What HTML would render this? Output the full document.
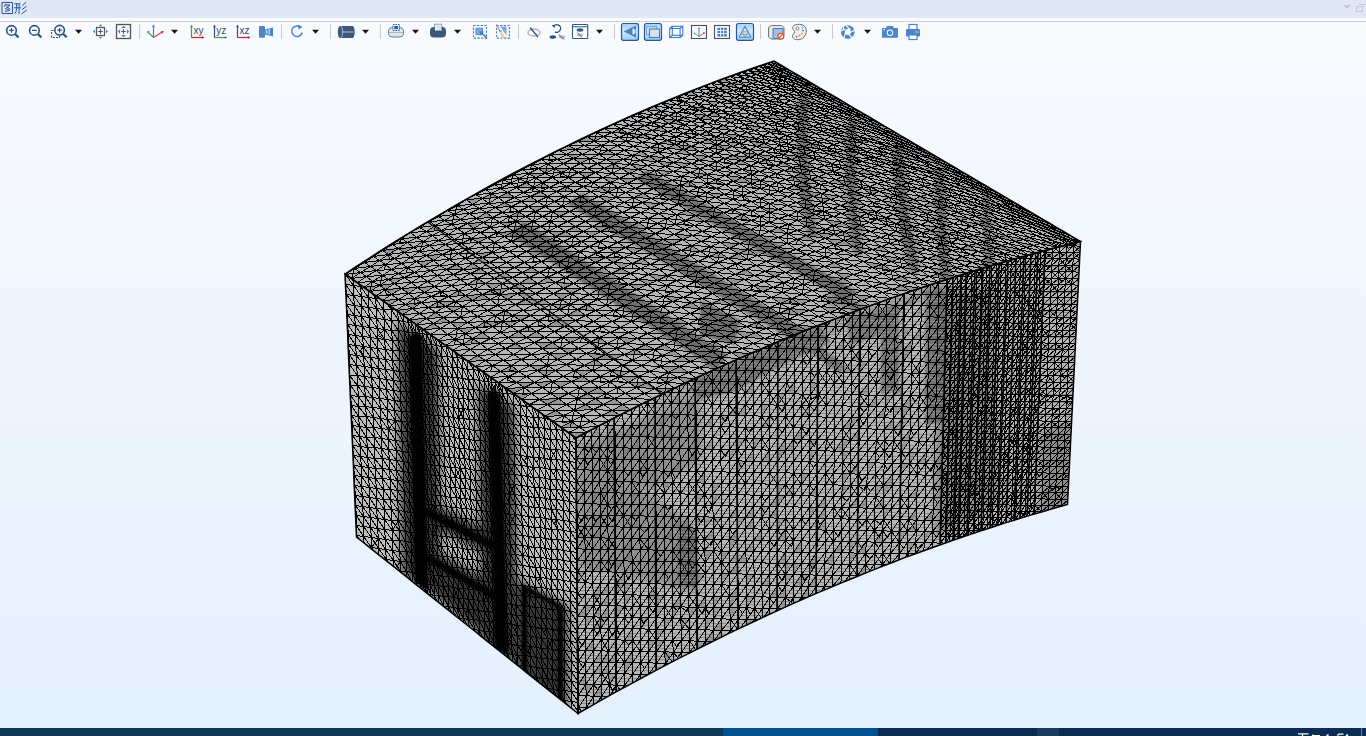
<!DOCTYPE html>
<html><head><meta charset="utf-8">
<style>
html,body{margin:0;padding:0;width:1366px;height:736px;overflow:hidden;font-family:"Liberation Sans",sans-serif;}
#title{position:absolute;left:0;top:0;width:1366px;height:18px;background:#dfe8f4;}
#gap{position:absolute;left:0;top:18px;width:1366px;height:3px;background:#f9fbfe;}
#hr{position:absolute;left:0;top:21px;width:1366px;height:1px;background:#cdd1d6;}
#view{position:absolute;left:0;top:22px;width:1366px;height:706px;background:linear-gradient(#f8fafe,#e4f0fd);}
#task{position:absolute;left:0;top:728px;width:1366px;height:8px;background:#0f3a57;overflow:hidden;border-top:0;}
</style></head><body>
<div id="title"></div><div id="gap"></div><div id="hr"></div>
<div id="view"></div>
<svg width="1366" height="44" viewBox="0 0 1366 44" style="position:absolute;left:0;top:0">
<defs>
<linearGradient id="selg" x1="0" y1="0" x2="0" y2="1"><stop offset="0" stop-color="#a9cdf0"/><stop offset="0.5" stop-color="#d6e9fb"/><stop offset="1" stop-color="#9ccaf3"/></linearGradient>
</defs>
<!-- title -->
<g fill="none" stroke="#1d4f9c" stroke-width="0.95">
 <path d="M2 2.5h10.5v11H2z"/>
 <path d="M6 3.8L4 6.8M5.2 5h4.8L5 9.3M6.5 6.8l4 2.6M6.3 8.8l2.3 0.8M5 11.3l4.8-0.9"/>
 <path d="M14.3 3.8h6.2M14 7.8h6.8M16.6 3.8v4.5q0 3.5-2 5.4M19.1 3.8v9.9"/>
 <path d="M26.2 2.3L22.3 5.6M26.6 6.2L22 9.6M26.8 10.2L21.5 13.8"/>
</g>
<path d="M1343 5 h8 l-4 4z" fill="#c4cad3"/>
<rect x="1356.5" y="6.5" width="6" height="5" fill="none" stroke="#c4cad3"/>
<path d="M1359 4.5 h7" stroke="#c4cad3"/>
<!-- separators -->
<g stroke="#c9ccd0" stroke-width="1">
 <path d="M139.5 24v15M281.5 24v15M330.5 24v15M380.5 24v15M518.5 24v15M614.5 24v15M760.5 24v15M832.5 24v15"/>
</g>
<!-- dropdowns -->
<g fill="#151515">
 <path d="M75 29.8h7l-3.5 4z"/><path d="M171 29.8h7l-3.5 4z"/><path d="M312 29.8h7l-3.5 4z"/><path d="M362 29.8h7l-3.5 4z"/>
 <path d="M412 29.8h7l-3.5 4z"/><path d="M454 29.8h7l-3.5 4z"/><path d="M596 29.8h7l-3.5 4z"/><path d="M814 29.8h7l-3.5 4z"/><path d="M864 29.8h7l-3.5 4z"/>
</g>
<!-- zoom in / out -->
<g stroke="#2b5383" fill="none">
 <circle cx="11.5" cy="30.4" r="4.8" stroke-width="1.6"/>
 <path d="M15 34 L18.5 37.5" stroke-width="2.3"/>
 <path d="M9.2 30.4h4.6M11.5 28.1v4.6" stroke-width="1.2"/>
 <circle cx="34.4" cy="30.4" r="4.8" stroke-width="1.6"/>
 <path d="M37.9 34 L41.4 37.5" stroke-width="2.3"/>
 <path d="M32 30.4h4.8" stroke-width="1.2"/>
 <rect x="51.5" y="30.5" width="8" height="7" stroke-width="1.1" stroke-dasharray="2 1.3"/>
 <circle cx="59.6" cy="30.2" r="4.8" stroke-width="1.6" fill="#f8fafe"/>
 <path d="M63.1 33.8 L66.6 37.3" stroke-width="2.3"/>
 <path d="M57.3 30.2h4.6M59.6 27.9v4.6" stroke-width="1.2"/>
</g>
<!-- zoom extents -->
<g>
 <rect x="96.5" y="27.5" width="8" height="8" fill="none" stroke="#555" stroke-width="1.2"/>
 <path d="M98.3 31.5h4.4M100.5 29.3v4.4" stroke="#555" stroke-width="1.1"/>
 <g fill="#4a86c8"><path d="M100.5 24.3l2 2h-4z"/><path d="M100.5 38.7l2-2h-4z"/><path d="M93 31.5l2-2v4z"/><path d="M108 31.5l-2-2v4z"/></g>
 <rect x="116.5" y="24.5" width="14" height="14" fill="none" stroke="#555" stroke-width="1.3"/>
 <path d="M121.3 31.5h4.4M123.5 29.3v4.4" stroke="#555" stroke-width="1.1"/>
 <g fill="#4a86c8"><path d="M123.5 25.8l2.5 2.3h-5z"/><path d="M123.5 37.2l2.5-2.3h-5z"/><path d="M117.8 31.5l2.3-2.5v5z"/><path d="M129.2 31.5l-2.3-2.5v5z"/></g>
</g>
<!-- axis -->
<g stroke-width="1.2" fill="none">
 <path d="M153.5 37.5V26" stroke="#3f7fc4"/><path d="M153.5 37.5L148 32" stroke="#4aab3c"/><path d="M153.5 37.5L163 31.5" stroke="#e0306a"/>
</g>
<path d="M153.5 24.5l1.6 2.6h-3.2z" fill="#3f7fc4"/><path d="M147 31l3 .4-2.3 2.3z" fill="#4aab3c"/><path d="M164 31l-3.2.2 1.5 2.6z" fill="#e0306a"/>
<!-- xy yz xz -->
<g stroke-width="1.2" fill="none">
 <path d="M191.5 37.5V26" stroke="#3aa23a"/><path d="M191.5 37.5H203" stroke="#c8262f"/>
 <path d="M214.5 37.5V26" stroke="#2b5383"/><path d="M214.5 37.5H226" stroke="#3aa23a"/>
 <path d="M237.5 37.5V26" stroke="#2b5383"/><path d="M237.5 37.5H249" stroke="#c8262f"/>
</g>
<g><path d="M191.5 24.8l1.5 2.4h-3z" fill="#3aa23a"/><path d="M204.3 37.5l-2.4 1.5v-3z" fill="#c8262f"/>
<path d="M214.5 24.8l1.5 2.4h-3z" fill="#2b5383"/><path d="M227.3 37.5l-2.4 1.5v-3z" fill="#3aa23a"/>
<path d="M237.5 24.8l1.5 2.4h-3z" fill="#2b5383"/><path d="M250.3 37.5l-2.4 1.5v-3z" fill="#c8262f"/></g>
<g font-family="Liberation Sans, sans-serif" font-size="10" fill="#3b4a5a">
 <text x="193.6" y="34.2">xy</text><text x="216.2" y="34.2">yz</text><text x="239.6" y="34.2">xz</text>
</g>
<!-- camera projection -->
<g fill="#4a86c8"><rect x="259" y="26" width="6" height="11.8" rx="1"/><path d="M265 29.5l8-2v9l-8-2z"/></g>
<g fill="#bcd4ee"><rect x="265.8" y="30" width="1.5" height="3.5"/><rect x="268.5" y="29" width="1.5" height="5.5"/></g>
<!-- rotate -->
<path d="M300.5 27.2 A5.3 5.3 0 1 0 302.2 32.5" fill="none" stroke="#4a86c8" stroke-width="1.5"/>
<path d="M298 24.5l4.5 2.6-4 2.5z" fill="#4a86c8"/>
<!-- cylinder -->
<path d="M340 26h12.5a2.2 6 0 0 1 0 12H340a2.2 6 0 0 1 0-12z" fill="#3b5878"/>
<path d="M340.5 26.2 a2.2 5.8 0 0 1 0 11.6" fill="none" stroke="#c7d6e6" stroke-width="0.7"/>
<path d="M341.5 32h12" stroke="#c7d6e6" stroke-width="0.8"/>
<!-- light rounded rect -->
<rect x="388.5" y="27.5" width="15" height="9.5" rx="3.5" fill="#e4e6e8" stroke="#5b7fa8" stroke-width="1"/>
<path d="M389 32.5h14" stroke="#9ab0c8" stroke-width="0.8"/>
<rect x="393" y="24.5" width="6.5" height="6" fill="#fff" stroke="#1f5fae" stroke-width="1" stroke-dasharray="1.6 0.9"/>
<rect x="394.2" y="26" width="4" height="3.2" fill="#1f5fae"/>
<!-- dark rounded rect -->
<rect x="430" y="27" width="16" height="10.5" rx="4" fill="#3b5878"/>
<rect x="435" y="24.5" width="6.5" height="6" fill="#e0e4e8" stroke="#fff" stroke-width="1" stroke-dasharray="1.6 0.9"/>
<rect x="434.6" y="24.1" width="7.3" height="6.8" fill="none" stroke="#3b5878" stroke-width="0.5"/>
<!-- select -->
<rect x="473.5" y="25.5" width="13" height="12.6" fill="none" stroke="#3f7fc4" stroke-width="1.1" stroke-dasharray="2.2 1.4"/>
<rect x="476" y="28.2" width="6.5" height="6.5" fill="#7aaee0" stroke="#3f7fc4" stroke-width="0.8"/>
<path d="M480.5 32.2l6.5 6" stroke="#3f7fc4" stroke-width="1.6"/>
<path d="M479.3 31l4.8 0.8-3.8 3.6z" fill="#3f7fc4"/>
<!-- broom -->
<rect x="496.5" y="25.5" width="13" height="12.6" fill="none" stroke="#3f7fc4" stroke-width="1.1" stroke-dasharray="2.2 1.4"/>
<path d="M500 26.5h6.5v9" fill="#7aaee0"/>
<path d="M496.5 24.5l3.6 7" stroke="#a88455" stroke-width="1.1"/>
<path d="M499.5 31.5l1.8-0.6 4 6.5-3.5 1.3z" fill="#e8d2a8"/>
<path d="M499.3 31.6l2.2-0.9" stroke="#d8553a" stroke-width="1"/>
<!-- eye slash -->
<ellipse cx="534" cy="32.5" rx="6" ry="3.4" fill="none" stroke="#b8b8b8" stroke-width="1.6"/>
<path d="M530 27.5l8 9.5" stroke="#2b5383" stroke-width="1.2"/>
<!-- reset hide -->
<path d="M553.5 26.5 A3.8 3.8 0 1 1 555 31.8" fill="none" stroke="#2b5383" stroke-width="1.3"/>
<path d="M551.5 25.5l3.3-1v3.6z" fill="#2b5383"/>
<ellipse cx="552.8" cy="37" rx="3.2" ry="1.8" fill="#2b5383"/>
<ellipse cx="562" cy="37" rx="3.2" ry="1.8" fill="#c0c0c0"/>
<path d="M558.7 34.5l5.5 5" stroke="#2b5383" stroke-width="0.9"/>
<!-- window eye -->
<rect x="572.5" y="24.5" width="15.2" height="14" rx="0.8" fill="#fff" stroke="#2b5b8f" stroke-width="1.1"/>
<path d="M573 26.8h14.5" stroke="#2b5b8f" stroke-width="1"/>
<ellipse cx="580" cy="30" rx="3.4" ry="1.7" fill="#2b5b8f"/>
<ellipse cx="580" cy="35" rx="3.4" ry="1.7" fill="#c4c4c4"/>
<path d="M577.5 32.5l4.5 5" stroke="#2b5b8f" stroke-width="0.9"/>
<!-- selected buttons -->
<rect x="621.5" y="23.5" width="17" height="16.8" rx="2" fill="url(#selg)" stroke="#2457a5" stroke-width="1.2"/>
<path d="M623.5 31.5l12.5-6v12z" fill="#3f7fc4" opacity="0.95"/>
<path d="M636 25.5 A5 6 0 0 1 636 37.5" fill="none" stroke="#3f7fc4" stroke-width="0"/>
<path d="M632.5 28.5a3 3 0 0 1 0 6" fill="#d7e8f8"/>
<path d="M636 25l2.5-1.5M636 38l2.5 1.5" stroke="#777" stroke-width="0.6"/>
<rect x="644.5" y="23.5" width="17" height="16.8" rx="2" fill="url(#selg)" stroke="#2457a5" stroke-width="1.2"/>
<rect x="646.5" y="26.5" width="10" height="8" fill="none" stroke="#7ba7d6" stroke-width="1"/>
<rect x="649.5" y="29" width="10" height="8.5" fill="#d9e3ee" stroke="#3f7fc4" stroke-width="1.1"/>
<!-- wireframe box -->
<g fill="none" stroke="#3f7fc4" stroke-width="1.1">
 <rect x="669.6" y="28.5" width="10.5" height="9"/><rect x="672.3" y="26.3" width="10.5" height="9"/>
 <path d="M669.6 28.5l2.7-2.2M680.1 28.5l2.7-2.2M680.1 37.5l2.7-2.2M669.6 37.5l2.7-2.2"/>
</g>
<!-- axis box -->
<rect x="691.5" y="25.5" width="15" height="13" fill="none" stroke="#505050" stroke-width="1.1"/>
<path d="M699 36.5V28.5" stroke="#3f7fc4" stroke-width="0.9"/><path d="M699 36.5l-4.5-3" stroke="#4aab3c" stroke-width="0.9"/><path d="M699 36.5l5-3.5" stroke="#e0306a" stroke-width="0.9"/>
<path d="M699 27.3l1.3 1.8h-2.6z" fill="#3f7fc4"/><circle cx="694.3" cy="33.3" r="0.9" fill="#4aab3c"/><circle cx="704" cy="32.9" r="0.9" fill="#e0306a"/>
<!-- grid -->
<rect x="714.5" y="25.5" width="15" height="13" fill="none" stroke="#505050" stroke-width="1.1"/>
<g fill="#3f7fc4"><rect x="717.5" y="27.8" width="9.3" height="8.8"/></g>
<g stroke="#fff" stroke-width="0.9"><path d="M717.5 30.5h9.3M717.5 33.5h9.3M720.6 27.8v8.8M723.6 27.8v8.8"/></g>
<g fill="#3f7fc4" opacity="0"><rect x="0" y="0" width="1" height="1"/></g>
<!-- mesh selected -->
<rect x="736.5" y="23.5" width="17" height="16.8" rx="2" fill="url(#selg)" stroke="#2457a5" stroke-width="1.2"/>
<path d="M745 26.3l6 10.8h-12z" fill="#e0e0e0" stroke="#3f7fc4" stroke-width="1"/>
<path d="M742 31.8h6M741 34.5h8M745 26.3l-3 5.5 3 5.3 3-5.3z" fill="none" stroke="#3f7fc4" stroke-width="0.5"/>
<!-- box no entry -->
<path d="M768.5 27.5l3-2h10l2.5 2v9l-3 2.5h-10l-2.5-2z" fill="#e8e8e8" stroke="#666" stroke-width="0.9"/>
<path d="M773 28.5h10v10h-10z" fill="#a8bde0" stroke="#3f7fc4" stroke-width="1"/>
<circle cx="780.8" cy="36.2" r="2.9" fill="#fff" stroke="#e0502a" stroke-width="1.2"/>
<path d="M779 38l3.6-3.6" stroke="#e0502a" stroke-width="1.1"/>
<!-- palette -->
<path d="M797.5 24.5c5 -1 9 2 8.8 6.5c-0.2 4.5 -3 8.5 -8.5 8.7c-3.5 0.1 -5.6 -1.5 -5.3 -3.6c0.3 -2.2 2.3 -2.3 2 -4.5c-0.3 -2.2 -2.3 -2 -2 -4c0.3 -1.8 2.5 -2.8 5 -3.1z" fill="#f2f2f2" stroke="#6a6a6a" stroke-width="1"/>
<circle cx="797.5" cy="28.5" r="1.5" fill="#fff" stroke="#777" stroke-width="0.9"/>
<circle cx="802.5" cy="27.5" r="1" fill="#56c3ef"/><circle cx="803" cy="30.5" r="1" fill="#3a8fd8"/><circle cx="802" cy="33.5" r="1" fill="#f3a11d"/><circle cx="799.5" cy="35.5" r="1" fill="#f0772a"/><circle cx="796.5" cy="36.7" r="1" fill="#e53a9a"/>
<!-- aperture -->
<circle cx="847.8" cy="32" r="6.8" fill="#4a86c8"/>
<circle cx="847.8" cy="32" r="3" fill="#fff"/>
<g stroke="#fff" stroke-width="1.1"><path d="M846 25.5l4.5 4.5M854.2 30.5l-5 2.5M852 37.5l-3.5-3.5M844 37.5l1.5-4.5M841.3 31l4-2M843 26l1 4.5"/></g>
<!-- camera -->
<rect x="882" y="28" width="16" height="9.8" rx="0.8" fill="#4a86c8"/>
<rect x="886.5" y="26" width="7" height="3" rx="0.5" fill="#4a86c8"/>
<circle cx="890" cy="32.8" r="3.2" fill="#fff"/><circle cx="890" cy="32.8" r="2.2" fill="#4a86c8"/>
<rect x="883.5" y="29.2" width="1.5" height="1.2" fill="#fff"/>
<!-- printer -->
<rect x="909" y="24.5" width="8" height="5" fill="#fff" stroke="#4a86c8" stroke-width="1.2"/>
<rect x="906" y="29" width="14" height="7.5" rx="1.2" fill="#4a86c8"/>
<rect x="909" y="35" width="8" height="4.5" fill="#fff" stroke="#4a86c8" stroke-width="1.2"/>
<rect x="915.5" y="31.5" width="1" height="1" fill="#fff"/><rect x="917.5" y="31.5" width="1" height="1" fill="#fff"/>
</svg>

<svg width="1366" height="736" viewBox="0 0 1366 736" style="position:absolute;left:0;top:0">
<defs>
<clipPath id="ct"><path d="M345 274 L356 266.7 L367 259.6 L378 252.5 L389 245.5 L400 238.6 L411 231.9 L422 225.2 L433 218.6 L444 212.1 L455 205.7 L466 199.3 L477 193.1 L488 187 L499 181 L510 175 L521 169.2 L532 163.4 L543 157.8 L554 152.2 L565 146.8 L576 141.4 L587 136.1 L598 131 L609 125.9 L620 120.9 L631 116 L642 111.2 L653 106.5 L664 101.9 L675 97.4 L686 93 L697 88.6 L708 84.4 L719 80.3 L730 76.2 L741 72.3 L752 68.4 L763 64.7 L774 61 L774 61 L781.9 65.6 L789.7 70.3 L797.6 74.9 L805.4 79.5 L813.3 84.1 L821.2 88.8 L829 93.4 L836.9 98 L844.7 102.7 L852.6 107.3 L860.4 111.9 L868.3 116.5 L876.2 121.2 L884 125.8 L891.9 130.4 L899.7 135.1 L907.6 139.7 L915.5 144.3 L923.3 148.9 L931.2 153.6 L939 158.2 L946.9 162.8 L954.8 167.4 L962.6 172.1 L970.5 176.7 L978.3 181.3 L986.2 186 L994.1 190.6 L1001.9 195.2 L1009.8 199.8 L1017.6 204.5 L1025.5 209.1 L1033.3 213.7 L1041.2 218.4 L1049.1 223 L1056.9 227.6 L1064.8 232.2 L1072.6 236.9 L1080.5 241.5 L1080.5 241.5 L1067.6 244.7 L1054.6 248 L1041.7 251.5 L1028.7 255 L1015.8 258.6 L1002.8 262.3 L989.9 266.1 L976.9 270 L964 274 L951 278.1 L938.1 282.2 L925.2 286.5 L912.2 290.9 L899.3 295.4 L886.3 299.9 L873.4 304.6 L860.5 309.3 L847.5 314.2 L834.6 319.1 L821.7 324.2 L808.7 329.3 L795.8 334.5 L782.9 339.8 L769.9 345.3 L757 350.8 L744.1 356.4 L731.1 362.1 L718.2 367.9 L705.3 373.8 L692.3 379.8 L679.4 385.9 L666.5 392.1 L653.6 398.3 L640.6 404.7 L627.7 411.2 L614.8 417.7 L601.8 424.4 L588.9 431.2 L576 438 L576 438 L570.1 433.8 L564.2 429.6 L558.2 425.4 L552.3 421.2 L546.4 417 L540.5 412.8 L534.5 408.6 L528.6 404.4 L522.7 400.2 L516.8 395.9 L510.8 391.7 L504.9 387.5 L499 383.3 L493.1 379.1 L487.2 374.9 L481.2 370.7 L475.3 366.5 L469.4 362.3 L463.5 358.1 L457.5 353.9 L451.6 349.7 L445.7 345.5 L439.8 341.3 L433.8 337.1 L427.9 332.9 L422 328.7 L416.1 324.5 L410.2 320.3 L404.2 316.1 L398.3 311.8 L392.4 307.6 L386.5 303.4 L380.5 299.2 L374.6 295 L368.7 290.8 L362.8 286.6 L356.8 282.4 L350.9 278.2 L345 274Z"/></clipPath>
<clipPath id="cl"><path d="M345 274 L350.9 278.2 L356.8 282.4 L362.8 286.6 L368.7 290.8 L374.6 295 L380.5 299.2 L386.5 303.4 L392.4 307.6 L398.3 311.8 L404.2 316.1 L410.2 320.3 L416.1 324.5 L422 328.7 L427.9 332.9 L433.8 337.1 L439.8 341.3 L445.7 345.5 L451.6 349.7 L457.5 353.9 L463.5 358.1 L469.4 362.3 L475.3 366.5 L481.2 370.7 L487.2 374.9 L493.1 379.1 L499 383.3 L504.9 387.5 L510.8 391.7 L516.8 395.9 L522.7 400.2 L528.6 404.4 L534.5 408.6 L540.5 412.8 L546.4 417 L552.3 421.2 L558.2 425.4 L564.2 429.6 L570.1 433.8 L576 438 L576 438 L576.1 445.1 L576.1 452.1 L576.2 459.2 L576.2 466.3 L576.3 473.3 L576.3 480.4 L576.4 487.4 L576.4 494.5 L576.5 501.6 L576.5 508.6 L576.6 515.7 L576.6 522.8 L576.7 529.8 L576.7 536.9 L576.8 544 L576.8 551 L576.9 558.1 L576.9 565.2 L577 572.2 L577 579.3 L577.1 586.3 L577.1 593.4 L577.2 600.5 L577.2 607.5 L577.3 614.6 L577.3 621.7 L577.4 628.7 L577.4 635.8 L577.5 642.9 L577.5 649.9 L577.6 657 L577.6 664.1 L577.7 671.1 L577.7 678.2 L577.8 685.2 L577.8 692.3 L577.9 699.4 L577.9 706.4 L578 713.5 L578 713.5 L572.3 709 L566.6 704.4 L561 699.9 L555.3 695.4 L549.6 690.9 L543.9 686.3 L538.2 681.8 L532.6 677.3 L526.9 672.8 L521.2 668.2 L515.5 663.7 L509.8 659.2 L504.2 654.7 L498.5 650.1 L492.8 645.6 L487.1 641.1 L481.4 636.6 L475.8 632 L470.1 627.5 L464.4 623 L458.7 618.5 L453.1 613.9 L447.4 609.4 L441.7 604.9 L436 600.4 L430.3 595.8 L424.7 591.3 L419 586.8 L413.3 582.3 L407.6 577.7 L401.9 573.2 L396.3 568.7 L390.6 564.2 L384.9 559.6 L379.2 555.1 L373.5 550.6 L367.9 546.1 L362.2 541.5 L356.5 537 L356.5 537 L356.2 530.3 L355.9 523.5 L355.6 516.8 L355.3 510 L355 503.3 L354.7 496.5 L354.4 489.8 L354.1 483.1 L353.8 476.3 L353.6 469.6 L353.3 462.8 L353 456.1 L352.7 449.3 L352.4 442.6 L352.1 435.8 L351.8 429.1 L351.5 422.4 L351.2 415.6 L350.9 408.9 L350.6 402.1 L350.3 395.4 L350 388.6 L349.7 381.9 L349.4 375.2 L349.1 368.4 L348.8 361.7 L348.5 354.9 L348.2 348.2 L347.9 341.4 L347.7 334.7 L347.4 327.9 L347.1 321.2 L346.8 314.5 L346.5 307.7 L346.2 301 L345.9 294.2 L345.6 287.5 L345.3 280.7 L345 274Z"/></clipPath>
<clipPath id="cf"><path d="M576 438 L588.9 431.2 L601.8 424.4 L614.8 417.7 L627.7 411.2 L640.6 404.7 L653.6 398.3 L666.5 392.1 L679.4 385.9 L692.3 379.8 L705.3 373.8 L718.2 367.9 L731.1 362.1 L744.1 356.4 L757 350.8 L769.9 345.3 L782.9 339.8 L795.8 334.5 L808.7 329.3 L821.7 324.2 L834.6 319.1 L847.5 314.2 L860.5 309.3 L873.4 304.6 L886.3 299.9 L899.3 295.4 L912.2 290.9 L925.2 286.5 L938.1 282.2 L951 278.1 L964 274 L976.9 270 L989.9 266.1 L1002.8 262.3 L1015.8 258.6 L1028.7 255 L1041.7 251.5 L1054.6 248 L1067.6 244.7 L1080.5 241.5 L1080.5 241.5 L1080.2 248.2 L1079.8 255 L1079.5 261.7 L1079.2 268.5 L1078.8 275.2 L1078.5 282 L1078.2 288.7 L1077.8 295.4 L1077.5 302.2 L1077.2 308.9 L1076.8 315.7 L1076.5 322.4 L1076.2 329.2 L1075.8 335.9 L1075.5 342.7 L1075.2 349.4 L1074.8 356.1 L1074.5 362.9 L1074.2 369.6 L1073.8 376.4 L1073.5 383.1 L1073.2 389.9 L1072.8 396.6 L1072.5 403.3 L1072.2 410.1 L1071.8 416.8 L1071.5 423.6 L1071.2 430.3 L1070.8 437.1 L1070.5 443.8 L1070.2 450.6 L1069.8 457.3 L1069.5 464 L1069.2 470.8 L1068.8 477.5 L1068.5 484.3 L1068.2 491 L1067.8 497.8 L1067.5 504.5 L1067.5 504.5 L1054.9 508 L1042.4 511.7 L1029.8 515.4 L1017.2 519.2 L1004.7 523.1 L992.1 527.2 L979.6 531.3 L967 535.5 L954.4 539.8 L941.9 544.2 L929.3 548.7 L916.8 553.3 L904.2 557.9 L891.7 562.7 L879.1 567.6 L866.6 572.6 L854 577.7 L841.5 582.8 L828.9 588.1 L816.3 593.4 L803.8 598.9 L791.2 604.4 L778.7 610.1 L766.2 615.8 L753.6 621.7 L741.1 627.6 L728.5 633.6 L716 639.8 L703.4 646 L690.9 652.3 L678.3 658.7 L665.8 665.2 L653.2 671.8 L640.7 678.5 L628.2 685.3 L615.6 692.2 L603.1 699.2 L590.5 706.3 L578 713.5 L578 713.5 L577.9 706.4 L577.9 699.4 L577.8 692.3 L577.8 685.2 L577.7 678.2 L577.7 671.1 L577.6 664.1 L577.6 657 L577.5 649.9 L577.5 642.9 L577.4 635.8 L577.4 628.7 L577.3 621.7 L577.3 614.6 L577.2 607.5 L577.2 600.5 L577.1 593.4 L577.1 586.3 L577 579.3 L577 572.2 L576.9 565.2 L576.9 558.1 L576.8 551 L576.8 544 L576.7 536.9 L576.7 529.8 L576.6 522.8 L576.6 515.7 L576.5 508.6 L576.5 501.6 L576.4 494.5 L576.4 487.4 L576.3 480.4 L576.3 473.3 L576.2 466.3 L576.2 459.2 L576.1 452.1 L576.1 445.1 L576 438Z"/></clipPath>
<filter id="b1" x="-50%" y="-50%" width="200%" height="200%"><feGaussianBlur stdDeviation="1"/></filter>
<filter id="b2" x="-50%" y="-50%" width="200%" height="200%"><feGaussianBlur stdDeviation="2"/></filter>
<filter id="b3" x="-50%" y="-50%" width="200%" height="200%"><feGaussianBlur stdDeviation="3"/></filter>
<filter id="b5" x="-50%" y="-50%" width="200%" height="200%"><feGaussianBlur stdDeviation="5"/></filter>
<filter id="b8" x="-50%" y="-50%" width="200%" height="200%"><feGaussianBlur stdDeviation="8"/></filter>
</defs>
<g clip-path="url(#ct)">
<path d="M345 274 L356 266.7 L367 259.6 L378 252.5 L389 245.5 L400 238.6 L411 231.9 L422 225.2 L433 218.6 L444 212.1 L455 205.7 L466 199.3 L477 193.1 L488 187 L499 181 L510 175 L521 169.2 L532 163.4 L543 157.8 L554 152.2 L565 146.8 L576 141.4 L587 136.1 L598 131 L609 125.9 L620 120.9 L631 116 L642 111.2 L653 106.5 L664 101.9 L675 97.4 L686 93 L697 88.6 L708 84.4 L719 80.3 L730 76.2 L741 72.3 L752 68.4 L763 64.7 L774 61 L774 61 L781.9 65.6 L789.7 70.3 L797.6 74.9 L805.4 79.5 L813.3 84.1 L821.2 88.8 L829 93.4 L836.9 98 L844.7 102.7 L852.6 107.3 L860.4 111.9 L868.3 116.5 L876.2 121.2 L884 125.8 L891.9 130.4 L899.7 135.1 L907.6 139.7 L915.5 144.3 L923.3 148.9 L931.2 153.6 L939 158.2 L946.9 162.8 L954.8 167.4 L962.6 172.1 L970.5 176.7 L978.3 181.3 L986.2 186 L994.1 190.6 L1001.9 195.2 L1009.8 199.8 L1017.6 204.5 L1025.5 209.1 L1033.3 213.7 L1041.2 218.4 L1049.1 223 L1056.9 227.6 L1064.8 232.2 L1072.6 236.9 L1080.5 241.5 L1080.5 241.5 L1067.6 244.7 L1054.6 248 L1041.7 251.5 L1028.7 255 L1015.8 258.6 L1002.8 262.3 L989.9 266.1 L976.9 270 L964 274 L951 278.1 L938.1 282.2 L925.2 286.5 L912.2 290.9 L899.3 295.4 L886.3 299.9 L873.4 304.6 L860.5 309.3 L847.5 314.2 L834.6 319.1 L821.7 324.2 L808.7 329.3 L795.8 334.5 L782.9 339.8 L769.9 345.3 L757 350.8 L744.1 356.4 L731.1 362.1 L718.2 367.9 L705.3 373.8 L692.3 379.8 L679.4 385.9 L666.5 392.1 L653.6 398.3 L640.6 404.7 L627.7 411.2 L614.8 417.7 L601.8 424.4 L588.9 431.2 L576 438 L576 438 L570.1 433.8 L564.2 429.6 L558.2 425.4 L552.3 421.2 L546.4 417 L540.5 412.8 L534.5 408.6 L528.6 404.4 L522.7 400.2 L516.8 395.9 L510.8 391.7 L504.9 387.5 L499 383.3 L493.1 379.1 L487.2 374.9 L481.2 370.7 L475.3 366.5 L469.4 362.3 L463.5 358.1 L457.5 353.9 L451.6 349.7 L445.7 345.5 L439.8 341.3 L433.8 337.1 L427.9 332.9 L422 328.7 L416.1 324.5 L410.2 320.3 L404.2 316.1 L398.3 311.8 L392.4 307.6 L386.5 303.4 L380.5 299.2 L374.6 295 L368.7 290.8 L362.8 286.6 L356.8 282.4 L350.9 278.2 L345 274Z" fill="#b6b6b6"/>
<g fill="#585858" opacity="0.75" filter="url(#b1)">
<path d="M508 234 L524 221 L728 355 L716 370Z"/>
<path d="M567 204 L582 193 L812 335 L800 345Z"/>
<path d="M636 179 L647 170 L858 292 L846 302Z"/>
<path d="M700 300 L740 320 L735 345 L700 335Z"/>
</g>
<g fill="none" stroke="#4a4a4a" opacity="0.6" filter="url(#b2)" stroke-linecap="round">
<path d="M804 98Q798 165 812 232" stroke-width="11"/>
<path d="M852 124Q848 190 858 250" stroke-width="11"/>
<path d="M898 150Q900 210 914 268" stroke-width="11"/>
<path d="M940 174Q940 222 946 278" stroke-width="10"/>
<path d="M986 200Q986 240 992 282" stroke-width="8"/>
<path d="M880 330Q860 300 830 300" stroke-width="9"/>
</g>
<path d="M774 61 L790.1 70.5 L806.3 80 L822.4 89.5 L838.5 99 L854.7 108.5 L870.8 118 L886.9 127.5 L903.1 137 L919.2 146.5 L935.3 156 L951.4 165.5 L967.6 175 L983.7 184.5 L999.8 194 L1016 203.5 L1032.1 213 L1048.2 222.5 L1064.4 232 L1080.5 241.5 L1066.5 239.5 L1050.4 230 L1034.2 220.5 L1018.1 211 L1002 201.5 L985.8 192 L969.7 182.5 L953.6 173 L937.4 163.5 L921.3 154 L905.2 144.5 L889.1 135 L872.9 125.5 L856.8 116 L840.7 106.5 L824.5 97 L808.4 87.5 L792.3 78 L776.1 68.5 L760 59Z" fill="#333" opacity="0.5" filter="url(#b3)"/>
<path d="M427.8 222L662 394" stroke="#000" stroke-width="1.3" fill="none"/>
<path d="M363 287l6 4 10-6zM382 300l6 5 10-6zM395 310l7 4 10-6zM409 319l7 5 10-6zM423 329l10-6 7 5zM467 361l10-6 8 5zM505 388l8 5 11-6zM513 393l8 6 10-6zM544 416l11-6 8 5zM560 427l11-6 8 6zM568 432l8 6 11-6zM379 285l6 4 9-6zM385 289l6 5 10-6zM405 304l7 4 9-6zM426 318l9-6 8 5zM433 323l10-6 7 5zM462 344l10-6 8 5zM500 371l11-6 7 6zM516 382l8 5 10-5zM539 399l8 5 11-6zM547 404l11-6 8 6zM388 279l6 4 10-6zM401 288l7 5 9-6zM428 307l10-6 7 5zM450 322l7 6 10-6zM457 328l8 5 10-6zM472 338l10-6 8 6zM534 382l8 5 10-6zM550 393l8 5 10-5zM574 410l11-6 8 5zM417 287l7 5 10-6zM438 301l7 5 10-5zM445 306l8 5 9-5zM475 327l10-6 7 5zM505 348l10-5 8 5zM529 365l8 5 10-5zM537 370l8 6 10-6zM552 381l8 6 11-6zM577 398l10-5 8 5zM585 404l10-6 8 6zM601 415l11-5 8 5zM382 250l6 4 10-6zM448 296l10-6 7 5zM455 301l10-6 7 5zM485 321l7 5 10-5zM508 337l10-6 8 6zM571 381l11-5 8 5zM579 387l8 6 11-6zM587 393l11-6 8 6zM603 404l11-6 8 6zM612 410l10-6 9 6zM398 248l6 4 9-5zM416 261l7 5 10-6zM465 295l7 5 10-6zM472 300l10-6 8 5zM495 315l10-5 7 5zM502 321l8 5 10-6zM518 331l10-5 8 5zM526 337l10-6 8 6zM534 342l8 6 10-6zM542 348l10-6 8 6zM549 353l8 6 11-6zM574 370l8 6 10-6zM426 255l7 5 9-6zM446 269l10-5 7 5zM467 284l10-6 8 5zM482 294l10-5 7 5zM512 315l8 5 10-5zM560 348l8 5 10-5zM584 365l11-6 8 6zM463 269l9-6 8 5zM470 273l10-5 7 5zM485 283l7 6 10-6zM492 289l7 5 10-6zM499 294l8 5 10-6zM515 304l10-5 8 5zM546 326l10-6 8 6zM562 337l8 5 11-5zM586 353l9 6 10-5zM595 359l10-5 8 5zM611 370l8 6 11-5zM619 376l9 6 10-6zM628 382l8 5 11-5zM636 387l11-5 8 6zM426 231l9-6 6 5zM472 263l10-6 7 5zM494 278l10-6 8 5zM509 288l10-5 8 5zM517 293l8 6 10-6zM525 299l8 5 10-5zM533 304l10-5 8 5zM548 315l8 5 11-5zM556 320l8 6 11-6zM589 342l10-5 8 6zM605 354l8 5 11-5zM655 388l9 5 10-5zM475 253l7 4 10-5zM519 283l10-6 8 6zM551 304l8 5 10-5zM567 315l10-6 8 6zM624 354l11-5 8 5zM658 377l8 5 11-5zM471 238l7 4 9-5zM522 272l9-5 8 5zM537 283l10-6 8 5zM553 293l8 6 10-6zM577 309l10-5 8 6zM618 337l8 6 11-5zM635 349l10-5 9 5zM660 366l8 6 11-6zM668 372l11-6 9 6zM677 377l8 6 11-5zM467 223l6 5 10-6zM555 282l8 6 10-5zM563 288l8 5 10-5zM654 349l10-5 9 6zM662 355l11-5 9 6zM671 361l11-5 8 5zM476 218l10-6 6 5zM497 232l7 4 9-5zM504 236l9-5 8 5zM511 241l10-5 7 5zM526 251l8 5 9-5zM565 277l10-5 8 5zM656 338l11-5 8 6zM682 356l8 5 11-5zM699 367l11-5 8 6zM466 199l6 5 10-6zM499 222l7 4 10-5zM513 231l10-5 7 5zM543 251l10-5 8 5zM567 267l8 5 10-5zM599 288l10-5 9 6zM641 316l10-5 9 6zM649 322l11-5 9 6zM667 333l8 6 11-5zM684 345l10-5 9 6zM482 198l9-5 7 4zM495 207l9-5 7 4zM509 216l9-5 7 5zM530 231l8 5 10-5zM593 272l10-5 8 6zM601 278l10-5 9 5zM609 283l9 6 10-5zM626 294l9 6 10-5zM651 311l9 6 10-5zM669 323l10-5 9 5zM703 346l11-5 9 5zM498 197l9-5 7 5zM548 231l7 5 10-5zM555 236l10-5 8 5zM587 257l8 5 10-5zM611 273l10-5 9 5zM628 284l8 5 11-5zM731 352l9 6 11-5zM521 201l9-5 7 5zM528 206l7 5 10-5zM565 231l10-5 8 5zM605 257l8 5 10-5zM613 262l8 6 11-5zM638 279l9 5 10-4zM664 296l8 5 11-4zM681 307l10-5 9 6zM516 187l10-5 7 5zM530 196l10-5 7 5zM552 211l7 5 10-5zM583 231l8 5 9-5zM607 247l8 5 10-5zM632 263l10-5 8 6zM648 274l9 6 10-5zM709 314l9 6 10-5zM735 331l9 6 11-5zM744 337l11-5 9 6zM533 187l9-5 7 5zM585 221l9-5 8 5zM592 226l8 5 10-5zM600 231l10-5 8 6zM609 236l9-4 9 5zM625 247l8 6 10-5zM711 303l10-4 9 5zM746 326l11-4 9 6zM528 173l7 4 10-4zM556 191l10-5 7 5zM579 206l9-5 8 5zM618 232l10-5 9 5zM643 248l10-5 9 6zM652 253l10-4 8 5zM739 310l11-4 9 5zM538 168l7 5 9-5zM588 201l8 5 10-5zM604 211l8 5 10-4zM628 227l10-5 9 6zM645 238l8 5 10-4zM653 243l10-4 9 5zM688 265l9 6 10-4zM723 288l9 6 10-4zM732 294l9 6 10-5zM759 311l10-4 10 6zM554 168l7 4 9-4zM590 191l10-4 8 5zM598 196l8 5 10-4zM663 239l9 5 10-5zM681 250l10-5 9 6zM725 278l8 6 11-5zM779 313l10-5 9 6zM797 325l9 5 11-4zM578 172l7 5 10-5zM600 187l8 5 9-5zM674 234l8 5 10-4zM708 256l11-4 9 6zM735 274l10-5 9 6zM753 285l9 6 11-4zM771 297l9 6 11-5zM780 303l11-5 9 6zM789 308l9 6 11-4zM559 150l9-5 7 4zM566 154l7 4 9-4zM573 158l7 5 9-5zM602 177l8 5 9-4zM633 197l10-4 8 5zM642 202l8 6 10-5zM728 258l10-5 9 6zM791 298l9 6 11-4zM604 168l9-5 8 5zM619 178l8 5 10-5zM676 214l10-4 9 5zM685 220l10-5 9 6zM720 242l9 6 10-5zM729 248l9 5 10-4zM738 253l10-4 9 6zM765 271l9 5 11-4zM820 306l9 6 11-4zM578 141l9-5 7 5zM599 154l9-4 7 4zM606 159l7 4 10-4zM621 168l8 5 9-4zM637 178l8 5 9-4zM661 194l10-5 8 6zM669 199l10-4 8 5zM730 238l10-5 9 6zM748 249l9 6 10-4zM587 136l7 5 9-5zM630 164l8 5 9-4zM654 179l8 5 10-4zM671 189l9-4 8 6zM722 222l10-4 9 6zM776 256l10-4 10 6zM813 280l11-4 9 6zM832 292l10-4 10 6zM632 155l9-4 8 5zM640 160l9-4 8 5zM655 170l8 5 10-4zM680 185l9-4 9 6zM732 218l10-4 9 6zM759 235l9 6 10-4zM768 241l9 6 10-4zM824 276l9 6 10-4zM833 282l10-4 10 6zM852 294l9 6 11-4zM611 132l9-4 7 5zM649 156l8 5 8-4zM657 161l8 5 8-4zM706 192l9 5 9-3zM769 231l9-4 9 6zM824 266l10-4 10 6zM834 272l9 6 10-4zM627 133l8 4 8-3zM635 137l8-3 8 4zM650 147l8 5 8-4zM673 162l9 5 9-4zM690 172l8 5 9-3zM707 183l9-4 9 5zM797 239l9-4 10 6zM658 143l9-3 8 4zM666 148l9-4 8 5zM674 153l9-4 8 5zM760 207l9 5 9-3zM806 235l9-3 10 6zM892 289l9-4 10 6zM652 130l8-4 7 5zM675 144l8 5 8-3zM683 149l8-3 8 5zM691 154l8 6 9-4zM725 175l8 6 9-4zM733 181l9-4 9 6zM815 232l10 6 9-4zM825 238l9 6 10-4zM834 244l10-4 9 6zM863 261l9 6 10-3zM872 267l10-3 9 6zM892 279l9-3 10 6zM901 285l10 6 10-3zM742 177l9 6 9-3zM834 234l9-3 10 6zM844 240l9-3 9 6zM646 109l8-3 7 5zM660 118l8 5 8-3zM668 123l8-3 8 4zM699 142l9-3 8 5zM708 148l8-4 8 5zM724 158l9-3 8 5zM733 163l8-3 9 5zM742 169l9 5 8-3zM796 202l9 6 9-3zM824 219l9 6 9-3zM833 225l9-3 10 6zM872 249l9-3 9 6zM881 255l10 6 9-3zM676 120l8-3 7 4zM699 134l8-3 8 5zM708 139l7-3 9 5zM716 144l8 5 8-3zM733 155l8 5 8-3zM786 188l8-3 10 5zM795 193l10 6 8-3zM852 228l8-3 10 6zM929 276l9-3 10 6zM661 103l8 4 7-3zM724 141l8 5 8-3zM741 152l8 5 8-3zM758 162l8-3 9 6zM785 179l8-3 9 6zM804 190l9 6 8-3zM813 196l9 6 8-3zM928 267l10 6 9-3zM938 273l10 6 9-3zM691 113l8 5 7-3zM699 118l7-3 8 5zM715 128l8-3 8 5zM723 133l9 5 7-3zM757 154l9 5 8-3zM775 165l8-3 9 5zM784 170l8-3 9 6zM793 176l8-3 9 6zM821 193l9 6 9-3zM898 240l8-3 10 6zM908 246l9 6 9-3zM927 258l9-3 10 6zM937 264l9-3 10 6zM691 106l8 4 7-2zM706 115l8-3 8 5zM739 135l9 5 7-2zM748 140l8 6 8-3zM756 146l8-3 9 5zM810 179l8-3 10 6zM848 202l8-3 10 6zM858 208l9 5 8-2zM877 219l8-2 10 6zM906 237l10 6 8-2zM684 94l7-3 7 5zM722 117l8 5 7-3zM773 148l9 6 7-3zM782 154l9 5 7-3zM791 159l7-3 9 6zM800 165l7-3 9 6zM828 182l7-3 10 6zM846 193l8-2 10 5zM895 223l10 6 8-3zM954 259l8-3 10 6zM705 100l8 5 7-3zM729 114l7-2 8 5zM745 124l9 6 7-3zM789 151l9 5 7-2zM798 156l7-2 10 5zM835 179l10 6 7-3zM893 214l10 6 8-2zM922 232l8-2 10 6zM972 262l10 6 8-2zM705 93l7-3 7 5zM712 97l7-2 8 5zM720 102l7-2 8 4zM728 107l7-3 8 5zM744 117l9 5 7-3zM761 127l9 5 7-2zM770 132l7-2 9 5zM787 143l9 5 7-2zM815 159l7-2 9 6zM862 188l9 6 8-3zM881 200l10 6 7-3zM891 206l10 6 7-3zM920 224l10 6 8-3zM930 230l10 6 8-3zM960 248l8-3 10 6zM980 260l8-3 10 7zM712 90l6-2 8 4zM727 100l7-3 8 5zM735 104l8 5 7-2zM794 140l7-2 10 5zM803 146l8-3 9 6zM879 191l10 6 7-2zM898 203l10 6 8-2zM908 209l8-2 10 6zM948 233l8-2 10 6zM968 245l8-2 10 6zM718 88l7-3 8 5zM758 112l8 5 7-3zM766 117l7-3 9 6zM811 143l6-2 10 6zM820 149l9 5 7-2zM829 154l7-2 9 6zM857 172l7-3 10 6zM906 201l7-2 10 6zM916 207l10 6 7-2zM966 237l7-2 10 6zM717 81l7-3 7 5zM725 85l6-2 8 5zM740 95l7-3 8 5zM773 114l9 6 6-3zM864 169l10 6 7-2zM913 199l7-3 10 6zM923 205l7-3 10 6zM994 247l7-2 10 6zM731 83l7-2 7 4zM763 102l6-2 9 5zM780 112l6-2 9 5zM891 179l7-3 9 6zM930 202l7-2 10 6zM940 208l7-2 10 6zM950 214l10 6 8-2zM960 220l11 6 7-2zM981 233l10 6 7-2zM1001 245l10 6 8-2zM769 100l9 5 6-2zM786 110l9 5 6-2zM822 131l9 5 6-2zM831 136l9 6 7-2zM888 171l7-2 9 5zM937 200l7-2 10 6zM968 218l10 6 7-2zM978 224l7-2 10 6zM988 230l10 7 7-2zM998 237l7-2 10 6zM744 78l8 5 6-2zM784 103l9 5 6-2zM793 108l6-2 9 5zM828 129l9 5 7-2zM875 157l10 6 6-2zM885 163l6-2 10 5zM924 186l10 6 7-2zM975 216l10 6 7-2zM985 222l7-2 10 7zM1005 235l10 6 8-2zM1015 241l11 6 7-2zM782 95l6-2 8 5zM790 100l9 6 6-2zM808 111l6-2 9 5zM853 138l10 5 6-2zM872 149l10 6 6-2zM891 161l10 5 7-1zM931 184l7-2 10 6zM941 190l7-2 10 6zM961 202l7-2 10 6zM1023 239l6-2 11 6zM748 70l8 4 6-2zM796 98l9 6 6-2zM823 114l6-2 9 5zM841 125l9 5 6-2zM878 147l7-2 9 6zM999 219l10 6 6-2zM1040 243l6-2 11 6zM769 77l6-2 8 5zM777 82l8 5 6-2zM802 96l6-1 8 5zM811 102l5-2 9 5zM865 134l10 6 5-2zM894 151l6-2 10 6zM904 157l6-2 10 6zM924 169l5-2 10 6zM954 186l6-1 10 6zM799 90l9 5 4-2zM890 144l5-2 10 6zM900 149l5-1 9 6zM910 155l10 6 4-1zM920 161l4-1 10 6zM929 167l10 6 5-2zM960 185l10 6 5-2zM1001 209l10 6 5-1zM1021 221l5-1 11 6zM1042 234l10 6 6-2zM795 83l9 5 4-1zM812 93l9 5 4-1zM830 104l9 5 4-1zM839 109l9 5 4-1zM905 148l9 6 5-1zM924 160l5-2 10 6zM934 166l10 5 5-1zM975 189l4-1 10 6zM1006 208l4-1 10 6zM1016 214l4-1 11 6zM1037 226l10 6 5-1zM1058 238l10 7 5-2zM799 82l9 5 3-1zM816 92l4-1 8 5zM843 108l3-1 9 5zM870 124l10 6 3-1zM880 130l3-1 10 5zM979 188l10 6 4-1zM1000 200l4-1 10 6zM1052 231l10 6 4-1zM794 76l4-1 8 5zM803 81l8 5 3-1zM828 96l4-1 9 5zM865 117l3-1 9 6zM883 129l10 5 4-1zM913 146l3-1 10 5zM922 151l10 6 4-1zM932 157l4-1 10 6zM963 175l3-1 10 6zM1014 205l4-1 10 7zM1024 212l4-1 11 6z" fill="#6a6a6a" opacity="0.45"/>
<path d="M345 274l9-6 10-6 9-6 9-6 10-6 9-6 9-6 9-5 10-6 9-5 9-6 10-5 9-6 9-5 10-5 9-5 9-5 10-5 9-5 9-5 10-5 9-5 9-4 9-5 10-4 9-5 9-4 8-4 9-4 9-4 8-4 8-3 8-4 8-3 7-3 8-3 7-3 8-3 7-3 6-3 7-2 7-3 6-2 7-3 6-2 6-2 6-2 6-2 6-2 5-2 4-1 4-2 4-1 3-1M351 278l9-6 10-6 9-6 9-6 10-6 9-6 9-5 10-6 9-6 9-5 10-6 9-5 9-5 10-6 9-5 9-5 10-5 9-5 9-5 10-5 9-5 10-4 9-5 9-5 9-4 10-4 9-5 8-4 9-4 9-3 8-4 8-4 8-3 8-3 8-4 7-3 8-3 7-3 7-2 7-3 7-3 6-2 7-3 6-2 7-2 6-3 6-2 6-2 6-2 5-1 4-2 4-1 3-1 4-1M357 282l9-6 10-6 9-6 9-6 10-6 9-5 10-6 9-6 9-5 10-6 9-5 9-6 10-5 9-5 10-6 9-5 9-5 10-5 9-5 10-4 9-5 9-5 10-5 9-4 9-5 10-4 9-4 9-4 8-4 9-4 8-4 8-3 8-4 8-3 8-3 8-3 7-3 7-3 7-3 7-3 7-2 7-3 7-2 6-2 6-3 7-2 6-2 6-2 5-2 6-2 4-1 4-2 3-1 4-1M363 287l9-6 10-6 9-6 10-6 9-6 9-6 10-6 9-5 10-6 9-6 10-5 9-5 10-6 9-5 9-5 10-5 9-5 10-5 9-5 10-5 9-5 9-4 10-5 9-5 10-4 9-4 9-5 9-4 9-4 8-3 9-4 8-4 8-3 8-3 8-3 7-4 8-3 7-2 7-3 7-3 7-2 7-3 6-2 7-3 6-2 6-2 7-2 6-2 5-2 6-2 4-2 4-1 3-1 4-1M369 291l10-6 9-6 10-6 9-6 9-6 10-6 9-5 10-6 9-5 10-6 9-5 10-6 9-5 10-5 9-6 10-5 9-5 10-5 9-4 10-5 9-5 10-5 9-4 10-5 9-4 9-5 9-4 9-4 9-4 9-4 8-3 8-4 9-3 8-4 7-3 8-3 7-3 8-3 7-2 7-3 7-3 7-2 6-3 7-2 6-2 7-2 6-3 6-2 5-1 6-2 4-2 4-1 4-1 3-1M375 296l10-7 9-6 10-6 10-5 9-6 10-6 9-6 10-5 9-6 10-5 9-6 10-5 9-5 10-6 9-5 10-5 9-5 10-5 9-5 10-5 9-4 10-5 10-5 9-4 9-5 10-4 9-4 9-4 9-4 8-4 9-3 8-4 8-3 8-4 8-3 8-3 7-3 8-3 7-3 7-2 7-3 7-2 6-3 7-2 6-2 7-2 6-3 6-2 6-2 5-1 5-2 4-1 3-1 3-1M382 300l9-6 10-6 10-6 9-6 10-6 9-5 10-6 9-6 10-5 10-6 9-5 10-5 9-6 10-5 9-5 10-5 10-5 9-5 10-5 9-5 10-5 9-4 10-5 10-4 9-5 9-4 10-4 9-4 9-4 8-4 9-4 8-3 8-4 8-3 8-3 8-3 8-3 7-3 7-3 7-2 7-3 7-2 7-3 6-2 7-2 6-2 6-3 6-2 6-2 6-1 4-2 4-1 4-1 3-1M388 305l10-6 10-6 9-6 10-6 10-6 9-6 10-5 9-6 10-5 10-6 9-5 10-6 9-5 10-5 10-5 9-5 10-5 10-5 9-5 10-5 9-5 10-4 10-5 9-4 10-5 9-4 9-4 10-4 8-4 9-4 9-4 8-3 8-4 9-3 7-3 8-3 8-3 7-3 7-3 8-2 7-3 6-2 7-3 7-2 6-2 7-2 6-2 6-2 6-2 5-2 5-2 4-1 3-1 4-1M395 310l10-6 9-6 10-6 10-6 9-6 10-6 10-5 9-6 10-6 10-5 9-5 10-6 10-5 9-5 10-5 10-5 9-5 10-5 10-5 9-5 10-5 10-4 9-5 10-4 10-5 9-4 9-4 10-4 8-4 9-4 9-4 8-3 9-3 8-4 8-3 8-3 7-3 8-3 7-2 7-3 7-3 7-2 7-2 6-3 7-2 6-2 7-2 6-2 6-2 5-2 5-1 4-2 3-1 4-1M402 314l10-6 9-6 10-6 10-5 10-6 9-6 10-6 10-5 9-6 10-5 10-6 9-5 10-5 10-5 10-5 9-5 10-5 10-5 9-5 10-5 10-5 10-4 9-5 10-4 10-5 9-4 9-4 10-4 9-4 9-4 8-3 9-4 8-3 8-4 8-3 8-3 8-3 7-2 7-3 8-3 7-2 7-3 7-2 6-3 7-2 6-2 6-2 7-2 6-2 5-2 5-1 4-1 3-1 4-1M409 319l10-6 9-6 10-6 10-5 10-6 9-6 10-6 10-5 10-6 9-5 10-6 10-5 10-5 10-5 9-5 10-5 10-5 10-5 9-5 10-5 10-5 10-4 9-5 10-4 10-5 9-4 10-4 9-4 9-4 9-4 9-3 8-4 8-3 9-3 8-3 8-3 7-3 8-3 7-3 7-2 8-3 7-2 6-3 7-2 7-2 6-3 6-2 7-2 6-2 5-1 5-2 4-1 3-1 4-1M416 324l10-6 9-6 10-6 10-5 10-6 10-6 10-6 9-5 10-6 10-5 10-5 10-6 9-5 10-5 10-5 10-5 10-5 9-5 10-5 10-5 10-4 10-5 10-5 9-4 10-4 10-5 9-4 9-4 9-4 9-3 9-4 9-3 8-4 8-3 8-3 8-3 8-3 8-3 7-3 7-2 7-3 7-2 7-2 7-3 7-2 6-2 7-2 6-2 6-2 5-2 5-1 4-2 4-1 3-1M423 329l10-6 10-6 10-6 9-5 10-6 10-6 10-5 10-6 10-6 10-5 9-5 10-6 10-5 10-5 10-5 10-5 10-5 9-5 10-5 10-4 10-5 10-5 10-4 10-5 9-4 10-4 9-4 10-4 9-4 9-4 9-4 8-3 9-3 8-4 8-3 8-3 8-3 8-2 7-3 7-3 7-2 8-3 6-2 7-2 7-3 6-2 7-2 6-2 6-2 6-1 4-2 4-1 4-1 3-1M430 334l10-6 10-6 10-5 10-6 10-6 10-6 9-5 10-6 10-5 10-6 10-5 10-5 10-6 10-5 10-5 10-5 10-5 10-5 9-4 10-5 10-5 10-4 10-5 10-4 10-5 9-4 10-4 9-4 10-4 9-4 8-3 9-4 9-3 8-3 8-3 8-3 8-3 8-3 7-3 7-2 8-3 7-2 7-2 6-3 7-2 7-2 6-2 6-2 6-2 6-2 5-1 4-1 3-1 4-2M437 340l10-6 10-6 10-6 10-6 10-6 10-5 10-6 10-6 10-5 10-5 10-6 10-5 10-5 10-5 10-5 10-5 10-5 10-5 10-5 10-5 10-4 10-5 9-5 10-4 10-4 10-4 10-5 9-4 9-3 9-4 9-4 9-3 9-3 8-4 8-3 8-3 8-3 8-2 7-3 8-3 7-2 7-3 7-2 7-2 7-2 6-2 7-3 6-2 6-1 5-2 5-2 4-1 4-1 4-1M445 345l10-6 10-6 10-6 10-6 10-6 10-5 10-6 10-5 10-6 10-5 10-6 10-5 10-5 10-5 10-5 10-5 10-5 10-5 10-5 10-4 10-5 10-5 10-4 10-4 10-5 10-4 9-4 10-4 9-4 9-4 9-3 9-4 9-3 8-3 8-3 8-3 8-3 8-3 7-2 8-3 7-2 7-3 7-2 7-2 7-3 7-2 6-2 6-2 7-2 5-1 5-2 4-1 4-1 3-1M452 350l10-6 10-6 10-6 10-6 10-5 10-6 11-5 10-6 10-5 10-6 10-5 10-5 10-6 10-5 10-5 10-5 10-5 10-4 10-5 10-5 10-4 11-5 10-5 10-4 10-4 9-4 10-5 10-3 9-4 9-4 9-3 9-4 9-3 8-3 8-3 8-3 8-3 8-3 8-3 7-2 8-3 7-2 7-3 7-2 7-2 6-2 7-2 6-2 6-2 6-2 5-1 4-1 4-1 3-1M460 355l10-6 10-6 10-5 10-6 10-6 10-6 10-5 10-6 11-5 10-5 10-6 10-5 10-5 10-5 10-5 10-5 11-5 10-5 10-5 10-4 10-5 10-5 10-4 10-4 10-5 10-4 10-4 10-4 9-4 9-3 9-4 9-3 9-4 8-3 9-3 8-3 8-3 8-2 7-3 8-3 7-2 7-2 7-3 7-2 7-2 7-2 6-2 7-2 6-2 6-2 4-1 5-1 3-2 4-1M467 361l10-6 10-6 11-6 10-6 10-6 10-5 10-6 10-5 11-6 10-5 10-5 10-5 10-6 10-5 11-5 10-5 10-5 10-4 10-5 10-5 11-4 10-5 10-4 10-5 10-4 10-4 10-4 10-4 9-4 9-4 9-3 9-4 9-3 9-3 8-3 8-3 8-3 8-3 8-2 7-3 8-2 7-3 7-2 7-2 7-2 7-2 6-3 7-1 6-2 6-2 4-1 5-2 3-1 4-1M475 366l10-6 10-6 10-6 10-5 11-6 10-6 10-5 10-6 11-5 10-6 10-5 10-5 11-5 10-5 10-5 10-5 10-5 11-5 10-5 10-4 10-5 11-4 10-5 10-4 10-4 10-5 10-4 10-4 9-3 9-4 10-3 9-4 8-3 9-3 8-3 8-3 9-3 7-3 8-2 8-3 7-2 8-3 7-2 7-2 7-3 6-2 7-2 7-2 6-1 5-2 5-1 5-2 3-1 4-1M482 371l10-6 11-5 10-6 10-6 11-6 10-5 10-6 10-5 11-6 10-5 10-5 11-5 10-6 10-5 10-5 11-5 10-4 10-5 10-5 11-5 10-4 10-5 11-4 10-4 10-5 10-4 10-4 10-4 9-4 10-3 9-4 9-3 9-3 8-3 9-3 8-3 8-3 8-3 8-3 7-2 8-3 7-2 7-2 8-2 6-3 7-2 7-2 7-2 6-2 5-1 5-2 5-1 3-1 4-1M490 377l10-6 11-6 10-6 10-5 11-6 10-6 10-5 10-6 11-5 10-5 10-6 11-5 10-5 11-5 10-5 10-5 11-5 10-5 10-4 11-5 10-4 10-5 11-4 10-5 10-4 10-4 10-4 10-4 9-4 10-3 9-4 9-3 9-4 9-3 8-3 9-3 8-2 8-3 7-3 8-2 8-3 7-2 7-2 7-3 7-2 7-2 7-2 7-2 6-2 6-1 4-2 5-1 4-1 3-1M498 382l10-6 10-5 11-6 10-6 10-6 11-5 10-6 11-5 10-6 10-5 11-5 10-5 11-5 10-5 10-5 11-5 10-5 11-5 10-5 10-4 11-5 10-4 10-5 11-4 10-4 10-4 10-4 10-4 10-4 9-4 9-3 10-3 8-4 9-3 9-3 8-3 8-3 8-2 8-3 8-2 7-3 8-2 7-2 7-3 7-2 7-2 7-2 7-2 6-2 6-1 5-2 4-1 4-1 3-1M505 388l11-6 10-6 11-6 10-5 10-6 11-6 10-5 11-6 10-5 11-5 10-5 11-6 10-5 10-5 11-5 10-5 11-4 10-5 11-5 10-4 11-5 10-4 10-5 11-4 10-4 10-5 10-4 10-3 10-4 10-4 9-3 9-4 9-3 9-3 8-3 9-3 8-3 8-2 8-3 8-2 7-3 8-2 7-2 7-3 7-2 7-2 7-2 7-2 6-2 6-1 5-2 4-1 4-1 4-1M513 393l11-6 10-5 11-6 10-6 11-6 10-5 10-6 11-5 10-5 11-6 10-5 11-5 10-5 11-5 10-5 11-5 10-5 11-4 10-5 11-5 10-4 11-5 10-4 11-4 10-5 11-4 10-4 10-4 9-3 10-4 9-3 10-4 9-3 8-3 9-3 8-3 9-3 8-2 8-3 8-2 7-3 8-2 7-2 7-3 7-2 7-2 7-2 7-2 6-2 6-1 5-2 4-1 4-1 4-1M521 399l10-6 11-6 10-6 11-5 11-6 10-5 11-6 10-5 11-6 10-5 11-5 10-5 11-5 11-5 10-5 11-5 10-5 11-5 10-4 11-5 10-4 11-5 11-4 10-5 11-4 10-4 10-4 10-4 10-3 9-4 10-3 9-4 9-3 9-3 9-3 8-3 8-3 9-2 8-3 7-2 8-3 8-2 7-2 7-3 7-2 7-2 7-2 7-2 6-1 6-2 5-1 5-2 4-1 3-1M529 404l10-5 11-6 10-6 11-6 11-5 10-6 11-5 10-6 11-5 11-5 10-5 11-6 11-5 10-5 11-5 10-4 11-5 11-5 10-5 11-4 10-5 11-4 11-4 10-5 11-4 10-4 10-4 10-4 10-4 10-3 9-4 10-3 9-3 9-3 8-3 9-3 8-3 8-2 8-3 8-2 8-3 8-2 7-2 7-3 8-2 7-2 7-2 6-2 7-1 6-2 5-1 4-1 4-2 4-1M536 410l11-6 11-6 10-5 11-6 11-6 10-5 11-6 11-5 10-5 11-6 11-5 10-5 11-5 11-5 10-5 11-5 11-4 10-5 11-5 11-4 10-5 11-4 11-5 10-4 11-4 10-4 11-4 10-4 10-4 9-3 10-4 9-3 9-3 9-3 9-3 9-3 8-3 8-2 8-3 8-2 8-3 8-2 7-2 8-3 7-2 7-2 7-2 7-1 6-2 6-2 5-1 4-1 4-1 4-1M544 416l11-6 11-6 11-6 10-5 11-6 11-6 10-5 11-5 11-6 11-5 10-5 11-5 11-5 10-5 11-5 11-5 11-5 10-4 11-5 11-5 10-4 11-4 11-5 11-4 10-4 11-4 10-4 10-4 10-4 10-3 9-4 10-3 9-3 9-3 9-3 8-3 9-3 8-2 8-3 8-2 8-3 8-2 7-2 8-2 7-3 7-2 7-1 7-2 6-2 6-2 5-1 5-1 4-1 4-1M552 421l11-6 11-5 11-6 10-6 11-5 11-6 11-5 10-6 11-5 11-5 11-5 11-5 10-5 11-5 11-5 11-5 10-5 11-5 11-4 11-5 11-4 10-5 11-4 11-4 10-4 11-4 10-4 11-4 10-4 9-3 10-4 9-3 10-3 9-3 9-3 8-3 9-3 8-2 8-3 8-2 8-3 8-2 7-2 8-2 7-2 7-2 7-2 7-2 7-2 6-2 5-1 4-1 4-1 4-1M560 427l11-6 11-6 11-6 10-5 11-6 11-5 11-6 11-5 11-5 10-5 11-6 11-5 11-5 11-5 11-5 10-4 11-5 11-5 11-4 11-5 11-4 10-5 11-4 11-4 11-4 10-4 11-4 10-4 10-4 10-3 10-4 9-3 9-3 10-3 8-3 9-3 9-3 8-2 8-3 8-2 8-3 8-2 8-2 7-2 7-2 7-2 8-2 6-2 7-2 6-1 5-2 5-1 4-1 3-1M568 432l11-5 11-6 11-6 11-5 10-6 11-6 11-5 11-5 11-6 11-5 11-5 11-5 11-5 10-5 11-5 11-4 11-5 11-5 11-4 11-5 11-4 11-5 10-4 11-4 11-4 11-4 10-4 11-4 10-4 10-3 9-4 10-3 9-3 9-3 9-3 9-3 9-3 8-2 8-3 8-2 8-3 8-2 8-2 7-2 8-2 7-2 7-2 7-2 6-2 6-1 6-2 4-1 4-1 4-1M576 438l11-6 11-6 11-5 11-6 11-5 11-6 11-5 11-6 10-5 11-5 11-5 11-5 11-5 11-5 11-5 11-5 11-4 11-5 11-5 11-4 11-5 11-4 11-4 11-4 10-5 11-4 11-3 10-4 10-4 10-3 10-4 10-3 9-3 9-3 9-3 9-3 9-3 8-2 8-3 8-2 8-2 8-3 8-2 7-2 8-2 7-2 7-2 7-2 7-2 6-1 5-1 5-2 4-1 3 0M345 274l6 4 6 4 6 5 6 4 6 5 7 4 6 5 7 5 7 4 7 5 7 5 7 5 7 5 7 6 8 5 7 5 8 5 7 6 8 5 7 5 8 6 8 5 7 6 8 5 8 6 8 5 7 6 8 6 8 5 8 6 8 5 8 6M354 268l6 4 6 4 6 5 7 4 6 4 6 5 7 5 7 5 7 4 7 5 7 5 7 5 7 5 7 6 8 5 7 5 8 5 7 6 8 5 7 5 8 6 8 5 8 6 8 5 7 6 8 6 8 5 8 6 8 5 8 6 8 6 8 5M364 262l6 4 6 4 6 5 6 4 6 4 7 5 7 5 6 5 7 4 7 5 7 5 8 5 7 5 7 6 8 5 7 5 8 5 7 6 8 5 8 6 8 5 7 6 8 5 8 6 8 5 8 6 8 5 8 6 8 6 8 5 8 6 8 5M373 256l6 4 6 4 6 5 7 4 6 4 7 5 6 5 7 5 7 4 7 5 7 5 8 5 7 6 7 5 8 5 7 5 8 6 8 5 7 5 8 6 8 5 8 6 8 5 8 6 7 5 8 6 8 6 9 5 8 6 8 5 8 6 8 6M382 250l6 4 6 4 7 5 6 4 7 5 6 4 7 5 7 5 7 5 7 5 7 5 7 5 8 5 7 5 8 5 7 5 8 6 8 5 7 6 8 5 8 6 8 5 8 6 8 5 8 6 8 5 8 6 8 6 8 5 8 6 9 6 8 5M392 244l6 4 6 4 6 5 6 4 7 5 7 4 7 5 6 5 8 5 7 5 7 5 7 5 8 5 7 5 8 5 7 6 8 5 8 5 8 6 8 5 8 6 7 5 8 6 9 5 8 6 8 6 8 5 8 6 8 6 8 5 8 6 9 6M401 238l6 4 6 5 6 4 7 4 7 5 6 5 7 4 7 5 7 5 7 5 8 5 7 5 8 5 7 6 8 5 7 5 8 5 8 6 8 5 8 6 8 5 8 6 8 5 8 6 8 6 8 5 8 6 9 5 8 6 8 6 8 5 9 6M410 232l6 5 7 4 6 4 6 5 7 4 7 5 7 5 7 5 7 4 7 5 8 5 7 6 7 5 8 5 8 5 8 6 7 5 8 5 8 6 8 5 8 6 8 5 8 6 8 5 9 6 8 6 8 5 8 6 9 6 8 5 8 6 9 6M419 227l7 4 6 4 6 5 7 4 7 5 6 4 7 5 7 5 8 5 7 5 7 5 8 5 7 5 8 5 8 6 8 5 7 5 8 6 8 5 8 6 8 5 9 6 8 5 8 6 8 6 8 5 9 6 8 6 8 5 9 6 8 6 9 5M429 221l6 4 6 5 7 4 6 5 7 4 7 5 7 5 7 4 7 5 8 5 7 5 8 5 7 6 8 5 8 5 8 6 8 5 8 5 8 6 8 5 8 6 8 5 8 6 8 6 9 5 8 6 8 6 9 5 8 6 9 6 8 5 8 6M438 216l6 4 7 4 6 4 7 5 7 5 7 4 7 5 7 5 7 5 7 5 8 5 8 5 7 5 8 6 8 5 8 5 8 6 8 5 8 5 8 6 8 6 8 5 9 6 8 5 8 6 9 6 8 5 9 6 8 6 8 6 9 5 8 6M447 210l7 4 6 5 7 4 6 5 7 4 7 5 7 5 7 5 8 4 7 5 8 6 7 5 8 5 8 5 8 5 8 6 8 5 8 6 8 5 8 6 8 5 9 6 8 6 8 5 9 6 8 6 9 5 8 6 9 6 8 5 9 6 8 6M457 205l6 4 6 4 7 5 7 4 7 5 7 5 7 4 7 5 7 5 8 5 8 5 7 5 8 6 8 5 8 5 8 6 8 5 8 6 8 5 9 6 8 5 8 6 9 5 8 6 8 6 9 5 8 6 9 6 9 6 8 5 9 6 8 6M466 199l6 5 7 4 7 4 6 5 7 5 7 4 7 5 8 5 7 5 8 5 7 5 8 5 8 5 8 6 8 5 8 5 8 6 8 5 9 6 8 5 8 6 9 6 8 5 8 6 9 6 9 5 8 6 9 6 8 6 9 5 9 6 8 6M475 194l7 4 6 5 7 4 7 5 7 4 7 5 7 5 7 5 8 5 8 5 7 5 8 5 8 5 8 6 8 5 8 5 8 6 8 5 9 6 8 5 9 6 8 6 8 5 9 6 9 6 8 5 9 6 8 6 9 6 9 5 8 6 9 6M485 189l6 4 7 4 6 5 7 4 7 5 7 5 8 5 7 5 8 5 7 5 8 5 8 5 8 5 8 6 8 5 8 5 8 6 9 5 8 6 8 5 9 6 8 6 9 5 8 6 9 6 9 5 8 6 9 6 9 6 9 5 8 6 9 6M494 184l6 4 7 4 7 5 7 4 7 5 7 5 7 5 8 5 7 5 8 5 8 5 8 5 8 5 8 6 8 5 8 5 8 6 9 5 8 6 9 5 8 6 9 6 8 5 9 6 9 6 8 6 9 5 9 6 9 6 8 6 9 6 9 5M503 179l7 4 6 4 7 5 7 4 7 5 8 5 7 5 7 5 8 5 8 5 8 5 8 5 8 5 8 6 8 5 8 5 9 6 8 5 8 6 9 6 9 5 8 6 9 6 8 5 9 6 9 6 9 6 9 5 8 6 9 6 9 6 9 6M513 174l6 4 7 4 7 5 7 4 7 5 7 5 8 5 7 5 8 5 8 5 7 5 8 5 9 5 8 6 8 5 8 6 9 5 8 6 9 5 8 6 9 5 9 6 8 6 9 6 9 5 9 6 8 6 9 6 9 5 9 6 9 6 9 6M522 169l6 4 7 4 7 5 7 5 7 4 8 5 7 5 8 5 7 5 8 5 8 5 8 5 8 6 9 5 8 5 8 6 9 5 8 6 9 5 8 6 9 6 9 5 9 6 8 6 9 6 9 5 9 6 9 6 9 6 9 6 9 6 9 5M531 164l7 4 7 5 7 4 7 5 7 4 7 5 8 5 7 5 8 5 8 5 8 5 8 6 8 5 9 5 8 6 8 5 9 6 8 5 9 6 9 5 9 6 8 6 9 6 9 5 9 6 9 6 9 6 9 5 9 6 9 6 9 6 9 6M541 159l6 4 7 5 7 4 7 5 7 5 8 4 7 5 8 5 8 5 8 5 8 6 8 5 8 5 9 6 8 5 8 6 9 5 9 6 8 5 9 6 9 6 9 5 9 6 8 6 9 6 9 5 9 6 9 6 10 6 9 6 9 6 9 5M550 154l7 5 6 4 7 5 8 4 7 5 7 5 8 5 8 5 8 5 8 5 8 5 8 5 8 6 9 5 8 5 9 6 8 5 9 6 9 6 8 5 9 6 9 6 9 6 9 5 9 6 9 6 9 6 9 6 9 5 9 6 10 6 9 6M559 150l7 4 7 4 7 5 7 5 8 4 7 5 8 5 7 5 8 5 8 5 9 5 8 6 8 5 8 5 9 6 9 5 8 6 9 6 9 5 9 6 9 6 8 5 9 6 9 6 10 6 9 6 9 5 9 6 9 6 9 6 9 6 10 6M568 145l7 4 7 5 7 4 8 5 7 5 8 5 7 5 8 5 8 5 8 5 8 5 9 5 8 6 8 5 9 6 9 5 8 6 9 5 9 6 9 6 9 5 9 6 9 6 9 6 9 5 9 6 9 6 10 6 9 6 9 6 9 6 10 6M578 141l6 4 7 4 8 5 7 5 7 4 8 5 8 5 8 5 8 5 8 5 8 6 8 5 9 5 8 6 9 5 9 6 8 5 9 6 9 6 9 5 9 6 9 6 9 6 9 5 10 6 9 6 9 6 9 6 9 6 10 6 9 6 9 5M587 136l7 5 7 4 7 5 7 4 8 5 7 5 8 5 8 5 8 5 8 5 9 5 8 6 8 5 9 6 9 5 8 6 9 5 9 6 9 5 9 6 9 6 9 6 9 5 10 6 9 6 9 6 9 6 10 6 9 6 9 6 10 6 9 5M596 132l7 4 7 5 7 4 7 5 8 5 8 5 7 5 8 5 8 5 9 5 8 5 8 6 9 5 9 5 8 6 9 5 9 6 9 6 9 5 9 6 9 6 9 6 9 5 10 6 9 6 9 6 10 6 9 6 9 6 10 6 9 6 10 6M604 128l7 4 8 5 7 4 7 5 8 5 8 5 8 5 8 5 8 5 8 5 8 5 9 6 8 5 9 5 9 6 9 6 9 5 9 6 9 5 9 6 9 6 9 6 9 6 10 5 9 6 9 6 10 6 9 6 10 6 9 6 10 6 9 6M613 124l7 4 7 5 8 4 7 5 8 5 8 5 7 5 8 5 9 5 8 5 8 5 9 6 9 5 8 6 9 5 9 6 9 5 9 6 9 6 9 5 9 6 10 6 9 6 9 6 10 6 9 5 10 6 9 6 10 6 9 6 10 6 9 6M622 120l7 5 7 4 7 5 8 4 7 5 8 5 8 5 8 5 9 5 8 5 8 6 9 5 9 5 8 6 9 5 9 6 9 6 9 5 9 6 10 6 9 6 9 5 10 6 9 6 9 6 10 6 9 6 10 6 9 6 10 6 10 6 9 6M630 116l7 5 7 4 8 5 7 5 8 5 8 4 8 5 8 5 8 6 9 5 8 5 9 5 8 6 9 5 9 6 9 6 9 5 9 6 10 6 9 5 9 6 9 6 10 6 9 6 10 6 9 5 10 6 9 6 10 6 10 6 9 6 10 6M638 113l7 4 7 5 8 4 7 5 8 5 8 5 8 5 8 5 9 5 8 5 9 6 8 5 9 5 9 6 9 5 9 6 9 6 9 5 10 6 9 6 9 6 10 6 9 5 10 6 9 6 10 6 9 6 10 6 9 6 10 6 10 6 10 6M646 109l7 5 7 4 8 5 8 5 7 5 8 4 8 5 9 6 8 5 8 5 9 5 9 6 9 5 9 6 9 5 9 6 9 5 9 6 9 6 10 6 9 5 9 6 10 6 10 6 9 6 10 6 9 6 10 6 10 6 9 6 10 6 10 6M654 106l7 5 7 4 8 5 8 4 7 5 8 5 9 5 8 5 8 5 9 6 8 5 9 5 9 6 9 5 9 6 9 6 9 5 10 6 9 6 9 6 10 5 9 6 10 6 9 6 10 6 10 6 9 6 10 6 10 6 10 6 9 6 10 6M661 103l8 4 7 5 8 5 7 4 8 5 8 5 8 5 9 5 8 5 9 6 8 5 9 5 9 6 9 5 9 6 9 6 10 5 9 6 9 6 10 6 9 5 10 6 9 6 10 6 10 6 9 6 10 6 10 6 10 6 9 6 10 6 10 6M669 100l7 4 8 5 7 4 8 5 8 5 8 5 8 5 9 5 8 5 9 6 8 5 9 5 9 6 9 5 9 6 9 6 10 5 9 6 9 6 10 6 10 5 9 6 10 6 9 6 10 6 10 6 10 6 9 6 10 6 10 6 10 6 10 6M676 97l8 4 7 5 8 4 7 5 8 5 9 5 8 5 8 5 9 5 8 6 9 5 9 5 9 6 9 5 9 6 9 6 10 5 9 6 10 6 9 6 10 6 9 5 10 6 10 6 9 6 10 6 10 6 10 6 10 6 10 6 10 6 10 6M684 94l7 4 7 5 8 5 8 4 8 5 8 5 8 5 9 5 8 6 9 5 9 5 9 6 9 5 9 6 9 5 9 6 10 6 9 5 9 6 10 6 10 6 9 6 10 6 10 6 10 6 9 6 10 6 10 6 10 6 10 6 10 6 10 6M691 91l7 5 7 4 8 5 8 5 8 4 8 5 8 5 9 6 8 5 9 5 9 5 9 6 9 5 9 6 9 6 10 5 9 6 10 6 9 6 10 5 9 6 10 6 10 6 10 6 10 6 9 6 10 6 10 6 10 6 10 6 10 6 10 6M697 88l8 5 7 4 8 5 8 5 8 5 8 5 9 5 8 5 9 5 8 6 9 5 9 5 9 6 10 5 9 6 9 6 10 5 9 6 10 6 9 6 10 6 10 6 10 6 10 6 9 6 10 6 10 6 10 6 10 6 10 6 10 6 10 6M704 86l8 4 7 5 8 5 8 4 8 5 8 5 9 5 8 5 9 6 9 5 8 5 9 6 10 5 9 6 9 6 10 5 9 6 10 6 9 6 10 5 10 6 9 6 10 6 10 6 10 6 10 6 10 6 10 6 10 6 10 6 10 6 10 7M711 83l7 5 8 4 8 5 8 5 8 5 8 5 8 5 9 5 9 5 9 6 8 5 10 5 9 6 9 5 9 6 10 6 9 6 10 5 10 6 9 6 10 6 10 6 10 6 10 6 10 6 10 6 10 6 10 6 10 6 10 6 10 6 10 6M717 81l8 4 8 5 7 5 8 4 8 5 9 5 8 5 9 6 9 5 8 5 9 6 9 5 10 6 9 5 9 6 10 5 9 6 10 6 10 6 9 6 10 6 10 6 10 6 10 6 10 6 10 6 10 6 10 6 10 6 11 6 10 6 10 6M724 78l7 5 8 5 8 4 8 5 8 5 8 5 9 5 8 5 9 5 9 6 9 5 9 6 9 5 10 6 9 6 10 5 9 6 10 6 10 6 10 6 9 5 10 6 10 6 10 6 10 6 10 6 11 6 10 7 10 6 10 6 10 6 10 6M730 76l8 5 7 4 8 5 8 5 8 5 9 5 8 5 9 5 9 5 9 6 9 5 9 5 9 6 10 6 9 5 10 6 9 6 10 6 10 5 9 6 10 6 10 6 10 6 10 6 10 6 11 6 10 6 10 6 10 7 10 6 11 6 10 6M736 74l8 4 8 5 7 5 9 5 8 5 8 5 9 5 8 5 9 5 9 5 9 6 9 5 10 6 9 6 10 5 9 6 10 6 10 6 9 5 10 6 10 6 10 6 10 6 10 6 10 6 11 6 10 6 10 6 10 7 10 6 11 6 10 6M742 72l8 4 8 5 8 5 8 4 8 5 8 5 9 6 9 5 8 5 9 5 10 6 9 5 9 6 10 5 9 6 10 6 9 6 10 5 10 6 10 6 10 6 10 6 10 6 10 6 10 6 11 6 10 6 10 7 10 6 11 6 10 6 10 6M748 70l8 4 8 5 8 5 8 4 8 5 8 5 9 6 9 5 9 5 9 5 9 6 9 5 9 6 10 5 9 6 10 6 10 6 10 6 10 5 10 6 10 6 10 6 10 6 10 6 10 6 10 6 11 7 10 6 10 6 10 6 11 6 10 6M754 68l8 4 7 5 8 5 8 5 9 4 8 5 9 6 9 5 9 5 9 5 9 6 9 5 9 6 10 6 10 5 9 6 10 6 10 6 10 6 10 5 10 6 10 6 10 6 10 6 10 7 11 6 10 6 10 6 11 6 10 6 10 6 11 6M759 66l8 5 8 4 8 5 8 5 8 5 9 5 8 5 9 5 9 5 9 6 9 5 10 6 9 5 9 6 10 6 10 5 10 6 10 6 9 6 10 6 11 6 10 6 10 6 10 6 10 6 11 6 10 6 10 6 11 6 10 7 10 6 11 6M763 65l8 4 8 5 8 4 8 5 9 5 8 5 9 5 9 6 9 5 9 5 9 6 9 5 10 6 9 5 10 6 10 6 9 6 10 6 10 6 10 5 10 6 11 6 10 6 10 6 10 7 11 6 10 6 10 6 11 6 10 6 11 6 10 7M767 63l8 5 8 4 8 5 8 5 9 5 8 5 9 5 9 5 9 6 9 5 9 5 9 6 10 6 9 5 10 6 10 6 10 6 10 5 10 6 10 6 10 6 10 6 10 6 10 6 11 6 10 7 10 6 11 6 10 6 11 6 10 6 11 6M771 62l7 5 8 4 8 5 9 5 8 5 9 5 8 5 9 5 9 6 9 5 10 5 9 6 9 6 10 5 10 6 10 6 9 5 10 6 10 6 10 6 11 6 10 6 10 6 10 6 11 6 10 6 10 7 11 6 10 6 11 6 10 6 11 6M774 61l8 5 8 4 8 5 8 5 8 5 9 5 9 5 9 5 9 6 9 5 9 5 9 6 10 5 10 6 9 6 10 6 10 5 10 6 10 6 10 6 10 6 10 6 11 6 10 6 10 6 11 6 10 7 11 6 10 6 10 6 11 6 10 7M568 432l19 0M560 427l19 0 19-1M552 421l19 0 19 0 19 0M544 416l19-1 19 0 19 0 19 0M536 410l19 0 19 0 19-1 19 1 19 0M529 404l18 0 19 0 19 0 18 0 19 0 20 0M521 399l18 0 19-1 19 0 18 0 19 0 19 0 20 1M513 393l18 0 19 0 18 0 19 0 19 0 19 0 19 0 20 0M505 388l19-1 18 0 18 0 19 0 19 0 19 0 19 0 19 1 19 0M498 382l18 0 18 0 18-1 19 0 19 0 19 0 19 1 19 0 19 0 19 1M490 377l18-1 18 0 19 0 18 0 19 0 18 0 19 0 19 0 20 1 19 0 19 1M482 371l18 0 18 0 19-1 18 0 19 0 18 0 19 0 19 1 19 0 19 1 20 0 19 1M475 366l17-1 19 0 18 0 18 0 19-1 18 1 19 0 19 0 19 0 19 1 19 0 20 1 19 1M467 361l18-1 18 0 18-1 18 0 18 0 19 0 19 0 18 0 19 1 20 0 19 1 19 0 20 1 19 1M460 355l17 0 18-1 18 0 18 0 18-1 19 0 18 0 19 1 19 0 19 0 19 1 20 1 19 0 19 1 20 1M452 350l18-1 17 0 18-1 18 0 19 0 18 0 18 0 19 0 19 0 19 1 19 0 19 1 19 1 20 0 19 1 20 1M445 345l17-1 18-1 18 0 17 0 19-1 18 0 18 0 19 0 18 1 19 0 19 1 19 0 20 1 19 1 20 0 19 2 20 1M437 340l18-1 17-1 18 0 18-1 18 0 18 0 18 0 19 0 18 0 19 0 19 1 19 0 19 1 19 1 20 1 19 1 20 1 20 1M430 334l17 0 18-1 17-1 18 0 18-1 18 0 18 0 18 0 19 0 19 1 18 0 19 1 20 0 19 1 19 1 20 1 19 1 20 1 20 1M423 329l17-1 17 0 18-1 17-1 18 0 18 0 18 0 18 0 19 0 18 0 19 1 19 0 19 1 19 0 19 1 20 1 19 1 20 1 20 2 20 1M416 324l17-1 17-1 17 0 18-1 17 0 18-1 18 0 18 0 19 0 18 1 19 0 19 0 18 1 20 1 19 0 19 1 20 1 19 1 20 2 20 1 20 1M409 319l17-1 17-1 17 0 17-1 18-1 17 0 18 0 18 0 19 0 18 0 18 0 19 1 19 0 19 1 19 1 19 1 20 1 19 1 20 1 20 1 20 2 20 1M402 314l17-1 16-1 18-1 17 0 17-1 18 0 18 0 17-1 19 0 18 0 18 1 19 0 19 1 18 0 19 1 20 1 19 1 19 1 20 1 20 1 20 2 20 1 20 2M395 310l17-2 16-1 17-1 17 0 18-1 17 0 18-1 18 0 18 0 18 0 18 0 19 1 18 0 19 1 19 0 19 1 19 1 20 1 19 1 20 1 20 2 19 1 20 2 21 2M388 305l17-1 16-2 17-1 17 0 17-1 18-1 17 0 18 0 18 0 18 0 18 0 18 0 19 0 19 1 18 1 19 0 19 1 20 1 19 1 20 2 19 1 20 1 20 2 20 2 20 1M382 300l16-1 16-1 17-2 17 0 17-1 17-1 17 0 18-1 18 0 18 0 18 0 18 1 19 0 18 0 19 1 19 1 19 1 19 1 19 1 20 1 19 1 20 2 20 1 20 2 20 2 20 1M375 296l16-2 17-1 16-1 17-1 17-1 17-1 17 0 17-1 18 0 18 0 18 0 18 0 18 0 19 1 18 0 19 1 19 1 19 1 19 1 20 1 19 1 20 2 20 1 20 2 20 2 20 2 20 2M369 291l16-2 16-1 16-1 17-1 17-1 16-1 18-1 17 0 17 0 18 0 18-1 18 1 18 0 18 0 19 1 19 0 19 1 19 1 19 1 19 1 19 2 20 1 20 1 20 2 19 2 20 2 20 2 20 2M363 287l16-2 15-2 17-1 16-1 16-1 17-1 17-1 17 0 18-1 17 0 18 0 18 0 18 0 18 1 19 0 18 1 19 1 19 0 19 1 19 2 19 1 20 1 20 2 19 1 20 2 20 2 20 2 20 2 19 2M357 282l15-1 16-2 16-2 16-1 17-1 16-1 17-1 17 0 17-1 18 0 17 0 18 0 18 0 18 0 18 1 19 0 18 1 19 1 19 1 19 1 20 1 19 1 20 2 19 1 20 2 20 2 19 2 20 2 20 2 19 3M351 278l15-2 16-1 16-2 16-1 16-2 16-1 17 0 17-1 17-1 17 0 17 0 18 0 18 0 18 0 18 0 18 1 19 0 19 1 18 1 20 1 19 1 19 2 19 1 20 1 20 2 19 2 20 2 20 2 19 2 20 3 19 2M345 274l15-2 16-2 15-1 16-2 16-1 16-1 17-1 16-1 17-1 17 0 18 0 17-1 18 0 18 1 18 0 18 0 19 1 18 1 19 0 19 1 19 2 19 1 19 1 20 2 20 1 19 2 20 2 19 2 20 2 19 3 19 2 20 3M354 268l16-2 15-2 16-1 15-2 17-1 16-1 16-1 17-1 17 0 17-1 18 0 17 0 18 0 18 1 18 0 18 0 19 1 18 1 19 1 19 1 19 1 19 1 20 2 19 1 20 2 19 2 20 2 19 2 19 3 20 2 19 3 19 3M364 262l15-2 15-2 16-1 16-2 16-1 16-1 17 0 17-1 17-1 17 0 17 0 18 0 18 0 18 1 18 0 18 1 19 0 18 1 19 1 19 1 20 2 19 1 19 2 20 1 19 2 19 2 20 2 19 3 19 2 19 3 19 3 19 3M373 256l15-2 16-2 15-1 16-1 17-1 16-1 17-1 16 0 17-1 18 0 17 0 18 0 18 0 18 1 18 0 18 1 19 1 19 1 19 1 19 1 19 1 19 2 19 1 20 2 19 2 19 2 19 3 19 2 19 3 19 3 19 3 19 3M382 250l16-2 15-1 16-2 16-1 16-1 17-1 16 0 17-1 17 0 18 0 17 0 18 0 18 0 18 1 18 0 18 1 19 1 19 1 19 1 19 2 19 1 19 2 19 1 20 2 19 3 19 2 19 2 19 3 19 3 19 3 18 3 19 3M392 244l15-2 16-1 15-1 16-1 17-1 16-1 17-1 17 0 17 0 17 0 18 0 18 0 18 0 18 1 18 1 18 1 19 0 19 2 19 1 19 1 19 2 19 2 19 2 19 2 19 2 19 2 19 3 19 3 19 3 18 3 19 3 19 3M401 238l15-1 16-2 16-1 16-1 16-1 17 0 16-1 17 0 18 0 17 0 18 0 17 0 18 1 19 0 18 1 19 1 18 1 19 1 19 2 19 1 19 2 19 2 19 2 19 2 19 3 19 2 18 3 19 3 19 3 18 3 19 3 18 4M410 232l16-1 15-1 16-2 16 0 17-1 16-1 17 0 17 0 17 0 18 0 17 0 18 0 18 1 19 1 18 0 19 1 18 2 19 1 19 1 19 2 19 2 19 2 19 2 18 3 19 2 19 3 18 3 19 3 18 3 19 3 18 4 18 3M419 227l16-2 16-1 16-1 16-1 16 0 17-1 17 0 17 0 17 0 18 0 17 0 18 1 18 0 19 1 18 1 19 1 18 1 19 2 19 1 19 2 18 2 19 2 19 3 19 2 18 3 19 3 18 3 18 3 19 3 18 4 18 3 18 4M429 221l15-1 16-1 16-1 16-1 17-1 16 0 17 0 17 0 18 0 17 0 18 0 18 1 18 1 18 0 19 2 19 1 18 1 19 2 19 1 18 2 19 3 18 2 19 2 19 3 18 3 18 3 19 3 18 3 18 4 18 3 18 4 18 4M438 216l16-2 15-1 17-1 16 0 16-1 17 0 17 0 17 0 17 0 18 0 18 1 18 0 18 1 18 1 19 1 18 2 19 1 19 2 18 2 19 2 18 2 19 3 18 2 18 3 19 3 18 3 18 3 18 4 18 3 18 4 18 3 18 4M447 210l16-1 16-1 16-1 16-1 17 0 17 0 17 0 17 0 17 0 18 0 18 1 18 1 18 1 18 1 19 1 18 1 19 2 18 2 18 2 19 2 18 3 18 2 19 3 18 3 18 3 18 3 18 4 18 3 18 4 18 3 18 4 18 4M457 205l15-1 16-1 16-1 17-1 16 0 17 0 17 0 17 0 18 0 18 1 18 0 18 1 18 1 18 2 18 1 19 2 18 1 18 2 19 3 18 2 18 2 18 3 18 3 18 3 18 3 18 4 18 3 18 4 18 3 18 4 18 4 17 4M466 199l16-1 16-1 16 0 16-1 17 0 17 0 17 0 17 0 18 1 17 0 18 1 18 1 18 1 19 1 18 2 18 2 18 2 18 2 19 2 18 3 18 2 18 3 18 3 18 3 18 4 17 3 18 4 18 3 18 4 18 4 17 4 18 4M475 194l16-1 16-1 16 0 17-1 16 0 17 0 17 0 18 1 17 0 18 1 18 1 18 1 18 1 18 1 18 2 18 2 18 2 18 2 18 3 18 3 18 2 18 3 18 3 18 4 18 3 17 4 18 3 18 4 17 4 18 4 18 4 17 4M485 189l15-1 16-1 17 0 16 0 17-1 17 0 17 1 17 0 18 1 18 0 18 1 17 2 18 1 18 2 18 1 18 3 18 2 18 2 18 3 18 3 18 2 17 3 18 4 18 3 17 4 18 3 18 4 17 4 18 4 17 4 18 4 17 4M494 184l16-1 16-1 16 0 17 0 16 0 17 0 18 0 17 1 18 0 17 1 18 1 18 2 18 1 17 2 18 2 18 2 18 2 18 3 17 3 18 3 18 3 17 3 18 3 18 4 17 3 18 4 17 4 18 4 17 4 17 4 18 4 17 4M503 179l16-1 16-1 17 0 16 0 17 0 17 0 17 1 18 0 17 1 18 1 17 1 18 2 18 1 17 2 18 2 18 3 17 2 18 3 17 3 18 3 18 3 17 3 18 4 17 3 18 4 17 4 18 3 17 4 17 5 18 4 17 4 17 4M513 174l15-1 17 0 16-1 17 0 17 0 17 1 17 0 17 1 17 1 18 1 17 1 18 2 17 2 18 2 18 2 17 3 18 2 17 3 18 3 17 3 17 3 18 4 17 3 18 4 17 4 17 3 18 4 17 4 17 5 17 4 17 4 17 5M522 169l16-1 16 0 16 0 17 0 17 0 17 0 17 1 17 1 18 1 17 1 17 2 18 1 17 2 18 3 17 2 17 3 18 2 17 3 17 3 18 3 17 4 17 3 18 4 17 4 17 3 18 4 17 4 17 5 17 4 17 4 16 5 16 5M531 164l16-1 16 0 17 0 17 0 16 0 17 1 17 1 18 1 17 1 17 1 17 2 17 2 18 2 17 2 17 3 17 3 18 2 17 3 17 4 17 3 18 3 17 4 17 4 17 3 17 4 18 4 17 4 17 5 17 4 16 5 16 4 15 5M541 159l16 0 16-1 16 0 17 1 17 0 17 1 17 1 16 1 18 1 17 2 17 2 17 2 17 2 17 2 17 3 17 3 18 3 17 3 17 3 17 3 17 4 17 4 17 3 17 4 17 4 18 4 17 5 16 4 17 4 15 5 15 5 15 5M550 154l16 0 16 0 17 0 16 0 17 1 17 1 16 1 17 1 17 2 17 1 17 2 17 2 17 3 17 2 17 3 17 3 17 3 17 3 17 4 17 3 17 4 17 3 17 4 17 4 17 4 17 4 17 5 16 4 16 5 15 5 14 5 14 6M559 150l16-1 16 0 17 1 16 0 17 1 17 1 16 1 17 1 17 2 16 2 17 2 17 2 17 3 17 2 17 3 17 3 17 3 17 4 17 3 16 4 17 3 17 4 17 4 17 4 17 4 17 5 16 4 15 5 15 5 15 5 14 5M568 145l16 0 17 0 16 0 16 1 17 1 16 1 17 1 16 2 17 2 17 2 16 2 17 2 17 3 17 3 16 3 17 3 17 3 17 3 17 4 17 4 16 3 17 4 17 4 17 4 16 5 17 4 15 5 15 5 14 5 14 5M578 141l16 0 16 0 16 0 16 1 16 1 17 1 16 2 17 2 16 1 17 3 16 2 17 2 17 3 16 3 17 3 17 3 16 4 17 3 17 4 16 3 17 4 17 4 17 4 16 4 16 5 16 5 14 5 15 5 14 5M587 136l16 0 16 1 16 0 16 1 16 2 16 1 16 1 17 2 16 2 17 3 16 2 17 3 16 2 17 3 16 4 17 3 16 3 17 4 17 3 16 4 17 4 17 4 16 4 16 5 15 5 15 5 14 5 15 5M596 132l15 0 16 1 16 1 16 1 16 1 16 1 17 2 16 2 16 2 16 3 17 2 16 3 16 3 17 3 16 3 17 3 16 4 17 4 16 3 17 4 17 4 16 4 16 5 15 4 15 5 14 5 14 6M604 128l16 0 16 1 16 1 15 1 16 2 16 1 16 2 17 2 16 2 16 3 16 2 16 3 17 3 16 3 16 4 17 3 16 4 17 4 16 3 17 4 16 4 16 5 15 4 14 5 15 5 14 5M613 124l16 1 15 0 16 1 16 2 15 1 16 2 16 2 16 2 16 3 16 2 16 3 16 3 17 3 16 3 16 4 17 3 16 4 16 3 17 4 16 4 16 5 15 4 14 5 14 5 14 5M622 120l15 1 15 1 16 1 16 1 15 2 16 2 16 2 16 2 15 3 16 3 16 2 17 3 16 4 16 3 16 3 16 4 16 4 17 4 16 4 15 4 15 4 15 5 14 5 14 5M630 116l15 1 15 1 16 2 15 1 16 2 16 2 15 2 16 3 16 2 16 3 15 3 16 3 16 3 17 4 16 3 16 4 16 4 16 4 15 4 15 4 15 5 14 5 14 5M638 113l15 1 15 1 16 2 15 1 15 2 16 2 15 2 16 3 16 3 16 3 15 3 16 3 16 3 16 4 16 3 16 4 16 4 16 4 14 5 15 4 14 5 13 5M646 109l15 2 15 1 15 1 15 2 16 2 15 2 16 3 15 2 16 3 15 3 16 3 16 3 16 4 16 3 15 4 16 4 16 4 14 5 15 4 13 5 14 5M654 106l15 1 15 2 15 1 15 2 15 2 15 3 16 2 15 3 16 3 15 3 16 3 15 3 16 4 16 3 16 4 15 4 14 5 15 4 13 5 14 5M661 103l15 1 15 2 15 2 15 2 15 2 15 2 15 3 16 3 15 2 16 4 15 3 16 3 15 4 16 4 15 4 15 4 14 5 13 4 14 5M669 100l15 1 14 2 15 2 15 2 15 2 15 3 15 2 15 3 16 3 15 3 16 4 15 3 15 4 15 4 15 4 14 5 13 4 14 5M676 97l15 1 14 2 15 2 15 2 15 3 15 2 15 3 15 3 15 3 15 3 16 4 15 3 15 4 14 4 14 5 14 5 13 4M684 94l14 2 14 1 15 3 15 2 14 2 15 3 15 3 15 3 15 3 16 3 15 4 15 4 14 4 13 4 14 5 13 5M691 91l14 2 14 2 15 2 14 2 15 3 15 3 15 3 15 3 15 3 15 3 14 4 14 4 14 5 13 4 13 5M697 88l15 2 14 2 14 3 15 2 14 3 15 3 15 3 15 3 15 3 14 4 14 4 13 4 13 5 14 4M704 86l14 2 15 2 14 2 14 3 15 3 14 2 15 4 15 3 14 3 14 4 13 4 13 5 13 4M711 83l14 2 14 3 14 2 15 3 14 2 14 3 15 4 14 3 14 4 13 4 13 4 12 5M717 81l14 2 14 2 14 3 15 2 14 3 14 3 14 4 14 4 13 4 12 4 13 4M724 78l14 3 14 2 14 3 14 2 14 3 14 4 13 3 13 4 12 5 13 4M730 76l14 2 14 3 14 3 13 3 14 3 13 3 13 4 12 4 13 5M736 74l14 2 14 3 13 3 14 3 13 3 12 4 12 4 13 4M742 72l14 2 13 3 14 3 12 3 13 4 12 4 12 4M748 70l14 2 13 3 12 3 12 4 12 4 12 4M754 68l13 3 12 3 12 3 12 4 11 4M759 66l12 3 12 3 11 4 12 4M763 65l12 3 11 3 12 4M767 63l11 4 12 3M771 62l11 4M354 268l-3 10M372 281l-3 10M385 289l1 6 5-1M455 339l-1 5 8 0M492 365l-2 6 10 0M508 376l-1 4 9 2M524 387l-2 7 9-1M563 415l-1 7 9-1M571 421l-1 6 9 0M382 275l-3 10M414 298l0 6 7-2M457 328l-2 11M465 333l-3 11M472 338l-1 5 9 0M511 365l-2 5 9 1M574 410l-3 11M582 415l-3 12M385 264l-1 5 7 0M438 301l-2 6 9-1M552 381l-2 12M577 398l-3 12M388 254l1 5 5-1M407 267l-1 5 8 0M441 291l-1 4 8 1M455 301l-1 5 8 0M462 306l-2 11M485 321l-2 6 9-1M547 365l-2 11M579 387l-2 11M458 290l0 5 7 0M495 315l-1 7 8-1M502 321l-2 11M549 353l-2 12M574 370l-1 7 9-1M606 393l-2 4 10 1M401 238l-2 4 8 0M505 310l-3 11M512 315l-1 6 9-1M528 326l0 5 8 0M600 376l0 6 9-1M609 381l-1 6 9 0M617 387l0 6 8 0M423 241l-4 10M477 278l-2 11M492 289l-1 3 8 2M499 294l-2 11M538 320l0 5 8 1M562 337l-2 11M595 359l-3 11M611 370l-1 5 9 1M619 376l-2 5 11 1M452 249l-3 10M502 283l-3 11M548 315l0 6 8-1M581 337l-1 5 9 0M597 348l-3 5 11 1M622 365l-3 11M638 376l-2 11M435 225l-1 5 7 0M468 248l-3 10M551 304l-3 11M599 337l-2 11M658 377l-1 6 9-1M666 382l-2 11M464 233l-3 10M471 238l-1 4 8 0M561 299l-2 10M569 304l-2 11M601 326l-2 5 11 1M618 337l-2 11M635 349l-3 11M668 372l-2 10M454 214l-3 10M473 228l0 4 7 0M494 242l-2 10M571 293l-2 11M587 304l-2 6 10 0M654 349l-2 11M662 355l-2 11M457 205l-3 9M497 232l-1 4 8 0M534 256l-2 6 9-1M549 267l-2 10M565 277l-2 6 10 0M614 310l-1 5 9 1M492 217l-2 10M513 231l-2 10M559 261l0 6 8 0M567 267l-1 4 9 1M599 288l-2 11M608 294l-2 11M624 305l-2 11M633 311l-2 10M675 339l-2 11M509 216l-1 6 8-1M516 221l-3 10M523 226l-2 10M553 246l-2 10M569 256l-2 11M609 283l-1 11M651 311l-2 11M660 317l0 5 9 1M677 328l-2 11M720 357l-1 5 10 1M491 193l-3 10M511 206l-2 6 9-1M518 211l-2 10M533 221l-3 10M555 236l-2 4 10 1M579 251l-2 11M620 278l-2 4 10 2M662 306l-2 6 10 0M696 329l-2 11M714 341l-2 10M723 346l-3 11M535 211l-2 10M550 221l-2 10M573 236l-2 10M581 241l-3 5 11 0M597 252l-1 3 9 2M664 296l-2 10M698 319l0 4 9 1M707 324l-2 11M503 179l-3 9M552 211l-2 10M599 241l-1 7 9-1M615 252l-1 4 9 1M632 263l0 5 8 0M666 285l-1 7 9-1M513 174l-3 9M519 178l-3 9M533 187l-1 4 8 0M547 196l-2 10M667 275l-1 5 10 0M711 303l-2 11M528 173l-2 9M535 177l-2 10M542 182l-1 6 8-1M564 196l-2 10M602 221l0 4 8 1M610 226l-2 5 10 1M695 281l0 5 9 1M730 304l-2 11M757 322l-1 6 10 0M775 334l-2 10M531 164l-1 5 8-1M566 186l-1 5 8 0M581 196l-2 6 9-1M596 206l-2 10M653 243l0 6 9 0M688 265l-2 11M697 271l-2 10M759 311l-1 6 10 0M777 323l0 5 9 1M786 329l-2 3 11 3M547 163l-2 10M554 168l-2 9M561 172l-1 4 8 1M769 307l-1 10M788 319l-2 5 11 1M550 154l-2 6 9-1M570 168l-2 9M585 177l-1 5 8 0M592 182l-1 5 9 0M648 218l-1 10M691 245l-2 10M753 285l-3 4 12 2M780 303l-1 10M789 308l-1 11M610 182l-2 10M617 187l-1 10M633 197l-1 10M666 218l-1 10M710 246l-2 10M719 252l-2 10M736 263l1 6 8 0M791 298l-2 4 11 2M589 158l0 5 8 0M676 214l-1 10M685 220l-2 4 11 1M783 282l-1 10M613 163l-1 10M661 194l-1 4 9 1M748 249l-1 10M794 278l-2 10M803 284l-1 10M821 296l0 4 10 2M840 308l-1 4 10 1M601 145l-2 9M662 184l0 4 9 1M679 195l-1 9M740 233l-1 6 10 0M749 239l-1 10M804 274l-1 10M813 280l0 5 10 1M841 298l0 4 10 2M596 132l-2 9M632 155l-2 9M655 170l1 5 7 0M680 185l-1 10M714 207l-1 10M814 270l-1 10M852 294l-1 10M681 176l-1 9M689 181l0 4 9 2M698 187l-1 9M706 192l0 9M733 209l-1 4 10 1M742 214l-1 6 10 0M760 225l-1 10M620 128l-1 4 8 1M627 133l-1 8M707 183l-1 3 10 2M751 210l0 6 9 0M760 216l0 9M787 233l0 10M797 239l-1 5 10 1M636 129l-1 5 8 0M658 143l0 9M699 168l-1 9M707 174l0 9M716 179l0 4 9 1M733 190l0 9M742 195l1 4 8 2M769 212l0 10M788 224l-1 9M825 247l0 10M742 186l0 9M760 198l0 9M769 203l0 9M834 244l1 4 9 2M638 113l0 3 7 1M652 122l0 4 8 0M675 136l0 8M683 141l0 8M716 161l0 9M751 183l1 5 8 0M797 211l0 9M806 217l0 9M825 229l-2 4 11 1M882 264l0 6 9 0M891 270l1 9M676 128l0 4 7 1M724 158l0 5 9 0M751 174l0 9M760 180l0 8M769 185l0 9M833 225l1 9M843 231l1 9M862 243l0 5 10 1M881 255l1 5 9 1M920 279l1 5 9 1M661 111l-1 7M684 124l-1 5 8 0M691 129l1 4 7 1M716 144l0 9M750 165l1 9M777 182l1 9M805 199l0 9M814 205l-1 6 10 0M823 211l1 8M900 258l1 9M676 112l0 8M707 131l2 4 6 1M715 136l1 8M776 173l0 4 9 2M822 202l1 9M938 273l1 9M684 109l0 3 7 1M699 118l1 2 7 3M723 133l1 8M732 138l0 3 8 2M740 143l1 3 8 3M749 149l0 8M757 154l1 8M766 159l1 6 8 0M793 176l1 9M821 193l1 9M859 216l1 9M888 234l1 9M898 240l1 5 9 1M676 97l1 3 7 1M684 101l0 4 7 1M691 106l-1 3 9 1M714 120l1 4 8 1M739 135l1 8M774 156l0 5 9 1M792 167l0 4 9 2M820 184l0 5 9 1M867 213l2 6 8 0M946 261l1 9M956 267l-1 4 11 2M698 103l0 2 8 3M755 138l1 3 8 2M773 148l1 4 8 2M782 154l0 4 9 1M800 165l1 8M809 170l1 9M875 211l2 8M885 217l2 8M895 223l1 8M905 229l1 8M713 105l1 7M729 114l0 4 8 1M737 119l0 4 8 1M745 124l2 4 7 2M762 135l2 8M780 145l0 6 9 0M798 156l2 9M873 202l0 3 10 3M903 220l2 9M913 226l0 3 9 3M922 232l1 4 9 2M932 238l1 5 9 1M942 244l2 9M778 138l2 7M787 143l1 6 8-1M833 171l1 3 9 2M843 176l2 9M891 206l2 3 8 3M940 236l2 8M950 242l2 5 8 1M960 248l1 3 9 3M980 260l2 3 8 3M712 90l-2 4 9 1M777 130l1 3 8 2M786 135l1 8M803 146l2 8M813 151l2 8M831 163l2 8M860 180l2 8M869 186l2 8M889 197l2 5 7 1M948 233l2 9M742 102l1 7M758 112l2 7M775 122l2 8M811 143l0 4 9 2M838 160l3 8M896 195l0 4 10 2M926 213l2 8M936 219l2 5 8 1M956 231l2 8M782 120l2 7M817 141l3 8M827 147l1 3 8 2M893 187l3 8M963 229l3 8M983 241l1 4 10 2M994 247l0 5 10 1M1004 253l2 8M739 88l1 7M771 107l1 5 8 0M797 122l2 8M833 144l3 8M852 156l3 5 7 0M960 220l2 5 9 1M991 239l1 3 9 3M745 85l2 7M769 100l2 7M786 110l2 7M850 148l-1 2 10 3M907 182l3 8M937 200l3 8M988 230l3 9M1019 249l0 4 10 2M776 98l1 3 7 2M819 123l3 8M856 146l3 7M866 151l1 6 8 0M875 157l3 8M895 169l3 7M944 198l3 8M954 204l3 8M995 228l3 9M835 127l2 7M853 138l3 8M891 161l2 3 8 2M921 178l3 8M971 208l4 8M823 114l1 2 8 3M850 130l3 8M859 136l4 7M878 147l4 8M898 159l2 3 8 3M908 165l0 3 10 2M948 188l3 8M958 194l3 8M968 200l2 5 8 1M762 72l2 7M777 82l2 4 6 1M811 102l1 4 8 1M820 107l1 3 8 2M875 140l2 3 8 2M885 145l1 4 8 2M974 198l2 5 8 2M775 75l-1 4 9 1M783 80l2 7M791 85l3 6M799 90l3 6M825 105l4 7M862 127l3 7M990 203l5 8M1011 215l4 8M1052 240l5 7M763 65l4 6M771 69l4 6M779 74l1 3 7 1M830 104l4 6M839 109l1 4 8 1M848 114l4 7M885 136l5 8M895 142l1 3 9 3M914 154l4 3 6 3M924 160l5 7M954 177l6 8M995 202l6 7M1016 214l4 4 6 2M775 68l4 6M899 141l6 7M959 176l3 4 7 2M969 182l6 7M1000 200l3 3 7 4M1010 207l1 3 9 3M1062 237l6 8M803 81l5 6M855 112l6 6M963 175l1 3 9 3M983 187l6 7M1004 199l2 4 8 2M806 80l5 6M850 106l5 6M916 145l2 4 8 1M966 174l7 7M976 180l7 7M1007 198l7 7M1018 204l2 4 8 3M1049 223l7 7" stroke="#000" stroke-width="1" fill="none" shape-rendering="crispEdges" transform="translate(0.5 0.5)"/>
</g>
<g clip-path="url(#cl)">
<path d="M345 274 L350.9 278.2 L356.8 282.4 L362.8 286.6 L368.7 290.8 L374.6 295 L380.5 299.2 L386.5 303.4 L392.4 307.6 L398.3 311.8 L404.2 316.1 L410.2 320.3 L416.1 324.5 L422 328.7 L427.9 332.9 L433.8 337.1 L439.8 341.3 L445.7 345.5 L451.6 349.7 L457.5 353.9 L463.5 358.1 L469.4 362.3 L475.3 366.5 L481.2 370.7 L487.2 374.9 L493.1 379.1 L499 383.3 L504.9 387.5 L510.8 391.7 L516.8 395.9 L522.7 400.2 L528.6 404.4 L534.5 408.6 L540.5 412.8 L546.4 417 L552.3 421.2 L558.2 425.4 L564.2 429.6 L570.1 433.8 L576 438 L576 438 L576.1 445.1 L576.1 452.1 L576.2 459.2 L576.2 466.3 L576.3 473.3 L576.3 480.4 L576.4 487.4 L576.4 494.5 L576.5 501.6 L576.5 508.6 L576.6 515.7 L576.6 522.8 L576.7 529.8 L576.7 536.9 L576.8 544 L576.8 551 L576.9 558.1 L576.9 565.2 L577 572.2 L577 579.3 L577.1 586.3 L577.1 593.4 L577.2 600.5 L577.2 607.5 L577.3 614.6 L577.3 621.7 L577.4 628.7 L577.4 635.8 L577.5 642.9 L577.5 649.9 L577.6 657 L577.6 664.1 L577.7 671.1 L577.7 678.2 L577.8 685.2 L577.8 692.3 L577.9 699.4 L577.9 706.4 L578 713.5 L578 713.5 L572.3 709 L566.6 704.4 L561 699.9 L555.3 695.4 L549.6 690.9 L543.9 686.3 L538.2 681.8 L532.6 677.3 L526.9 672.8 L521.2 668.2 L515.5 663.7 L509.8 659.2 L504.2 654.7 L498.5 650.1 L492.8 645.6 L487.1 641.1 L481.4 636.6 L475.8 632 L470.1 627.5 L464.4 623 L458.7 618.5 L453.1 613.9 L447.4 609.4 L441.7 604.9 L436 600.4 L430.3 595.8 L424.7 591.3 L419 586.8 L413.3 582.3 L407.6 577.7 L401.9 573.2 L396.3 568.7 L390.6 564.2 L384.9 559.6 L379.2 555.1 L373.5 550.6 L367.9 546.1 L362.2 541.5 L356.5 537 L356.5 537 L356.2 530.3 L355.9 523.5 L355.6 516.8 L355.3 510 L355 503.3 L354.7 496.5 L354.4 489.8 L354.1 483.1 L353.8 476.3 L353.6 469.6 L353.3 462.8 L353 456.1 L352.7 449.3 L352.4 442.6 L352.1 435.8 L351.8 429.1 L351.5 422.4 L351.2 415.6 L350.9 408.9 L350.6 402.1 L350.3 395.4 L350 388.6 L349.7 381.9 L349.4 375.2 L349.1 368.4 L348.8 361.7 L348.5 354.9 L348.2 348.2 L347.9 341.4 L347.7 334.7 L347.4 327.9 L347.1 321.2 L346.8 314.5 L346.5 307.7 L346.2 301 L345.9 294.2 L345.6 287.5 L345.3 280.7 L345 274Z" fill="#bdbdbd"/>
<path d="M345 264l7 1 7 1 8 1 7 1 8 0 7 1 7 1 5 1 5 0 4 1 3 0 4 1 3 0 4 1 5 0 5 1 5 0 5 1 6 1 5 0 5 1 5 0 6 1 5 1 5 0 5 1 3 0 4 1 3 0 4 1 5 0 6 1 7 1 6 1 7 0 6 1 5 1 6 0 6 1 7 1 7 1 7 1M345 274l7 1 8 1 7 1 8 1 7 0 7 1 7 1 6 1 4 0 4 1 4 0 3 1 4 0 4 1 4 0 5 1 5 0 6 1 5 1 5 0 5 1 5 0 6 1 6 1 5 0 4 1 4 0 3 1 4 0 3 1 5 0 6 1 7 1 7 1 6 0 6 1 5 1 6 0 6 1 7 1 7 1 7 1M345 284l8 1 7 1 8 1 7 1 7 0 8 1 7 1 5 1 5 0 3 1 4 0 3 1 4 0 4 1 4 0 5 1 6 0 5 1 5 1 5 0 5 1 6 0 5 1 6 1 5 0 4 1 4 0 3 1 4 0 4 1 4 0 6 1 7 1 7 1 6 0 6 1 6 1 5 0 6 1 7 1 7 1 7 1M346 294l7 1 8 1 7 1 7 1 8 1 7 0 7 1 5 1 5 0 4 1 3 0 4 1 3 0 4 1 4 0 5 1 6 0 5 1 5 1 5 0 6 1 5 1 5 0 6 1 5 0 4 1 4 0 3 1 4 0 4 1 5 0 5 1 7 1 7 1 6 0 6 1 6 1 5 0 6 1 7 1 7 1 7 1M346 304l8 1 7 1 7 1 8 1 7 1 8 0 6 1 6 1 4 0 4 1 4 0 3 1 4 0 3 1 5 0 5 1 5 0 6 1 5 1 5 0 5 1 5 1 6 0 5 1 5 0 4 1 4 0 4 1 3 0 4 1 5 0 6 1 6 1 7 1 6 0 6 1 6 1 6 0 5 1 7 1 7 1 7 1M347 314l7 1 7 1 8 1 7 1 8 1 7 1 7 0 5 1 5 1 3 0 4 0 3 1 4 0 4 1 4 0 5 1 5 0 6 1 5 1 5 0 5 1 5 1 6 0 5 1 5 0 5 1 3 0 4 1 3 0 4 1 5 0 6 1 7 1 6 1 6 0 6 1 6 1 6 0 6 1 6 1 7 1 7 1M347 324l8 1 7 1 7 1 8 1 7 1 7 1 7 0 6 1 4 1 4 0 3 0 4 1 3 0 4 1 4 0 5 1 6 0 5 1 5 1 5 0 5 1 6 1 5 0 6 1 5 1 4 0 4 0 3 1 4 0 3 1 5 0 6 1 7 1 6 1 7 0 5 1 6 1 6 0 6 1 6 1 7 1 7 1M348 334l7 1 7 1 8 1 7 1 7 1 8 1 6 0 6 1 4 1 4 0 4 0 3 1 4 0 3 1 5 0 5 1 5 1 5 0 6 1 5 0 5 1 5 1 5 0 6 1 5 1 4 0 4 0 3 1 4 0 4 1 4 0 6 1 7 1 7 1 6 0 6 1 5 1 6 0 6 1 6 1 7 1 7 1M348 344l7 1 8 1 7 1 7 1 8 1 7 1 7 0 5 1 5 1 3 0 4 1 3 0 4 0 4 1 4 0 5 1 5 1 6 0 5 1 5 0 5 1 5 1 6 0 5 1 5 1 4 0 4 1 3 0 4 0 4 1 4 0 6 1 7 1 7 1 6 0 6 1 5 1 6 0 6 1 6 1 7 1 8 1M349 354l7 1 7 1 7 1 8 1 7 1 7 1 7 0 6 1 4 1 4 0 3 1 4 0 3 0 4 1 4 0 5 1 6 1 5 0 5 1 5 0 5 1 5 1 6 0 5 1 5 1 5 0 3 1 4 0 3 0 4 1 5 0 5 1 7 1 7 1 6 0 6 1 5 1 6 0 6 1 6 1 7 1 8 1M349 364l7 1 8 1 7 1 7 1 7 1 8 1 6 1 6 0 4 1 4 0 4 1 3 0 3 0 4 1 5 0 5 1 5 1 5 0 5 1 5 0 5 1 6 1 5 0 6 1 5 1 4 0 3 1 4 0 3 0 4 1 5 0 6 1 6 1 7 1 6 0 6 1 6 1 5 1 6 0 6 1 7 1 8 1M349 375l8 0 7 1 7 1 8 1 7 1 7 1 7 1 5 0 5 1 3 0 4 1 3 0 4 0 4 1 4 0 5 1 5 1 5 0 6 1 5 1 5 0 5 1 5 0 6 1 5 1 4 0 4 1 3 0 4 0 3 1 5 0 6 1 6 1 7 1 6 0 6 1 6 1 5 1 6 0 7 1 6 1 8 1M350 385l7 0 7 1 8 1 7 1 7 1 7 1 7 1 6 0 4 1 4 0 3 1 4 0 3 0 4 1 4 0 5 1 5 1 6 0 5 1 5 1 5 0 5 1 5 0 6 1 5 1 4 0 4 1 3 0 4 0 4 1 4 0 6 1 7 1 6 1 6 0 6 1 6 1 5 1 6 0 7 1 7 1 7 1M350 395l8 1 7 0 7 1 7 1 8 1 7 1 6 1 6 0 4 1 4 0 4 1 3 0 3 1 4 0 4 0 5 1 6 1 5 0 5 1 5 1 5 0 5 1 6 0 5 1 5 1 4 0 4 1 3 0 4 0 4 1 4 0 6 1 7 1 6 1 7 1 5 0 6 1 6 1 5 0 7 1 7 1 7 1M351 405l7 1 7 0 7 1 8 1 7 1 7 1 7 1 5 0 5 1 3 0 4 1 3 0 4 1 4 0 4 1 5 0 5 1 5 0 5 1 5 1 5 0 6 1 5 0 5 1 5 1 5 0 3 1 4 0 3 0 4 1 4 0 6 1 7 1 7 1 6 1 5 0 6 1 6 1 6 0 6 1 7 1 7 1M351 415l7 1 8 0 7 1 7 1 7 1 8 1 6 1 6 0 4 1 4 0 3 1 4 0 3 1 4 0 4 1 5 0 5 1 6 0 5 1 5 1 5 0 5 1 5 1 6 0 5 1 4 0 3 1 4 0 3 1 4 0 5 1 5 0 7 1 7 1 6 1 6 0 5 1 6 1 6 0 6 1 7 1 7 1M352 425l7 1 7 1 7 0 8 1 7 1 7 1 6 1 6 0 4 1 4 0 4 1 3 0 3 1 4 0 4 1 5 0 6 1 5 0 5 1 5 1 5 0 5 1 5 1 6 0 5 1 4 0 4 1 3 0 4 1 3 0 5 1 6 0 6 1 7 1 6 1 6 0 5 1 6 1 6 0 6 1 7 1 7 1M352 435l7 1 7 1 8 0 7 1 7 1 7 1 7 1 5 0 5 1 3 0 4 1 3 0 4 1 3 0 5 1 5 0 5 1 5 0 5 1 5 1 5 0 5 1 6 1 5 0 5 1 4 0 4 1 3 0 4 1 3 0 5 1 6 0 6 1 7 1 6 1 6 0 5 1 6 1 6 0 6 1 7 1 7 1M352 445l8 1 7 1 7 0 7 1 7 1 8 1 6 1 6 1 4 0 4 0 3 1 4 0 3 1 4 0 4 1 5 0 5 1 5 1 5 0 5 1 5 0 5 1 6 1 5 0 5 1 4 0 4 1 3 0 4 1 4 0 4 1 6 0 7 1 6 1 6 1 6 0 6 1 5 1 6 0 6 1 7 1 7 1M353 455l7 1 7 1 7 1 8 0 7 1 7 1 7 1 5 1 4 0 4 1 4 0 3 0 3 1 4 0 4 1 5 0 5 1 6 1 5 0 5 1 5 0 5 1 5 1 6 0 4 1 5 0 3 1 4 0 3 1 4 0 4 1 6 0 7 1 6 1 6 1 6 0 6 1 5 1 6 0 6 1 7 1 7 1M353 465l8 1 7 1 7 1 7 0 7 1 7 1 7 1 5 1 5 0 3 1 4 0 3 0 4 1 3 0 5 1 4 0 6 1 5 1 5 0 5 1 5 0 5 1 5 1 6 0 5 1 4 0 3 1 4 0 3 1 4 0 5 1 5 0 7 1 6 1 7 1 5 0 6 1 5 1 6 0 6 1 7 1 7 1M354 475l7 1 7 1 7 1 7 0 8 1 7 1 6 1 6 1 4 0 4 1 3 0 4 0 3 1 4 0 4 1 5 0 5 1 5 1 5 0 5 1 5 0 5 1 6 1 5 0 5 1 4 0 4 1 3 0 3 1 4 0 5 1 5 0 7 1 7 1 6 1 5 0 6 1 5 1 6 0 7 1 6 1 7 1M354 485l7 1 8 1 7 1 7 1 7 0 7 1 7 1 5 1 4 0 4 1 4 0 3 0 3 1 4 0 4 1 5 0 5 1 5 1 6 0 4 1 5 0 5 1 6 1 5 0 5 1 4 0 4 1 3 0 4 1 3 0 5 1 6 0 6 1 7 1 6 1 5 0 6 1 6 1 5 0 7 1 6 1 8 1M355 495l7 1 7 1 7 1 7 1 7 0 7 1 7 1 5 1 5 0 3 1 4 0 3 0 4 1 3 0 4 1 5 0 6 1 5 1 5 0 5 1 5 0 5 1 5 1 5 0 5 1 4 0 4 1 3 0 4 1 4 0 4 1 6 0 6 1 7 1 6 1 6 0 5 1 6 1 5 0 7 1 6 1 8 1M355 505l7 1 7 1 7 1 8 1 7 0 7 1 6 1 6 1 4 0 4 1 3 0 3 1 4 0 4 0 4 1 5 0 5 1 5 1 5 0 5 1 5 0 5 1 5 1 6 0 5 1 4 0 3 1 4 0 3 1 4 0 4 1 6 0 7 1 6 1 6 1 6 0 5 1 6 1 6 0 6 1 7 1 7 1M356 515l7 1 7 1 7 1 7 1 7 1 7 0 7 1 5 1 4 0 4 1 3 0 4 1 3 0 4 0 4 1 5 1 5 0 5 1 5 0 5 1 5 1 5 0 6 1 5 0 5 1 4 1 3 0 4 0 3 1 4 0 4 1 6 0 7 1 6 1 6 1 6 0 5 1 6 1 6 0 6 1 7 1 7 1M356 525l7 1 7 1 7 1 7 1 8 1 7 0 6 1 5 1 5 0 3 1 4 0 3 1 3 0 4 0 4 1 5 1 5 0 6 1 5 0 4 1 5 1 5 0 6 1 5 0 5 1 4 1 4 0 3 0 3 1 4 0 5 1 5 0 7 1 6 1 6 1 6 0 5 1 6 1 6 0 6 1 7 1 7 1M356 535l7 1 8 1 7 1 7 1 7 1 7 0 6 1 6 1 4 0 4 1 3 0 3 1 4 0 3 0 5 1 4 1 6 0 5 1 5 0 5 1 5 1 5 0 5 1 5 0 5 1 4 1 4 0 3 0 4 1 3 0 5 1 5 0 7 1 6 1 6 1 6 0 6 1 5 1 6 0 6 1 7 1 7 1M357 545l7 1 7 1 7 1 7 1 7 1 7 1 7 0 5 1 4 0 4 1 3 0 4 1 3 0 4 1 4 0 5 1 5 0 5 1 5 0 5 1 5 1 5 0 5 1 6 1 4 0 5 1 3 0 3 0 4 1 4 0 4 1 6 0 6 1 7 1 6 1 5 0 6 1 5 1 6 0 6 1 7 1 7 1M357 555l7 1 7 1 7 1 8 1 7 1 7 1 6 0 5 1 5 0 3 1 4 0 3 1 3 0 4 1 4 0 5 1 5 0 5 1 5 0 5 1 5 1 5 0 5 1 6 1 5 0 4 1 3 0 4 0 3 1 4 0 4 1 6 0 6 1 7 1 6 1 5 0 6 1 5 1 6 0 6 1 7 1 7 1M358 566l7 0 7 1 7 1 7 1 7 1 7 1 6 0 6 1 4 1 4 0 3 0 3 1 4 0 3 1 5 0 4 1 6 0 5 1 5 1 4 0 5 1 5 0 6 1 5 1 5 0 4 1 3 0 4 0 3 1 4 0 4 1 6 1 6 0 7 1 6 1 6 0 5 1 5 1 6 0 6 1 7 1 7 1M358 576l7 0 7 1 7 1 7 1 7 1 7 1 7 0 5 1 4 1 4 0 3 0 4 1 3 0 4 1 4 0 5 1 5 0 5 1 5 1 5 0 5 1 5 0 5 1 5 1 5 0 4 1 4 0 3 0 3 1 4 0 5 1 5 1 7 0 6 1 6 1 6 0 5 1 6 1 5 0 6 1 7 1 7 1M359 586l7 0 7 1 7 1 7 1 7 1 7 1 6 0 5 1 5 1 3 0 4 0 3 1 3 0 4 1 4 0 5 1 5 0 5 1 5 1 5 0 5 1 5 0 5 1 5 1 5 0 4 1 4 0 3 1 4 0 3 0 5 1 5 1 7 0 6 1 6 1 6 0 5 1 6 1 5 0 7 1 6 1 7 1M359 596l7 1 7 0 7 1 7 1 7 1 7 1 6 0 6 1 4 1 4 0 3 0 3 1 4 0 3 1 4 0 5 1 5 0 5 1 5 1 5 0 5 1 5 0 5 1 6 1 4 0 5 1 3 0 3 1 4 0 3 0 5 1 5 1 7 0 6 1 6 1 6 1 5 0 6 1 6 1 6 0 6 1 7 1M360 606l6 1 7 0 7 1 8 1 7 1 6 1 7 1 5 0 4 1 4 0 3 1 4 0 3 0 4 1 4 0 5 1 5 0 5 1 5 1 4 0 5 1 5 0 6 1 5 1 5 0 4 1 3 0 4 1 3 0 4 0 4 1 6 1 6 0 7 1 5 1 6 1 5 0 6 1 6 1 6 0 6 1 7 1M360 616l7 1 7 0 7 1 7 1 7 1 7 1 6 1 5 0 5 1 3 0 4 1 3 0 3 0 4 1 4 0 5 1 5 0 5 1 5 1 5 0 5 1 5 0 5 1 5 1 5 0 4 1 3 0 4 1 3 0 4 0 4 1 6 1 6 0 7 1 6 1 5 1 6 0 5 1 6 1 6 0 6 1 7 1M360 626l7 1 7 1 7 0 7 1 7 1 7 1 7 1 5 0 4 1 4 0 3 1 3 0 4 0 3 1 4 0 5 1 5 1 5 0 5 1 5 0 5 1 5 0 5 1 5 1 5 0 4 1 4 0 3 1 3 0 4 0 4 1 6 1 6 0 7 1 6 1 5 1 6 0 5 1 6 1 6 0 7 1 7 1M361 636l7 1 7 1 7 0 7 1 7 1 7 1 6 1 5 0 4 1 4 0 3 1 4 0 3 0 4 1 4 0 4 1 5 1 6 0 5 1 4 0 5 1 5 0 5 1 6 1 4 0 4 1 4 0 3 1 4 0 3 0 5 1 5 1 7 0 6 1 6 1 5 1 6 0 5 1 6 1 6 0 7 1 7 1M361 646l7 1 7 1 7 0 7 1 7 1 7 1 6 1 6 0 4 1 3 0 4 1 3 0 3 0 4 1 4 0 5 1 5 1 5 0 5 1 5 0 4 1 5 1 6 0 5 1 5 0 4 1 3 0 3 1 4 0 3 0 5 1 5 1 7 0 6 1 6 1 6 1 5 0 5 1 6 1 6 0 7 1 7 1M362 656l7 1 7 1 6 0 7 1 7 1 7 1 7 1 5 0 4 1 4 0 3 1 3 0 4 1 3 0 4 0 5 1 5 1 5 0 5 1 5 0 5 1 5 1 5 0 5 1 5 0 4 1 3 0 4 1 3 0 4 1 4 0 6 1 6 0 6 1 6 1 6 1 5 0 5 1 6 1 6 0 7 1 7 1M362 666l7 1 7 1 7 1 7 0 7 1 7 1 6 1 5 0 4 1 4 0 3 1 4 0 3 1 3 0 5 0 4 1 5 1 5 0 5 1 5 0 5 1 5 1 5 0 5 1 5 0 4 1 4 0 3 1 3 0 4 1 4 0 6 1 6 0 6 1 6 1 6 1 5 0 6 1 5 1 6 0 7 1 7 1M363 676l6 1 7 1 7 1 7 0 7 1 7 1 6 1 6 0 4 1 3 0 4 1 3 0 3 1 4 0 4 1 5 0 5 1 5 0 5 1 4 0 5 1 5 1 5 0 5 1 5 0 4 1 4 0 3 1 3 0 4 1 4 0 6 1 6 1 7 0 5 1 6 1 5 0 6 1 5 1 6 0 7 1 7 1M363 686l7 1 7 1 7 1 7 0 7 1 6 1 7 1 5 1 4 0 4 0 3 1 3 0 3 1 4 0 4 1 5 0 5 1 5 0 5 1 5 0 4 1 5 1 5 0 6 1 4 0 4 1 4 0 3 1 3 0 4 1 4 0 6 1 6 1 7 0 6 1 5 1 5 0 6 1 5 1 6 0 7 1 7 1M363 696l7 1 7 1 7 1 7 1 7 0 7 1 6 1 5 1 4 0 4 0 3 1 4 0 3 1 3 0 4 1 5 0 5 1 5 0 5 1 5 0 5 1 5 1 5 0 5 1 5 0 4 1 3 0 3 1 4 0 3 1 5 0 5 1 7 1 6 0 6 1 5 1 6 0 5 1 6 1 6 0 6 1 7 1M345 264l0 10 0 10 1 10 0 10 1 10 0 10 1 10 0 10 1 10 0 10 0 11 1 10 0 10 1 10 0 10 1 10 0 10 0 10 1 10 0 10 1 10 0 10 1 10 0 10 1 10 0 10 0 10 1 10 0 10 1 11 0 10 1 10 0 10 1 10 0 10 0 10 1 10 0 10 1 10 0 10 1 10 0 10 0 10M352 265l0 10 1 10 0 10 1 10 0 10 1 10 0 10 0 10 1 10 0 10 1 10 0 10 1 11 0 10 0 10 1 10 0 10 1 10 0 10 1 10 0 10 0 10 1 10 0 10 1 10 0 10 0 10 1 10 0 10 1 10 0 10 1 10 0 11 0 10 1 10 0 10 1 10 0 10 1 10 0 10 0 10 1 10 0 10M359 266l1 10 0 10 1 10 0 10 0 10 1 10 0 10 1 10 0 10 1 10 0 10 0 10 1 10 0 10 1 10 0 11 0 10 1 10 0 10 1 10 0 10 1 10 0 10 0 10 1 10 0 10 1 10 0 10 0 10 1 10 0 10 1 10 0 10 0 10 1 10 0 11 1 10 0 10 1 10 0 10 0 10 1 10 0 10M367 267l0 10 1 10 0 10 0 10 1 10 0 10 1 10 0 10 0 10 1 10 0 10 1 10 0 10 0 10 1 10 0 10 1 10 0 10 0 11 1 10 0 10 1 10 0 10 0 10 1 10 0 10 1 10 0 10 0 10 1 10 0 10 1 10 0 10 0 10 1 10 0 10 1 10 0 10 0 10 1 11 0 10 1 10 0 10M374 268l1 10 0 10 0 10 1 10 0 10 1 10 0 10 0 10 1 10 0 10 1 10 0 10 0 10 1 10 0 10 1 10 0 10 0 10 1 10 0 10 0 10 1 11 0 10 1 10 0 10 0 10 1 10 0 10 1 10 0 10 0 10 1 10 0 10 1 10 0 10 0 10 1 10 0 10 0 10 1 10 0 10 1 10 0 11M382 268l0 10 0 10 1 11 0 10 1 10 0 10 0 10 1 10 0 10 0 10 1 10 0 10 1 10 0 10 0 10 1 10 0 10 0 10 1 10 0 10 1 10 0 10 0 10 1 10 0 11 1 10 0 10 0 10 1 10 0 10 0 10 1 10 0 10 1 10 0 10 0 10 1 10 0 10 0 10 1 10 0 10 1 10 0 10M389 269l0 10 1 10 0 10 1 10 0 11 0 10 1 10 0 10 0 10 1 10 0 10 0 10 1 10 0 10 1 10 0 10 0 10 1 10 0 10 0 10 1 10 0 10 0 10 1 10 0 10 1 10 0 10 0 11 1 10 0 10 0 10 1 10 0 10 0 10 1 10 0 10 1 10 0 10 0 10 1 10 0 10 0 10 1 10M396 270l0 10 1 10 0 10 0 10 1 10 0 10 0 10 1 10 0 10 0 11 1 10 0 10 0 10 1 10 0 10 0 10 1 10 0 10 1 10 0 10 0 10 1 10 0 10 0 10 1 10 0 10 0 10 1 10 0 10 0 10 1 10 0 10 0 10 1 11 0 10 1 10 0 10 0 10 1 10 0 10 0 10 1 10 0 10M401 271l1 10 0 10 0 10 1 10 0 10 1 10 0 10 0 10 1 10 0 10 0 10 1 10 0 10 0 10 1 10 0 10 0 10 1 11 0 10 0 10 1 10 0 10 0 10 1 10 0 10 0 10 1 10 0 10 0 10 1 10 0 10 0 10 1 10 0 10 0 10 1 10 0 10 1 10 0 10 0 10 1 10 0 11 0 10M406 271l0 10 1 10 0 10 0 10 1 11 0 10 0 10 1 10 0 10 0 10 1 10 0 10 0 10 1 10 0 10 0 10 1 10 0 10 0 10 1 10 0 10 0 10 1 10 0 10 0 10 1 10 0 10 0 10 1 10 0 11 0 10 1 10 0 10 0 10 1 10 0 10 0 10 1 10 0 10 0 10 1 10 0 10 0 10M410 272l0 10 0 10 1 10 0 10 0 10 1 10 0 10 0 10 1 10 0 10 0 10 1 10 0 10 0 10 1 10 0 10 0 10 1 10 0 11 0 10 1 10 0 10 0 10 1 10 0 10 0 10 1 10 0 10 0 10 1 10 0 10 0 10 1 10 0 10 0 10 1 10 0 10 0 10 1 10 0 10 0 10 1 10 0 10M413 272l1 10 0 10 0 10 1 10 0 10 0 10 1 10 0 11 0 10 1 10 0 10 0 10 1 10 0 10 0 10 1 10 0 10 0 10 1 10 0 10 0 10 1 10 0 10 0 10 0 10 1 10 0 10 0 10 1 10 0 10 0 10 1 10 0 10 0 11 1 10 0 10 0 10 1 10 0 10 0 10 1 10 0 10 0 10M417 273l0 10 0 10 1 10 0 10 0 10 1 10 0 10 0 10 1 10 0 10 0 10 1 10 0 10 0 10 1 10 0 10 0 10 1 10 0 10 0 10 1 10 0 10 0 10 0 11 1 10 0 10 0 10 1 10 0 10 0 10 1 10 0 10 0 10 1 10 0 10 0 10 1 10 0 10 0 10 1 10 0 10 0 10 1 10M420 273l1 10 0 10 0 10 1 10 0 10 0 10 1 10 0 10 0 10 0 10 1 10 0 10 0 11 1 10 0 10 0 10 1 10 0 10 0 10 1 10 0 10 0 10 1 10 0 10 0 10 0 10 1 10 0 10 0 10 1 10 0 10 0 10 1 10 0 10 0 10 1 10 0 10 0 10 1 11 0 10 0 10 0 10 1 10M424 274l1 10 0 10 0 10 0 10 1 10 0 10 0 10 1 10 0 10 0 10 1 10 0 10 0 10 1 10 0 10 0 10 0 10 1 10 0 10 0 10 1 10 0 10 0 10 1 10 0 10 0 10 0 10 1 11 0 10 0 10 1 10 0 10 0 10 1 10 0 10 0 10 1 10 0 10 0 10 0 10 1 10 0 10 0 10M429 274l0 10 0 10 0 10 1 10 0 10 0 10 1 10 0 10 0 10 1 10 0 10 0 10 0 10 1 11 0 10 0 10 1 10 0 10 0 10 1 10 0 10 0 10 0 10 1 10 0 10 0 10 1 10 0 10 0 10 1 10 0 10 0 10 0 10 1 10 0 10 0 10 1 10 0 10 0 10 1 10 0 11 0 10 0 10M434 275l0 10 0 10 0 10 1 10 0 10 0 10 1 10 0 10 0 10 1 10 0 10 0 10 0 10 1 10 0 10 0 10 1 10 0 10 0 10 0 10 1 10 0 10 0 10 1 10 0 11 0 10 0 10 1 10 0 10 0 10 1 10 0 10 0 10 1 10 0 10 0 10 0 10 1 10 0 10 0 10 1 10 0 10 0 10M439 275l0 10 1 10 0 10 0 10 0 10 1 10 0 11 0 10 1 10 0 10 0 10 0 10 1 10 0 10 0 10 1 10 0 10 0 10 0 10 1 10 0 10 0 10 1 10 0 10 0 10 0 10 1 10 0 10 0 10 1 10 0 10 0 10 0 10 1 10 0 10 0 11 0 10 1 10 0 10 0 10 1 10 0 10 0 10M444 276l1 10 0 10 0 10 1 10 0 10 0 10 0 10 1 10 0 10 0 10 0 10 1 10 0 10 0 10 1 10 0 10 0 10 0 11 1 10 0 10 0 10 0 10 1 10 0 10 0 10 1 10 0 10 0 10 0 10 1 10 0 10 0 10 0 10 1 10 0 10 0 10 1 10 0 10 0 10 0 10 1 10 0 10 0 10M450 277l0 10 0 10 0 10 1 10 0 10 0 10 1 10 0 10 0 10 0 10 1 10 0 10 0 10 0 10 1 10 0 10 0 10 0 10 1 10 0 10 0 10 1 10 0 10 0 10 0 10 1 10 0 10 0 10 0 10 1 11 0 10 0 10 0 10 1 10 0 10 0 10 1 10 0 10 0 10 0 10 1 10 0 10 0 10M455 277l0 10 0 10 0 10 1 10 0 10 0 10 1 10 0 10 0 10 0 10 1 11 0 10 0 10 0 10 1 10 0 10 0 10 0 10 1 10 0 10 0 10 0 10 1 10 0 10 0 10 0 10 1 10 0 10 0 10 0 10 1 10 0 10 0 10 0 10 1 10 0 10 0 10 1 10 0 10 0 10 0 10 1 10 0 10M460 278l0 10 0 10 1 10 0 10 0 10 0 10 1 10 0 10 0 10 0 10 1 10 0 10 0 10 0 10 1 10 0 10 0 10 0 10 1 10 0 10 0 10 0 10 1 10 0 10 0 11 0 10 1 10 0 10 0 10 0 10 1 10 0 10 0 10 0 10 1 10 0 10 0 10 0 10 1 10 0 10 0 10 0 10 1 10M465 278l0 10 1 10 0 11 0 10 0 10 1 10 0 10 0 10 0 10 1 10 0 10 0 10 0 10 1 10 0 10 0 10 0 10 0 10 1 10 0 10 0 10 0 10 1 10 0 10 0 10 0 10 1 10 0 10 0 10 0 10 1 10 0 10 0 10 0 10 1 10 0 10 0 10 0 11 1 10 0 10 0 10 0 10 1 10M471 279l0 10 0 10 0 10 1 10 0 10 0 10 0 10 1 10 0 10 0 10 0 10 0 10 1 10 0 10 0 11 0 10 1 10 0 10 0 10 0 10 1 10 0 10 0 10 0 10 1 10 0 10 0 10 0 10 0 10 1 10 0 10 0 10 0 10 1 10 0 10 0 10 0 10 1 10 0 10 0 10 0 10 0 10 1 10M476 280l1 10 0 10 0 10 0 10 0 10 1 10 0 10 0 10 0 10 1 10 0 10 0 10 0 10 0 10 1 10 0 10 0 10 0 10 1 10 0 10 0 10 0 10 0 10 1 10 0 10 0 10 0 10 1 11 0 10 0 10 0 10 0 10 1 10 0 10 0 10 0 10 1 10 0 10 0 10 0 10 0 10 1 10 0 10M481 280l1 10 0 10 0 10 0 10 0 10 1 11 0 10 0 10 0 10 1 10 0 10 0 10 0 10 0 10 1 10 0 10 0 10 0 10 0 10 1 10 0 10 0 10 0 10 1 10 0 10 0 10 0 10 0 10 1 10 0 10 0 10 0 10 0 10 1 10 0 10 0 10 0 10 1 10 0 10 0 10 0 10 0 10 1 10M486 281l0 10 0 10 0 10 0 10 1 10 0 10 0 10 0 10 1 10 0 10 0 10 0 10 0 10 1 10 0 10 0 10 0 10 0 10 1 10 0 10 0 10 0 10 0 10 1 10 0 11 0 10 0 10 1 10 0 10 0 10 0 10 0 10 1 10 0 10 0 10 0 10 0 10 1 10 0 10 0 10 0 10 0 10 1 10M489 281l1 10 0 10 0 10 0 10 0 10 1 10 0 10 0 11 0 10 0 10 1 10 0 10 0 10 0 10 0 10 1 10 0 10 0 10 0 10 0 10 1 10 0 10 0 10 0 10 0 10 1 10 0 10 0 10 0 10 0 10 1 10 0 10 0 10 0 10 0 10 1 10 0 10 0 10 0 10 1 10 0 10 0 10 0 10M493 282l0 10 0 10 0 10 1 10 0 10 0 10 0 10 0 10 1 10 0 10 0 10 0 10 0 10 1 10 0 10 0 10 0 10 0 10 1 10 0 10 0 10 0 10 0 10 1 10 0 10 0 10 0 10 0 10 1 10 0 10 0 10 0 11 0 10 1 10 0 10 0 10 0 10 0 10 1 10 0 10 0 10 0 10 0 10M496 282l1 10 0 10 0 10 0 10 0 10 1 10 0 10 0 10 0 10 0 10 1 10 0 10 0 10 0 10 0 11 1 10 0 10 0 10 0 10 0 10 0 10 1 10 0 10 0 10 0 10 0 10 1 10 0 10 0 10 0 10 0 10 1 10 0 10 0 10 0 10 0 10 1 10 0 10 0 10 0 10 0 10 0 10 1 10M500 283l0 10 1 10 0 10 0 10 0 10 0 10 1 10 0 10 0 10 0 10 0 10 1 10 0 10 0 10 0 10 0 10 0 10 1 10 0 10 0 10 0 10 0 10 1 10 0 10 0 10 0 10 0 10 1 10 0 10 0 10 0 10 0 10 0 10 1 10 0 10 0 10 0 10 0 10 1 11 0 10 0 10 0 10 0 10M505 283l0 10 0 10 1 10 0 10 0 10 0 10 0 10 0 10 1 10 0 10 0 10 0 10 0 10 0 10 1 11 0 10 0 10 0 10 0 10 1 10 0 10 0 10 0 10 0 10 0 10 1 10 0 10 0 10 0 10 0 10 1 10 0 10 0 10 0 10 0 10 0 10 1 10 0 10 0 10 0 10 0 10 0 10 1 10M511 284l0 10 0 10 0 10 1 10 0 10 0 10 0 10 0 10 0 10 1 10 0 10 0 10 0 10 0 10 0 10 1 10 0 10 0 10 0 10 0 10 0 10 1 10 0 10 0 10 0 10 0 10 0 10 1 10 0 10 0 11 0 10 0 10 0 10 1 10 0 10 0 10 0 10 0 10 1 10 0 10 0 10 0 10 0 10M518 285l0 10 0 10 0 10 0 10 1 10 0 10 0 10 0 10 0 10 0 10 0 10 1 10 0 10 0 10 0 10 0 10 0 10 1 10 0 10 0 10 0 10 0 10 0 10 1 10 0 10 0 10 0 10 0 10 0 10 0 10 1 10 0 10 0 10 0 10 0 10 0 10 1 10 0 10 0 10 0 10 0 11 0 10 1 10M524 286l1 10 0 10 0 10 0 10 0 10 0 10 1 10 0 10 0 10 0 10 0 10 0 10 0 10 1 10 0 10 0 10 0 10 0 10 0 10 0 10 1 10 0 10 0 10 0 10 0 10 0 10 0 10 1 10 0 10 0 10 0 10 0 10 0 10 1 10 0 10 0 10 0 10 0 10 0 10 0 10 1 10 0 10 0 10M531 286l0 10 0 10 0 10 0 10 0 10 1 10 0 10 0 10 0 10 0 10 0 10 0 10 1 11 0 10 0 10 0 10 0 10 0 10 0 10 1 10 0 10 0 10 0 10 0 10 0 10 0 10 0 10 1 10 0 10 0 10 0 10 0 10 0 10 0 10 1 10 0 10 0 10 0 10 0 10 0 10 0 10 1 10 0 10M537 287l0 10 0 10 0 10 0 10 0 10 0 10 1 10 0 10 0 10 0 10 0 10 0 10 0 10 0 10 1 10 0 10 0 10 0 10 0 10 0 10 0 10 0 10 1 10 0 10 0 10 0 10 0 10 0 10 0 10 1 10 0 10 0 10 0 11 0 10 0 10 0 10 0 10 1 10 0 10 0 10 0 10 0 10 0 10M542 288l0 10 1 10 0 10 0 10 0 10 0 10 0 10 0 10 0 10 1 10 0 10 0 10 0 10 0 10 0 10 0 10 0 10 1 10 0 10 0 10 0 10 0 10 0 10 0 10 0 10 0 10 1 10 0 10 0 10 0 10 0 10 0 10 0 10 0 10 1 10 0 10 0 10 0 10 0 10 0 10 0 10 0 10 1 10M548 288l0 10 0 10 0 10 1 10 0 10 0 10 0 10 0 10 0 10 0 11 0 10 0 10 1 10 0 10 0 10 0 10 0 10 0 10 0 10 0 10 0 10 1 10 0 10 0 10 0 10 0 10 0 10 0 10 0 10 0 10 1 10 0 10 0 10 0 10 0 10 0 10 0 10 0 10 0 10 1 10 0 10 0 10 0 10M554 289l0 10 0 10 0 10 0 10 1 10 0 10 0 10 0 10 0 10 0 10 0 10 0 10 0 10 1 10 0 10 0 10 0 10 0 10 0 10 0 10 0 10 0 10 0 10 1 10 0 10 0 10 0 10 0 10 0 10 0 10 0 10 0 10 1 11 0 10 0 10 0 10 0 10 0 10 0 10 0 10 0 10 0 10 1 10M561 290l0 10 0 10 0 10 0 10 0 10 0 10 0 10 0 10 0 10 0 10 1 10 0 10 0 10 0 10 0 10 0 10 0 10 0 10 0 10 0 10 1 10 0 10 0 10 0 10 0 10 0 10 0 10 0 10 0 10 0 10 0 10 1 10 0 10 0 10 0 10 0 10 0 10 0 10 0 10 0 10 0 10 0 10 1 10M568 291l0 10 0 10 0 10 0 10 0 10 0 10 0 10 0 10 0 10 0 10 0 10 1 10 0 10 0 10 0 10 0 10 0 10 0 10 0 10 0 10 0 10 0 10 0 10 1 10 0 10 0 10 0 10 0 10 0 10 0 10 0 10 0 10 0 10 0 10 0 10 1 10 0 10 0 10 0 10 0 10 0 10 0 10 0 10M575 292l0 10 0 10 0 10 0 10 0 10 0 10 0 10 1 10 0 10 0 10 0 10 0 10 0 10 0 10 0 10 0 10 0 10 0 10 0 10 0 10 0 10 1 10 0 10 0 10 0 10 0 10 0 10 0 10 0 10 0 10 0 10 0 10 0 10 0 10 0 10 1 10 0 10 0 10 0 10 0 10 0 10 0 10 0 10M363 686l7 11M363 676l7 11 7 11M362 666l7 11 8 11 7 11M362 656l7 11 7 11 8 11 7 11M361 646l8 11 7 11 7 11 8 10 7 11M361 636l7 11 8 11 7 11 7 10 8 11 7 11M360 626l8 11 7 11 7 10 8 11 7 11 7 11 7 11M360 616l7 11 8 11 7 10 7 11 8 11 7 11 7 11 5 11M360 606l7 11 7 11 8 10 7 11 7 11 8 11 6 11 6 11 4 10M359 596l7 11 8 10 7 11 8 11 7 11 7 11 7 11 6 10 4 11 4 10M359 586l7 11 7 10 8 11 7 11 8 11 7 11 7 11 5 10 5 11 4 10 3 11M358 576l8 10 7 11 7 11 8 11 7 11 8 11 6 11 6 10 4 11 4 10 4 11 4 10M358 566l7 10 8 11 7 11 8 11 7 11 7 11 7 11 6 10 4 11 4 10 4 11 3 10 4 11M357 555l8 11 7 11 8 11 7 11 8 11 7 11 7 11 5 10 5 11 4 10 3 11 4 10 3 11 4 10M357 545l7 11 8 11 7 11 8 11 7 11 7 11 7 11 6 10 4 11 4 10 4 11 4 10 3 11 4 10 4 11M356 535l8 11 7 11 8 11 7 11 8 11 7 11 7 11 5 10 5 11 4 10 4 11 3 10 4 11 4 10 4 11 5 10M356 525l7 11 8 11 7 11 8 11 7 11 8 11 6 10 6 11 5 11 4 10 3 11 4 10 4 11 3 10 5 11 5 10 5 11M356 515l7 11 8 11 7 11 8 11 7 11 7 11 7 10 6 11 4 11 4 10 4 11 4 10 3 10 4 11 5 10 5 11 5 11 5 10M355 505l8 11 7 11 8 11 7 11 8 11 7 11 7 10 5 11 5 11 4 10 4 11 3 10 4 10 4 11 4 10 5 11 6 11 5 10 5 11M355 495l7 11 8 11 7 11 8 11 7 11 8 11 6 10 6 11 5 11 4 10 3 11 4 10 4 10 4 11 4 10 5 11 5 11 6 10 5 11 5 10M354 485l8 11 7 11 8 11 7 11 8 11 7 11 7 10 6 11 4 11 4 10 4 10 4 11 3 10 4 11 5 10 5 11 5 11 5 10 6 11 5 10 5 11M354 475l7 11 8 11 7 11 8 11 8 11 7 10 7 11 5 11 5 11 4 10 4 10 3 11 4 10 4 11 4 10 5 11 6 11 5 10 5 11 5 10 5 11 6 11M353 465l8 11 8 11 7 11 8 11 7 11 8 10 6 11 6 11 5 10 4 11 3 10 4 11 4 10 4 11 4 10 5 11 5 11 6 10 5 11 5 10 5 11 5 11 6 10M353 455l8 11 7 11 8 11 7 11 8 10 7 11 7 11 6 11 4 10 4 11 4 10 4 11 3 10 4 11 5 10 5 11 5 11 6 10 5 11 5 10 5 11 5 11 5 10 6 11M352 445l8 11 8 11 7 11 8 11 7 10 8 11 7 11 5 11 5 10 4 11 4 10 3 11 4 10 4 11 4 10 6 11 5 10 5 11 6 11 5 10 5 11 5 11 5 10 6 11 5 10M352 435l8 11 7 11 8 11 7 10 8 11 7 11 7 11 6 11 5 10 4 11 3 10 4 11 4 10 4 11 4 10 5 11 6 10 5 11 5 11 5 10 5 11 6 11 5 10 5 11 5 10 5 11M352 425l7 11 8 11 7 11 8 10 8 11 7 11 7 11 6 11 4 10 4 11 4 10 4 11 3 10 4 11 5 10 5 11 5 10 6 11 5 11 5 10 5 11 5 11 6 10 5 11 5 10 4 11 4 10M351 415l8 11 7 11 8 10 8 11 7 11 8 11 7 11 5 11 5 10 4 11 4 10 3 11 4 10 4 11 5 10 5 11 5 10 5 11 6 11 5 10 5 11 5 10 6 11 5 11 5 10 4 11 4 10 3 11M351 405l7 11 8 11 8 10 7 11 8 11 7 11 7 11 6 11 5 10 4 11 3 10 4 11 4 10 4 11 4 10 5 11 6 10 5 11 5 11 5 10 6 11 5 10 5 11 6 11 5 10 4 11 4 10 3 11 4 10M350 395l8 11 8 10 7 11 8 11 7 11 8 11 7 11 6 11 4 10 4 11 4 10 4 11 3 10 4 10 5 11 5 11 6 10 5 11 5 11 5 10 5 11 6 10 5 11 6 11 5 10 4 11 4 10 3 11 3 10 4 11M350 385l8 11 7 10 8 11 8 11 7 11 8 11 7 11 5 11 5 10 4 11 4 10 3 11 4 10 4 10 5 11 5 11 5 10 6 11 5 11 5 10 5 11 5 10 6 11 5 11 5 10 5 11 3 10 4 11 3 10 4 11 5 10M349 375l8 10 8 11 7 11 8 11 8 11 7 11 7 11 6 11 5 10 4 11 4 10 3 10 4 11 4 10 4 11 5 11 6 10 5 11 6 11 5 10 5 11 5 10 6 11 5 11 5 10 4 11 4 10 4 11 3 10 4 11 4 10 6 11M349 364l8 11 7 11 8 11 8 11 7 11 8 11 7 11 6 11 4 10 4 11 4 10 4 10 4 11 4 10 4 11 5 11 6 10 5 11 5 10 5 11 6 11 5 10 5 11 6 11 5 10 4 11 4 10 3 11 4 10 4 11 4 10 6 11 7 11M349 354l7 11 8 11 8 11 7 11 8 11 8 11 6 11 6 10 5 11 4 11 4 10 4 10 3 11 4 10 5 11 5 11 5 10 6 11 5 10 5 11 5 11 6 10 5 11 6 11 5 10 4 11 4 10 3 11 4 10 4 11 4 10 6 11 6 11 7 10M348 344l8 11 8 11 7 11 8 11 8 11 7 11 7 11 6 10 5 11 4 10 4 11 3 10 4 11 4 10 4 11 6 10 5 11 6 11 5 10 5 11 5 11 5 10 6 11 5 11 5 10 5 11 3 10 4 11 4 10 3 10 5 11 6 11 6 11 7 10 6 11M348 334l7 11 8 11 8 11 8 11 7 11 8 11 7 11 6 10 4 11 4 10 4 11 4 10 4 11 4 10 4 11 5 10 6 11 5 11 6 10 5 11 5 11 5 10 6 11 5 11 5 10 5 11 3 10 4 11 3 10 4 10 5 11 6 11 6 10 7 11 6 11 5 11M347 324l8 11 8 11 7 11 8 11 8 11 7 11 7 11 6 10 5 11 4 10 4 11 4 10 3 11 4 10 5 11 5 10 6 11 5 11 5 10 5 11 6 11 5 10 5 11 6 11 5 10 4 11 4 10 4 11 3 10 4 10 5 11 5 11 7 10 6 11 6 11 6 11 6 10M347 314l8 11 7 11 8 11 8 11 7 11 8 11 7 11 6 10 5 11 4 10 4 11 3 10 4 11 4 10 5 11 5 10 5 11 6 11 5 10 5 11 5 11 6 10 5 11 6 11 5 10 4 11 4 10 3 11 4 10 4 10 4 11 6 11 7 10 6 11 6 11 6 11 5 10 6 11M346 304l8 11 8 11 8 11 7 11 8 11 8 11 7 11 6 10 4 11 4 10 4 11 4 10 4 11 4 10 4 11 5 10 6 11 5 11 6 10 5 11 5 11 5 10 6 11 6 11 5 10 4 11 4 10 3 11 4 10 4 10 4 11 6 11 7 10 6 11 6 11 6 11 5 10 6 11 6 11M346 294l8 11 7 11 8 11 8 11 8 11 7 11 7 11 6 10 5 11 4 10 4 11 4 10 3 11 4 10 5 11 5 10 6 11 5 11 6 10 5 11 5 10 5 11 6 11 5 10 5 11 5 11 3 10 4 10 4 11 3 10 5 11 6 11 6 10 7 11 6 11 6 11 5 10 6 11 5 11 7 10M345 284l8 11 8 11 8 11 8 11 7 11 8 11 7 10 6 11 5 11 4 10 4 11 3 10 4 11 4 10 5 11 5 10 5 11 6 11 5 10 5 11 6 10 5 11 6 11 5 10 5 11 5 11 3 10 4 10 3 11 4 10 5 11 6 11 6 10 7 11 6 11 6 11 5 10 6 11 5 11 6 10 7 11M345 274l8 11 8 11 7 11 8 11 8 11 8 11 7 10 6 11 4 11 4 10 4 11 4 10 4 11 4 10 4 11 6 10 5 11 6 11 5 10 5 11 5 10 6 11 5 11 6 10 5 11 4 11 4 10 4 10 3 11 4 10 5 11 5 11 7 10 7 11 6 11 5 11 6 10 5 11 6 11 6 10 7 11 7 11M345 264l7 11 8 11 8 11 8 11 8 11 7 11 7 10 6 11 5 11 4 10 4 11 4 10 3 11 5 10 4 11 5 10 6 11 5 11 6 10 5 11 5 10 5 11 6 11 6 10 5 11 4 11 4 10 3 10 4 11 4 10 5 11 5 11 7 10 7 11 6 11 5 11 6 10 5 11 6 11 6 10 7 11 7 11M352 265l8 11 8 11 7 11 8 11 8 11 7 10 6 11 5 11 4 10 4 11 3 10 4 10 4 11 5 11 5 10 6 11 5 10 5 11 6 11 5 10 5 11 6 11 5 10 6 11 4 11 4 10 3 10 4 11 4 10 4 11 6 11 7 10 6 11 6 11 6 11 6 10 5 11 6 11 6 10 7 11 7 11M359 266l8 11 8 11 8 11 8 10 7 11 6 11 4 11 4 10 4 11 4 10 4 10 4 11 4 10 6 11 5 11 6 10 5 11 5 11 6 10 5 11 6 11 5 10 5 11 5 10 3 11 4 10 4 11 4 10 4 11 6 11 7 10 6 11 6 11 6 11 6 10 5 11 6 11 6 10 7 11 7 11M367 267l8 11 7 10 8 11 7 11 6 11 5 11 4 10 4 11 4 10 3 10 5 11 4 10 5 11 6 11 6 10 5 11 5 11 5 10 6 11 5 11 6 10 5 11 4 10 4 11 4 10 3 11 4 10 5 11 6 10 6 11 7 11 6 11 6 11 5 10 6 11 6 11 6 10 7 11 7 11M374 268l8 10 8 11 7 11 6 11 5 11 4 10 4 10 3 11 4 10 4 11 5 10 5 11 6 11 5 10 6 11 5 11 5 10 5 11 6 11 6 10 5 11 4 10 4 11 4 10 3 11 4 10 5 11 6 10 6 11 7 11 6 11 6 10 5 11 6 11 6 11 6 10 7 11 7 11M382 268l7 11 8 11 5 11 5 10 4 11 4 10 4 11 4 10 4 11 5 10 5 11 5 11 6 10 5 11 6 11 5 10 5 11 6 11 6 10 5 11 4 10 4 11 3 10 4 11 4 10 5 11 5 10 7 11 7 11 6 11 6 10 5 11 6 11 6 11 6 10 7 11 7 11M389 269l7 11 6 11 5 10 4 11 4 10 4 11 4 10 4 11 4 10 6 11 5 11 6 10 5 11 5 11 6 10 5 11 6 11 5 10 5 11 5 10 4 11 3 10 4 11 4 10 4 11 6 10 7 11 7 11 6 11 6 10 5 11 6 11 6 11 6 10 6 11 8 11M396 270l6 11 5 10 4 11 4 10 3 11 4 10 4 11 5 10 5 11 6 11 5 10 6 11 5 11 5 10 6 11 5 11 6 10 5 11 5 10 3 11 4 10 4 11 4 10 4 11 6 10 7 11 6 11 7 11 5 10 6 11 6 11 5 10 7 11 6 11 7 11M401 271l5 10 4 11 4 10 4 11 4 10 4 11 5 10 5 11 6 11 5 10 6 11 5 11 5 10 6 11 5 11 6 10 5 11 4 10 4 11 4 10 3 11 4 10 5 11 6 10 7 11 6 11 6 11 6 10 6 11 5 11 6 10 7 11 6 11 7 11M406 271l4 11 4 10 4 11 4 10 4 11 4 10 6 11 5 11 6 10 5 11 6 11 5 10 5 11 6 10 6 11 5 11 4 10 4 11 4 10 3 11 4 10 5 11 6 10 7 11 6 11 6 11 6 10 6 11 5 11 6 10 6 11 7 11 7 11M410 272l4 10 3 11 4 10 4 11 5 10 5 11 6 11 6 10 5 11 5 10 6 11 5 11 6 10 5 11 6 11 4 10 4 11 3 10 4 11 4 10 5 11 6 10 6 11 7 11 6 11 6 10 6 11 5 11 6 10 6 11 7 11 7 11M413 272l4 11 4 10 4 11 5 10 5 11 6 10 5 11 6 11 5 10 5 11 6 11 5 10 6 11 5 11 5 10 4 11 3 10 4 11 4 10 5 11 5 10 7 11 7 11 6 11 6 10 5 11 6 11 6 10 6 11 7 11 7 11M417 273l4 10 4 11 4 10 6 11 5 10 6 11 6 11 5 10 5 11 6 11 5 10 6 11 5 11 5 10 3 11 4 10 4 11 4 10 4 11 6 10 7 11 7 11 6 11 6 10 5 11 6 11 6 10 6 11 7 11 7 11M420 273l5 11 4 10 5 11 6 10 6 11 5 11 6 10 5 11 5 11 6 10 6 11 5 11 4 10 4 11 4 10 4 11 3 10 5 11 6 10 7 11 7 11 6 11 6 10 5 11 6 11 6 10 6 11 7 11 7 11M424 274l5 10 5 11 6 10 6 11 5 11 5 10 6 11 5 11 6 10 6 11 5 11 4 10 4 11 4 10 3 11 4 10 5 11 6 10 7 11 6 11 7 11 5 10 6 11 6 11 6 10 6 11 7 11 7 11M429 274l5 11 6 10 5 11 6 11 5 10 5 11 6 11 6 10 5 11 6 11 4 10 4 11 3 10 4 10 4 11 5 11 6 10 7 11 6 11 7 11 5 10 6 11 6 11 6 10 6 11 7 11 7 11M434 275l5 10 6 11 5 11 6 10 5 11 6 11 5 10 6 11 5 11 5 10 4 11 3 10 4 10 4 11 5 11 6 10 6 11 7 11 6 11 6 10 6 11 6 11 5 10 7 11 7 11 7 11M439 275l6 11 5 11 5 10 6 11 5 11 6 10 6 11 5 11 5 10 3 11 4 10 4 10 4 11 4 10 6 11 7 11 7 11 6 11 6 10 6 11 5 11 6 10 7 11 7 11 7 11M444 276l6 11 5 10 6 11 5 11 6 10 6 11 5 11 4 10 4 11 4 10 4 10 4 11 4 10 6 11 7 11 7 11 6 11 6 10 6 11 5 11 6 10 7 11 6 11 8 11M450 277l5 10 5 11 6 11 6 10 5 11 6 11 4 10 4 11 4 10 3 10 4 11 5 10 6 11 7 11 7 11 6 11 6 10 6 11 5 11 6 10 7 11 6 11 8 11M455 277l5 11 6 10 5 11 6 11 5 10 5 11 4 10 3 11 4 10 4 11 5 10 6 11 7 11 7 11 6 11 6 10 5 11 6 11 6 10 6 11 7 11 8 11M460 278l5 10 6 11 6 11 5 10 5 11 4 10 3 11 4 10 4 11 5 10 6 11 7 11 6 11 7 11 6 10 5 11 6 11 6 10 6 11 7 11 7 11M465 278l6 11 6 11 5 10 4 11 4 10 4 11 4 10 4 11 5 10 6 11 6 11 7 11 7 11 5 10 6 11 6 11 6 10 6 11 7 11 7 11M471 279l6 11 5 10 4 11 4 10 4 11 4 10 4 11 4 10 6 11 7 11 7 11 6 10 6 11 6 11 6 11 6 10 6 11 7 11 7 11M476 280l6 10 4 11 4 10 4 11 3 10 4 11 5 10 6 11 7 11 7 11 6 10 6 11 6 11 6 11 6 10 6 11 7 11 7 11M481 280l5 11 4 10 3 11 4 10 4 11 5 10 6 11 7 11 7 11 6 10 6 11 6 11 6 11 6 10 6 11 7 11 7 11M486 281l4 10 3 11 4 10 4 11 5 10 6 11 7 11 7 11 6 10 6 11 6 11 5 11 6 10 7 11 7 11 7 11M489 281l4 11 4 10 4 11 5 10 6 11 7 11 7 11 6 10 6 11 6 11 5 11 6 10 7 11 7 11 7 11M493 282l4 10 4 11 5 10 6 11 7 11 6 11 7 10 6 11 5 11 6 11 6 10 7 11 7 11 7 11M496 282l4 11 5 10 6 11 7 11 7 11 7 10 6 11 5 11 6 10 6 11 7 11 7 11 7 11M500 283l5 10 6 11 7 11 7 11 6 10 6 11 6 11 6 10 6 11 6 11 7 11 8 11M505 283l6 11 7 11 7 11 6 10 6 11 6 11 6 10 6 11 6 11 7 11 8 11M511 284l7 11 7 11 6 10 6 11 6 11 6 10 6 11 6 11 7 11 8 11M518 285l7 11 6 10 6 11 6 11 6 10 6 11 6 11 7 11 8 11M524 286l7 10 6 11 6 11 6 10 6 11 6 11 7 11 8 11M531 286l6 11 6 11 5 10 6 11 7 11 7 11 7 11M537 287l5 11 6 10 6 11 7 11 7 11 7 11M542 288l6 10 6 11 7 11 7 11 7 11M548 288l6 11 7 11 7 11 7 11M554 289l7 11 7 11 7 11M561 290l7 11 7 11M568 291l7 11M363 346l-3 4 3 6M378 538l-7 9M382 268l-3 6 3 4M382 288l-2 4 3 7M384 329l-6 6 6 4M395 420l-7 9M398 520l-6 10M400 561l-7 9M410 662l-3 4 3 6M407 421l-2 5 2 5M415 662l-2 5 2 5M409 352l-3 5 3 5M411 432l-2 4 3 6M412 442l-4 3 4 7M415 542l-4 10M420 693l-4 10M415 432l-3 10M422 633l-4 10M417 273l-3 9M426 554l-2 4 2 6M427 584l-2 4 2 6M429 644l-4 6 4 4M428 524l0 6 0 4M428 534l-1 5 2 5M432 644l-3 10M425 304l-3 9M431 354l-4 10M435 505l-2 4 3 6M436 525l-4 9M435 315l-5 9M439 275l-5 10M458 588l-5 9M458 608l-4 9M460 668l-5 9M461 698l-2 5 2 5M460 468l-5 9M463 408l-5 10M466 518l-5 10M468 609l-3 4 3 6M470 699l-2 6 3 4M467 339l-5 9M472 579l-4 10M475 700l-4 9M479 630l-5 9M478 340l-2 5 2 5M483 351l-5 9M487 561l-4 10M488 591l-5 10M490 681l-2 8 2 2M486 321l-3 5 4 5M490 481l-4 10M494 702l-3 5 4 5M496 612l-3 10M494 332l-1 5 1 5M495 372l-2 4 2 6M495 382l-1 5 1 5M497 332l0 4 1 6M500 473l-3 9M501 503l-4 9M502 563l-3 9M503 603l-4 10M504 683l-2 5 2 5M504 703l-3 10M501 313l-4 9M502 383l-2 5 2 5M502 393l-1 5 2 5M504 503l-3 5 4 5M507 663l-3 10M509 494l-1 5 1 5M511 634l-4 9M514 464l-6 10M514 484l-5 10M515 514l-6 10M516 605l-2 5 2 5M517 625l-2 4 2 6M517 655l-1 4 1 6M518 285l-7 9M523 645l-3 5 4 5M527 456l-3 4 3 6M528 546l-6 9M530 646l-2 4 2 6M533 467l-6 9M535 587l-6 9M539 457l-3 5 3 5M540 577l-3 4 4 6M542 708l-5 9M543 378l-5 9M546 628l-3 4 4 6M548 308l-2 4 2 6M549 328l-6 10M552 639l-5 9M555 379l-4 5 4 5M556 449l-6 10M556 469l-3 5 3 5M556 519l-2 4 3 6M564 670l-6 10M575 322l-7 9M575 332l-7 9" stroke="#000" stroke-width="1" fill="none" shape-rendering="crispEdges" transform="translate(0.5 0.5)"/>
<g fill="#000" filter="url(#b5)" opacity="0.7">
<path d="M398 322 L438 350 L441 598 L402 574Z"/>
<path d="M478 384 L514 407 L518 665 L482 643Z"/>
<path d="M424 498 L498 536 L498 560 L424 522Z"/>
<path d="M426 545 L496 585 L496 607 L426 567Z"/>
<path d="M426 565 L496 605 L498 650 L428 590Z"/>
<path d="M518 580 L568 606 L568 705 L518 690Z"/>
<path d="M522 586 L563 608 L563 702 L522 688Z"/>
</g>
<g fill="#000" filter="url(#b1)" opacity="0.95">
<path d="M409 338 L415 331 L422 336 L428 590 L415 582Z"/>
<path d="M488 393 L494 388 L500 394 L508 655 L495 648Z"/>
<path d="M424 506 L498 544 L498 553 L424 515Z"/>
<path d="M426 553 L496 593 L496 601 L426 561Z"/>
<path d="M522 584 L527 587 L527 692 L522 688Z"/>
<path d="M558 603 L563 606 L563 704 L558 700Z"/>
<path d="M522 584 L563 606 L563 611 L522 589Z"/>
</g>
</g>
<g clip-path="url(#cf)">
<path d="M576 438 L588.9 431.2 L601.8 424.4 L614.8 417.7 L627.7 411.2 L640.6 404.7 L653.6 398.3 L666.5 392.1 L679.4 385.9 L692.3 379.8 L705.3 373.8 L718.2 367.9 L731.1 362.1 L744.1 356.4 L757 350.8 L769.9 345.3 L782.9 339.8 L795.8 334.5 L808.7 329.3 L821.7 324.2 L834.6 319.1 L847.5 314.2 L860.5 309.3 L873.4 304.6 L886.3 299.9 L899.3 295.4 L912.2 290.9 L925.2 286.5 L938.1 282.2 L951 278.1 L964 274 L976.9 270 L989.9 266.1 L1002.8 262.3 L1015.8 258.6 L1028.7 255 L1041.7 251.5 L1054.6 248 L1067.6 244.7 L1080.5 241.5 L1080.5 241.5 L1080.2 248.2 L1079.8 255 L1079.5 261.7 L1079.2 268.5 L1078.8 275.2 L1078.5 282 L1078.2 288.7 L1077.8 295.4 L1077.5 302.2 L1077.2 308.9 L1076.8 315.7 L1076.5 322.4 L1076.2 329.2 L1075.8 335.9 L1075.5 342.7 L1075.2 349.4 L1074.8 356.1 L1074.5 362.9 L1074.2 369.6 L1073.8 376.4 L1073.5 383.1 L1073.2 389.9 L1072.8 396.6 L1072.5 403.3 L1072.2 410.1 L1071.8 416.8 L1071.5 423.6 L1071.2 430.3 L1070.8 437.1 L1070.5 443.8 L1070.2 450.6 L1069.8 457.3 L1069.5 464 L1069.2 470.8 L1068.8 477.5 L1068.5 484.3 L1068.2 491 L1067.8 497.8 L1067.5 504.5 L1067.5 504.5 L1054.9 508 L1042.4 511.7 L1029.8 515.4 L1017.2 519.2 L1004.7 523.1 L992.1 527.2 L979.6 531.3 L967 535.5 L954.4 539.8 L941.9 544.2 L929.3 548.7 L916.8 553.3 L904.2 557.9 L891.7 562.7 L879.1 567.6 L866.6 572.6 L854 577.7 L841.5 582.8 L828.9 588.1 L816.3 593.4 L803.8 598.9 L791.2 604.4 L778.7 610.1 L766.2 615.8 L753.6 621.7 L741.1 627.6 L728.5 633.6 L716 639.8 L703.4 646 L690.9 652.3 L678.3 658.7 L665.8 665.2 L653.2 671.8 L640.7 678.5 L628.2 685.3 L615.6 692.2 L603.1 699.2 L590.5 706.3 L578 713.5 L578 713.5 L577.9 706.4 L577.9 699.4 L577.8 692.3 L577.8 685.2 L577.7 678.2 L577.7 671.1 L577.6 664.1 L577.6 657 L577.5 649.9 L577.5 642.9 L577.4 635.8 L577.4 628.7 L577.3 621.7 L577.3 614.6 L577.2 607.5 L577.2 600.5 L577.1 593.4 L577.1 586.3 L577 579.3 L577 572.2 L576.9 565.2 L576.9 558.1 L576.8 551 L576.8 544 L576.7 536.9 L576.7 529.8 L576.6 522.8 L576.6 515.7 L576.5 508.6 L576.5 501.6 L576.4 494.5 L576.4 487.4 L576.3 480.4 L576.3 473.3 L576.2 466.3 L576.2 459.2 L576.1 452.1 L576.1 445.1 L576 438Z" fill="#b6b6b6"/>
<g fill="#5e5e5e" opacity="0.45" filter="url(#b3)">
<path d="M578 452 L692 522 L698 592 L578 565Z"/>
<path d="M578 445 L640 420 L700 392 L700 460 L650 490 L600 470 L578 480Z"/>
<path d="M935 300 L995 285 L995 420 L1000 500 L935 540Z"/>
<path d="M1040 430 L1072 420 L1070 505 L1040 515Z"/>
</g>
<g fill="#555" opacity="0.65" filter="url(#b1)">
<path d="M678 525 L697 530 L697 588 L678 582Z"/>
<path d="M881 309 L899 303 L899 392 L881 394Z"/>
<path d="M925 292 L946 286 L946 422 L925 424Z"/>
<path d="M696 379 L820 326 L831 342 L777 368 L734 392 L696 400Z"/>
<path d="M788 335 L800 330 L846 366 L840 374Z"/>
<path d="M846 318 L881 309 L881 335 L850 345Z"/>
</g>
<path d="M651.6 399.3 L671.8 389.5 L691.9 380 L712.1 370.7 L732.3 361.6 L752.5 352.7 L772.6 344.1 L792.8 335.7 L813 327.6 L833.2 319.7 L853.4 312 L873.5 304.5 L893.7 297.3 L913.9 290.3 L934.1 283.6 L954.3 277 L954.3 291 L934.1 297.6 L913.9 304.3 L893.7 311.3 L873.5 318.5 L853.4 326 L833.2 333.7 L813 341.6 L792.8 349.7 L772.6 358.1 L752.5 366.7 L732.3 375.6 L712.1 384.7 L691.9 394 L671.8 403.5 L651.6 413.3Z" fill="#5e5e5e" opacity="0.2" filter="url(#b2)"/>
<path d="M576 236.5L1080 244.1M576 239.5L1080 247.1M576 247.8L1080 255.4M576 250.8L1080 258.4M576 259.1L1080 266.7M576 262.1L1080 269.7M576 270.4L1080 278.0M576 273.4L1080 281.0M576 281.7L1080 289.3M576 284.7L1080 292.3M576 293.0L1080 300.6M576 296.0L1080 303.6M576 304.3L1080 311.9M576 307.3L1080 314.9M576 315.6L1080 323.2M576 318.6L1080 326.2M576 326.9L1080 334.5M576 329.9L1080 337.5M576 338.2L1080 345.8M576 341.2L1080 348.8M576 349.5L1080 357.1M576 352.5L1080 360.1M576 360.8L1080 368.4M576 363.8L1080 371.4M576 372.1L1080 379.7M576 375.1L1080 382.7M576 383.4L1080 391.0M576 386.4L1080 394.0M576 394.7L1080 402.3M576 397.7L1080 405.3M576 406.0L1080 413.6M576 409.0L1080 416.6M576 417.3L1080 424.9M576 420.3L1080 427.9M576 428.6L1080 436.2M576 431.6L1080 439.2M576 439.9L1080 447.5M576 442.9L1080 450.5M576 451.2L1080 458.8M576 454.2L1080 461.8M576 462.5L1080 470.1M576 465.5L1080 473.1M576 473.8L1080 481.4M576 476.8L1080 484.4M576 485.1L1080 492.7M576 488.1L1080 495.7M576 496.4L1080 504.0M576 499.4L1080 507.0M576 507.7L1080 515.3M576 510.7L1080 518.3M576 519.0L1080 526.6M576 522.0L1080 529.6M576 530.3L1080 537.9M576 533.3L1080 540.9M576 541.6L1080 549.2M576 544.6L1080 552.2M576 552.9L1080 560.5M576 555.9L1080 563.5M576 564.2L1080 571.8M576 567.2L1080 574.8M576 575.5L1080 583.1M576 578.5L1080 586.1M576 586.8L1080 594.4M576 589.8L1080 597.4M576 598.1L1080 605.7M576 601.1L1080 608.7M576 609.4L1080 617.0M576 612.4L1080 620.0M576 620.7L1080 628.3M576 623.7L1080 631.3M576 632.0L1080 639.6M576 635.0L1080 642.6M576 643.3L1080 650.9M576 646.3L1080 653.9M576 654.6L1080 662.2M576 657.6L1080 665.2M576 665.9L1080 673.5M576 668.9L1080 676.5M576 677.2L1080 684.8M576 680.2L1080 687.8M576 688.5L1080 696.1M576 691.5L1080 699.1M576 699.8L1080 707.4M576 702.8L1080 710.4M576 711.1L1080 718.7M576 714.1L1080 721.7M576 722.4L1080 730.0M576 725.4L1080 733.0M576 733.7L1080 741.3M576 736.7L1080 744.3" stroke="#8c8c8c" stroke-width="1" fill="none" shape-rendering="crispEdges" transform="translate(0.5 0.5)"/>
<path d="M575 243l7 0-7 12zM583 311l0 12-8-1zM575 334l8 0-8 11zM583 356l0 12-8 0zM576 379l7 0-7 11zM576 413l8 0-8 11zM584 526l0 11-7 0zM577 571l8 0-8 11zM585 605l0 11-8 0zM585 673l0 11-7 0zM583 311l8 0-8 12zM591 402l0 11-7 0zM592 560l0 11-7 0zM585 605l8 0-8 11zM585 616l8 0-8 12zM593 639l0 11-8 0zM585 684l8 0-7 11zM590 277l8 1-8 11zM599 368l0 11-8 0zM599 391l0 11-8 0zM599 424l0 12-8 0zM591 447l8 0-7 11zM592 470l7 0-7 11zM592 492l8 0-8 11zM600 515l0 11-8 0zM600 526l0 11-8 0zM600 560l0 11-8 0zM600 583l0 11-7 0zM593 594l7 0-7 11zM600 605l0 12-7-1zM600 617l0 11-7 0zM601 650l0 12-8 0zM601 662l0 11-8 0zM601 684l0 12-8 0zM601 707l0 11-8 0zM598 232l7 0-7 12zM598 255l8 0-8 11zM598 266l8 0-8 12zM606 278l0 11-8 0zM598 289l8 0-8 11zM606 312l0 11-8 0zM598 323l8 0-8 11zM606 368l0 11-7 0zM607 458l0 12-8 0zM607 481l0 11-7 0zM600 492l7 0-7 12zM600 504l7 0-7 11zM608 583l0 11-8 0zM608 594l0 11-8 0zM608 605l0 12-8 0zM600 617l8 0-8 11zM608 651l0 11-7 0zM608 662l0 11-7 0zM601 707l8 0-8 11zM613 266l0 12-7 0zM614 300l0 12-8 0zM606 323l8 0-8 11zM614 357l0 11-8 0zM614 402l0 11-7 0zM607 425l7 0-7 11zM607 436l8 0-8 11zM607 470l8 0-8 11zM616 651l0 11-8 0zM608 673l8 0-7 11zM622 267l0 11-9 0zM614 368l8 0-8 11zM622 402l0 11-8 0zM623 493l0 11-8 0zM615 560l8 0-8 12zM624 572l0 11-8 0zM616 583l8 0-8 11zM616 605l8 1-8 11zM624 685l0 11-8 0zM630 255l0 12-8 0zM622 267l8 0-8 11zM630 301l0 11-8 0zM630 368l0 12-8 0zM622 391l8 0-8 11zM622 402l9 0-9 11zM631 425l0 11-8 0zM623 447l8 1-8 11zM631 538l0 11-8 0zM631 549l1 12-9-1zM624 583l8 0-8 11zM624 594l8 0-8 12zM632 628l0 12-8 0zM632 651l0 11-8 0zM624 662l8 0-8 11zM624 707l9 0-8 12zM638 256l0 11-8 0zM630 278l8 0-8 11zM630 391l9 0-8 11zM639 436l0 12-8 0zM631 470l8 0-8 11zM631 481l8 1-8 11zM631 493l8 0-8 11zM639 504l0 11-8 0zM639 515l0 12-8 0zM638 256l8 0-8 11zM638 267l8 0-8 11zM646 278l0 12-8-1zM646 301l0 11-8 0zM646 312l0 11-8 0zM646 323l0 12-8 0zM639 391l8 0-8 11zM647 425l0 11-8 0zM647 448l0 11-8 0zM647 459l0 11-8 0zM640 617l8 0-8 11zM649 719l0 11-8 0zM646 233l8 0-8 11zM646 244l8 0-8 12zM654 256l0 11-8 0zM646 301l8 0-8 11zM646 335l8 0-8 11zM654 346l1 11-9 0zM655 357l0 12-8 0zM647 380l8 0-8 11zM656 583l0 12-8 0zM648 595l8 0-8 11zM648 640l8 0-8 11zM649 719l8 0-8 11zM654 233l8 0-8 11zM654 256l8 0-8 11zM662 324l1 11-9 0zM663 414l0 11-8 0zM663 425l0 12-8 0zM655 459l8 0-8 11zM656 595l8 0-8 11zM656 606l8 0-8 11zM656 629l8 0-8 11zM656 640l8 0-8 11zM665 663l0 11-8 0zM665 719l0 12-8-1zM670 256l0 11-8 0zM670 301l1 12-9-1zM663 414l8 0-8 11zM671 426l0 11-8 0zM663 482l9 0-8 11zM672 527l0 12-8-1zM664 618l8 0-8 11zM664 651l9 1-8 11zM665 674l8 0-8 11zM665 708l8 0-8 11zM679 324l0 11-8 0zM679 369l0 11-8 0zM679 392l0 11-8 0zM671 414l8 0-8 12zM671 437l8 0-8 11zM680 460l0 11-9 0zM680 516l0 11-8 0zM680 539l0 11-8 0zM672 550l8 0-8 11zM680 595l0 11-8 0zM672 606l8 0-8 12zM681 663l0 11-8 0zM681 708l0 11-8 0zM681 719l0 12-8 0zM686 245l0 11-8 0zM679 426l8 0-8 11zM688 516l0 11-8 0zM680 550l8 0-8 11zM680 584l8 0-8 11zM680 618l9 0-8 11zM687 279l8 0-8 11zM687 290l8 0-8 11zM695 302l0 11-8 0zM687 313l8 0-8 11zM695 347l0 11-8 0zM687 369l8 0-8 12zM695 381l0 11-8 0zM687 403l8 0-8 11zM696 448l0 12-8 0zM688 607l9 0-8 11zM689 652l8 0-8 11zM689 720l8 0-8 11zM703 268l0 11-8 0zM695 369l8 1-8 11zM696 437l8 0-8 11zM704 471l0 12-8-1zM696 494l8 0-8 11zM696 516l8 0-8 12zM696 573l9 0-9 11zM705 596l0 11-8 0zM697 641l8 0-8 11zM705 720l0 11-8 0zM711 279l0 12-8-1zM703 302l8 0-8 11zM703 336l9 0-9 11zM712 415l0 11-8 0zM712 437l0 12-8 0zM704 516l9 1-9 11zM713 528l0 11-9 0zM704 550l9 0-8 12zM705 618l8 0-8 11zM713 630l0 11-8 0zM705 641l8 0-8 11zM713 663l0 12-8 0zM720 313l0 12-9-1zM711 324l9 1-8 11zM720 358l0 12-8 0zM712 483l9 0-9 11zM712 494l9 0-9 11zM713 517l8 0-8 11zM713 596l8 0-8 11zM713 607l8 0-8 11zM721 618l0 12-8 0zM721 630l0 11-8 0zM714 697l8 0-8 12zM719 268l9 0-9 11zM720 325l8 0-8 11zM720 415l8 0-8 11zM721 551l8 0-8 11zM721 573l8 0-8 11zM730 630l0 11-9 0zM736 257l0 11-8 0zM736 268l0 12-8-1zM736 291l0 11-8 0zM737 404l0 11-9 0zM729 449l8 0-8 11zM737 506l0 11-8 0zM737 528l0 12-8-1zM729 539l8 1-8 11zM737 551l0 11-8 0zM737 562l0 11-8 0zM738 585l0 11-9 0zM729 596l9 0-9 11zM729 607l9 0-8 12zM730 664l8 0-8 11zM738 686l0 12-8 0zM744 246l0 11-8 0zM736 336l9 0-9 11zM745 404l0 11-8 0zM737 438l8 0-8 11zM737 460l8 1-8 11zM737 517l8 0-8 11zM745 551l1 11-9 0zM746 641l0 12-8 0zM738 653l8 0-8 11zM746 698l0 11-8 0zM744 246l9 0-9 11zM744 268l9 1-9 11zM753 370l0 12-8-1zM753 382l0 11-8 0zM753 449l0 12-8 0zM753 506l0 11-8 0zM753 517l0 11-8 0zM753 540l0 11-8 0zM746 574l8 0-8 11zM746 596l8 0-8 11zM746 619l8 0-8 11zM754 641l0 12-8 0zM754 664l0 11-8 0zM754 721l0 11-8 0zM761 314l0 11-8 0zM753 370l8 0-8 12zM753 438l8 0-8 11zM761 529l0 11-8 0zM762 642l0 11-8 0zM761 235l8 0-8 11zM761 269l8 0-8 11zM769 314l0 11-8 0zM769 337l0 11-8 0zM761 359l8 0-8 11zM761 404l8 0-8 12zM769 416l0 11-8 0zM769 450l0 11-8 0zM761 506l8 0-8 11zM769 574l0 11-8 0zM769 608l0 11-7 0zM762 630l7 0-7 12zM769 642l0 11-7 0zM778 235l0 11-9 0zM769 291l9 1-9 11zM777 348l0 11-8 0zM777 495l0 11-8 0zM777 506l0 12-8-1zM777 585l0 12-8 0zM769 630l8 1-8 11zM769 642l8 0-8 11zM769 710l8 0-8 11zM778 280l8 0-8 12zM786 303l0 11-8 0zM777 348l9 0-9 11zM777 393l8 0-8 12zM785 439l0 11-8 0zM777 450l8 0-8 11zM777 484l8 0-8 11zM777 495l8 0-8 11zM777 518l8 0-8 11zM785 529l0 11-8 0zM785 552l0 11-8 0zM785 585l0 12-8 0zM785 597l0 11-8 0zM777 653l8 0-8 11zM786 303l8 0-8 11zM794 314l0 12-8 0zM794 326l0 11-8 0zM786 337l8 0-8 11zM786 348l8 0-8 11zM794 382l0 11-9 0zM793 439l0 11-8 0zM793 484l0 11-8 0zM785 563l8 0-8 11zM785 574l8 0-8 11zM793 699l0 11-8 0zM802 235l0 12-8 0zM801 427l0 12-8 0zM801 540l0 12-8 0zM793 563l8 0-8 11zM801 574l0 12-8 0zM793 631l7 0-7 11zM793 687l7 0-7 12zM800 721l0 12-8-1zM810 247l0 11-8 0zM802 292l8 0-8 11zM810 315l0 11-8 0zM802 337l8 0-8 11zM809 405l0 11-8 0zM801 473l8 0-8 11zM801 574l8 0-8 12zM808 586l0 11-7 0zM808 597l0 11-7 0zM808 620l0 11-8 0zM808 642l0 12-8-1zM800 687l8 0-8 12zM808 699l0 11-8 0zM808 710l0 11-8 0zM810 258l8 0-8 11zM810 269l8 1-8 11zM810 292l8 0-8 11zM818 326l0 11-8 0zM810 349l8 0-8 11zM810 382l8 1-8 11zM809 439l8 0-8 11zM809 450l8 0-8 11zM817 484l0 12-8-1zM809 507l8 0-8 11zM816 552l0 11-7 0zM809 563l7 0-7 11zM816 575l0 11-8 0zM816 597l0 12-8-1zM816 654l0 11-8 0zM808 665l8 0-8 11zM808 676l8 0-8 11zM816 688l-1 11-7 0zM827 247l0 11-9 0zM818 258l9 0-9 12zM818 270l9 0-9 11zM827 292l0 12-9-1zM818 303l9 1-9 11zM827 315l-1 11-8 0zM825 496l0 11-8 0zM825 507l0 11-8 0zM825 518l0 12-8-1zM824 643l0 11-8 0zM824 676l-1 12-7 0zM827 247l9 0-9 11zM835 270l0 11-8 0zM835 292l0 12-8 0zM826 360l9 0-9 11zM833 552l0 12-9-1zM823 722l8 0-8 11zM844 247l0 12-9-1zM835 315l8 0-8 11zM843 338l0 11-8 0zM835 360l8 0-9 11zM842 439l0 12-8 0zM841 541l0 11-8 0zM832 609l8 0-8 11zM832 620l8 0-8 11zM840 643l0 11-8 0zM839 677l0 11-8 0zM844 247l9 0-9 12zM852 281l0 12-8 0zM851 360l0 12-8 0zM851 417l-1 11-8 0zM842 439l8 1-8 11zM842 451l8 0-8 11zM842 473l8 0-8 12zM842 485l8 0-9 11zM840 586l9 0-9 12zM840 609l8 0-8 11zM848 643l0 11-8 0zM848 665l-1 12-8 0zM847 677l0 11-8 0zM839 688l8 0-8 11zM847 711l0 11-8 0zM853 236l8 0-8 11zM860 349l0 12-9-1zM851 417l8 0-9 11zM859 428l0 12-9 0zM858 462l0 12-8-1zM858 496l0 11-9 0zM849 541l8 0-8 11zM849 552l8 1-8 11zM857 587l-1 11-8 0zM869 327l0 11-9 0zM860 361l8 0-9 11zM868 383l0 12-9-1zM866 496l0 12-8-1zM866 541l-1 12-8 0zM865 564l0 11-8 0zM856 609l9 0-9 11zM864 621l0 11-8 0zM856 654l8 0-8 12zM856 666l8 0-9 11zM864 677l-1 11-8 0zM863 711l0 11-8 0zM870 236l9 1-9 11zM878 259l0 11-8 0zM876 395l0 11-8 0zM867 462l8 0-8 12zM873 609l0 12-9 0zM864 654l8 1-8 11zM879 237l9 0-9 11zM885 406l-1 11-8 0zM875 485l8 0-8 11zM883 497l0 11-9 0zM882 530l0 12-8 0zM873 587l9 0-9 11zM872 666l8 0-8 11zM880 700l-1 11-8 0zM871 711l8 0-8 11zM887 271l9 0-9 11zM887 293l8 0-9 11zM886 316l9 0-9 11zM894 372l0 12-9 0zM885 395l8 0-8 11zM893 418l0 11-9 0zM892 474l0 11-9 0zM883 485l9 0-9 12zM883 508l8 0-8 11zM882 587l8 0-9 11zM889 632l0 11-8 0zM880 655l9 0-9 11zM880 666l8 0-8 11zM887 723l0 11-8 0zM905 237l0 11-9 0zM903 339l0 11-9 0zM894 361l9 0-9 11zM902 384l0 11-9 0zM893 406l9 0-9 12zM902 418l-1 11-8 0zM897 621l0 11-8 0zM897 632l0 12-8-1zM896 711l-1 12-8 0zM905 237l9 0-9 11zM913 294l-1 11-8 0zM903 327l9 0-9 12zM912 339l-1 11-8 0zM903 350l8 0-8 11zM910 395l0 12-8-1zM902 406l8 1-8 11zM902 418l8 0-9 11zM910 429l-1 11-8 0zM901 440l8 0-8 12zM901 463l8 0-9 11zM899 531l8 0-8 11zM896 666l9 0-9 12zM904 678l0 11-8 0zM903 723l0 11-8 0zM913 294l8 0-9 11zM921 305l0 11-9 0zM920 328l0 11-8 0zM920 361l-1 12-8 0zM909 452l8 0-8 11zM917 486l-1 11-8 0zM916 508l0 12-8-1zM916 520l0 11-9 0zM907 542l8 0-8 11zM907 565l8 0-9 11zM913 666l-1 12-8 0zM912 678l0 11-8 0zM930 283l0 11-9 0zM927 384l0 11-8 0zM926 452l-1 11-8 0zM915 576l8 0-9 11zM922 610l0 11-8 0zM912 712l7 0-8 11zM930 271l9 0-9 12zM938 283l0 11-8 0zM927 418l8 0-9 11zM933 509l-1 11-8 0zM924 531l8 0-8 11zM923 565l8 0-8 11zM923 576l8 0-9 11zM929 633l0 11-8 0zM929 655l0 12-8 0zM928 678l0 11-8 0zM927 712l0 11-8 0zM938 305l8 0-8 12zM946 317l0 11-9 0zM945 351l0 11-9 0zM944 373l0 11-8 0zM944 407l-1 11-8 0zM942 452l0 11-8 0zM942 463l0 12-9 0zM937 644l0 12-8-1zM929 655l8 1-8 11zM929 667l8 0-9 11zM935 712l0 11-8 0z" fill="#6a6a6a" opacity="0.4"/>
<path d="M575 232l7 0 8 0 8 0 7 0 8 1 8 0 8 0 9 0 8 0 8 0 8 0 8 0 8 1 8 0 8 0 9 0 8 0 8 0 9 0 8 0 8 1 8 0 9 0 8 0 9 0 8 0 8 0 8 0 8 1 9 0 8 0 9 0 8 0 9 0 8 0 9 0 9 1 9 0 8 0 9 0 9 0 8 0 9 0 9 0 8 1M575 243l7 0 8 1 8 0 8 0 7 0 8 0 8 0 9 0 8 0 8 0 8 1 8 0 8 0 8 0 9 0 8 0 8 0 8 0 9 1 8 0 8 0 9 0 8 0 8 0 9 0 8 0 8 1 8 0 8 0 9 0 8 0 9 0 8 0 9 0 8 1 9 0 9 0 8 0 9 0 9 0 9 0 8 0 9 1 8 0 9 0M575 255l7 0 8 0 8 0 8 0 7 0 8 0 9 0 8 1 8 0 8 0 8 0 8 0 8 0 8 0 9 0 8 1 8 0 8 0 9 0 8 0 8 0 9 0 8 0 8 0 9 1 8 0 8 0 8 0 8 0 8 0 9 0 8 0 9 1 8 0 9 0 9 0 8 0 9 0 9 0 9 1 8 0 9 0 8 0 9 0 9 0M575 266l7 0 8 0 8 0 8 0 7 0 9 1 8 0 8 0 8 0 8 0 8 0 8 0 8 0 9 1 8 0 8 0 8 0 8 0 9 0 8 0 8 0 9 1 8 0 8 0 9 0 8 0 8 0 8 0 8 0 8 1 9 0 8 0 9 0 8 0 9 0 9 0 8 0 9 1 9 0 8 0 9 0 9 0 8 0 9 0 8 0M575 277l8 0 7 0 8 1 8 0 7 0 9 0 8 0 8 0 8 0 8 0 8 0 8 1 8 0 9 0 8 0 8 0 8 0 8 0 9 0 8 1 8 0 9 0 8 0 8 0 9 0 8 0 8 0 8 1 8 0 8 0 9 0 8 0 9 0 8 0 9 0 8 1 9 0 9 0 9 0 8 0 9 0 8 0 9 1 8 0 9 0M575 288l8 1 7 0 8 0 8 0 8 0 8 0 8 0 8 0 8 1 8 0 8 0 8 0 9 0 8 0 8 0 8 0 8 1 9 0 8 0 8 0 8 0 9 0 8 0 8 0 9 1 8 0 8 0 8 0 8 0 8 0 9 0 8 0 9 1 8 0 9 0 8 0 9 0 9 0 8 0 9 0 9 1 8 0 9 0 8 0 9 0M575 300l8 0 7 0 8 0 8 0 8 0 8 0 8 1 8 0 8 0 8 0 8 0 8 0 9 0 8 0 8 1 8 0 8 0 9 0 8 0 8 0 8 0 9 0 8 1 8 0 9 0 8 0 8 0 8 0 8 0 8 0 9 1 8 0 9 0 8 0 8 0 9 0 9 0 8 0 9 1 9 0 8 0 9 0 8 0 9 0 8 0M575 311l8 0 8 0 7 0 8 1 8 0 8 0 8 0 8 0 8 0 8 0 8 0 9 1 8 0 8 0 8 0 8 0 8 0 9 0 8 0 8 1 8 0 9 0 8 0 8 0 9 0 8 0 8 0 8 0 8 1 8 0 9 0 8 0 8 0 9 0 8 0 9 0 9 1 8 0 9 0 9 0 8 0 9 0 8 0 9 1 8 0M575 322l8 1 8 0 7 0 8 0 8 0 8 0 8 0 8 0 8 0 8 1 8 0 9 0 8 0 8 0 8 0 8 0 8 0 9 1 8 0 8 0 8 0 9 0 8 0 8 0 9 0 8 1 8 0 8 0 8 0 8 0 8 0 9 0 8 0 9 1 8 0 9 0 8 0 9 0 9 0 8 0 9 0 8 1 9 0 8 0 9 0M575 334l8 0 8 0 7 0 8 0 8 0 8 0 8 1 8 0 8 0 8 0 9 0 8 0 8 0 8 0 8 0 8 1 9 0 8 0 8 0 8 0 9 0 8 0 8 0 8 1 9 0 8 0 8 0 8 0 8 0 8 0 8 0 9 1 8 0 9 0 8 0 9 0 8 0 9 0 8 0 9 1 9 0 8 0 8 0 9 0 8 0M575 345l8 0 8 0 7 0 8 0 8 1 8 0 8 0 8 0 8 0 8 0 9 0 8 0 8 1 8 0 8 0 8 0 9 0 8 0 8 0 8 0 9 1 8 0 8 0 8 0 8 0 9 0 8 0 8 0 8 1 8 0 8 0 9 0 8 0 8 0 9 0 8 0 9 1 9 0 8 0 9 0 8 0 9 0 8 0 9 0 8 1M575 356l8 0 8 1 8 0 7 0 8 0 8 0 8 0 8 0 8 0 9 0 8 1 8 0 8 0 8 0 8 0 8 0 9 0 8 0 8 1 8 0 9 0 8 0 8 0 8 0 8 0 9 0 8 1 8 0 8 0 8 0 8 0 9 0 8 0 8 0 9 1 8 0 9 0 8 0 9 0 9 0 8 0 9 0 8 1 8 0 9 0M575 368l8 0 8 0 8 0 7 0 8 0 8 0 8 0 8 1 9 0 8 0 8 0 8 0 8 0 8 0 8 0 8 1 9 0 8 0 8 0 8 0 9 0 8 0 8 0 8 0 8 1 9 0 8 0 8 0 8 0 8 0 8 0 8 0 9 1 8 0 8 0 9 0 9 0 8 0 9 0 8 0 9 1 8 0 9 0 8 0 8 0M576 379l7 0 8 0 8 0 7 0 8 0 8 1 8 0 8 0 9 0 8 0 8 0 8 0 8 0 8 1 8 0 9 0 8 0 8 0 8 0 9 0 8 0 8 1 8 0 8 0 8 0 9 0 8 0 8 0 8 0 8 1 8 0 8 0 9 0 8 0 8 0 9 0 8 0 9 1 9 0 8 0 9 0 8 0 8 0 9 0 8 0M576 390l7 0 8 0 8 1 8 0 7 0 8 0 8 0 9 0 8 0 8 0 8 1 8 0 8 0 8 0 8 0 9 0 8 0 8 0 8 0 9 1 8 0 8 0 8 0 8 0 8 0 8 0 9 0 8 1 8 0 8 0 8 0 8 0 9 0 8 0 8 0 9 1 8 0 9 0 8 0 9 0 8 0 9 0 8 0 9 1 8 0M576 401l7 1 8 0 8 0 8 0 7 0 8 0 9 0 8 0 8 1 8 0 8 0 8 0 8 0 8 0 8 0 9 0 8 1 8 0 8 0 9 0 8 0 8 0 8 0 8 0 8 1 8 0 8 0 8 0 8 0 8 0 9 0 8 0 8 0 9 1 8 0 9 0 8 0 9 0 8 0 9 0 8 1 8 0 9 0 8 0 9 0M576 413l8 0 7 0 8 0 8 0 7 0 8 0 9 1 8 0 8 0 8 0 8 0 8 0 8 0 8 0 9 1 8 0 8 0 8 0 8 0 9 0 8 0 8 0 8 1 8 0 8 0 8 0 8 0 8 0 8 0 8 0 9 1 8 0 8 0 9 0 8 0 8 0 9 0 8 0 9 1 9 0 8 0 8 0 9 0 8 0 8 0M576 424l8 0 7 0 8 0 8 1 7 0 9 0 8 0 8 0 8 0 8 0 8 0 8 1 8 0 8 0 9 0 8 0 8 0 8 0 9 0 8 1 8 0 8 0 8 0 8 0 8 0 8 0 8 0 8 0 8 1 8 0 9 0 8 0 8 0 8 0 9 0 8 0 9 1 8 0 9 0 8 0 9 0 8 0 8 0 9 0 8 1M576 435l8 1 7 0 8 0 8 0 8 0 8 0 8 0 8 0 8 0 8 1 8 0 8 0 8 0 9 0 8 0 8 0 8 0 8 1 9 0 8 0 8 0 8 0 8 0 8 0 8 0 8 1 8 0 8 0 8 0 8 0 9 0 8 0 8 0 8 1 9 0 8 0 9 0 8 0 9 0 8 0 8 0 9 1 8 0 8 0 9 0M576 447l8 0 7 0 8 0 8 0 8 0 8 0 8 1 8 0 8 0 8 0 8 0 8 0 8 0 9 0 8 0 8 1 8 0 8 0 9 0 8 0 8 0 8 0 8 0 8 1 8 0 8 0 8 0 8 0 8 0 8 0 8 0 9 1 8 0 8 0 8 0 9 0 8 0 9 0 8 0 9 1 8 0 8 0 9 0 8 0 8 0M576 458l8 0 8 0 7 0 8 0 8 1 8 0 8 0 8 0 8 0 8 0 8 0 8 0 9 1 8 0 8 0 8 0 8 0 8 0 9 0 8 0 8 1 8 0 8 0 8 0 8 0 8 0 8 0 8 0 8 0 8 1 8 0 9 0 8 0 8 0 8 0 9 0 8 0 9 1 8 0 9 0 8 0 8 0 8 0 9 0 8 0M576 469l8 0 8 1 7 0 8 0 8 0 8 0 8 0 8 0 8 0 8 0 8 1 8 0 9 0 8 0 8 0 8 0 8 0 9 0 8 1 8 0 8 0 8 0 8 0 8 0 8 0 8 0 8 1 8 0 8 0 8 0 8 0 8 0 9 0 8 0 8 1 9 0 8 0 8 0 9 0 8 0 9 0 8 0 8 1 8 0 9 0M576 481l8 0 8 0 7 0 8 0 8 0 8 0 8 0 8 1 8 0 8 0 8 0 9 0 8 0 8 0 8 0 8 1 8 0 9 0 8 0 8 0 8 0 8 0 8 0 8 1 8 0 8 0 8 0 8 0 8 0 8 0 8 0 8 0 9 1 8 0 8 0 8 0 9 0 8 0 9 0 8 0 8 1 9 0 8 0 8 0 8 0M576 492l8 0 8 0 8 0 7 0 8 0 8 1 8 0 8 0 8 0 8 0 9 0 8 0 8 0 8 1 8 0 8 0 8 0 9 0 8 0 8 0 8 0 8 1 8 0 8 0 8 0 8 0 8 0 8 0 8 0 8 1 8 0 8 0 8 0 9 0 8 0 8 0 9 0 8 1 9 0 8 0 8 0 8 0 9 0 8 0 8 0M576 503l8 0 8 0 8 1 7 0 8 0 8 0 8 0 8 0 8 0 8 0 9 1 8 0 8 0 8 0 8 0 8 0 8 0 9 0 8 0 8 1 8 0 8 0 8 0 8 0 8 0 8 0 8 0 8 1 8 0 8 0 8 0 8 0 8 0 8 0 9 0 8 1 8 0 9 0 8 0 9 0 8 0 8 0 8 0 9 1 8 0M577 515l7 0 8 0 8 0 7 0 8 0 8 0 8 0 8 0 8 1 9 0 8 0 8 0 8 0 8 0 8 0 8 0 9 1 8 0 8 0 8 0 8 0 8 0 8 0 8 0 8 1 8 0 8 0 8 0 8 0 8 0 8 0 8 0 8 0 8 1 8 0 9 0 8 0 9 0 8 0 8 0 9 0 8 1 8 0 8 0 9 0M577 526l7 0 8 0 8 0 7 0 8 0 8 1 8 0 8 0 9 0 8 0 8 0 8 0 8 0 8 0 8 1 8 0 9 0 8 0 8 0 8 0 8 0 8 0 8 1 8 0 8 0 8 0 8 0 8 0 8 0 8 0 8 1 8 0 8 0 8 0 8 0 9 0 8 0 8 0 9 1 8 0 8 0 9 0 8 0 8 0 8 0M577 537l7 0 8 0 8 0 8 1 7 0 8 0 8 0 8 0 9 0 8 0 8 0 8 1 8 0 8 0 8 0 8 0 9 0 8 0 8 0 8 1 8 0 8 0 8 0 8 0 8 0 8 0 8 0 8 0 8 1 8 0 8 0 8 0 8 0 8 0 8 0 9 0 8 1 8 0 9 0 8 0 8 0 8 0 9 0 8 0 8 1M577 548l8 1 7 0 8 0 8 0 7 0 8 0 8 0 9 0 8 0 8 1 8 0 8 0 8 0 8 0 8 0 8 0 9 0 8 1 8 0 8 0 8 0 8 0 8 0 8 0 8 0 8 1 8 0 8 0 8 0 7 0 9 0 8 0 8 0 8 0 8 1 8 0 9 0 8 0 8 0 9 0 8 0 8 0 8 1 8 0 9 0M577 560l8 0 7 0 8 0 8 0 7 0 8 0 9 1 8 0 8 0 8 0 8 0 8 0 8 0 8 0 8 1 9 0 8 0 8 0 8 0 8 0 9 0 7 0 8 0 8 1 8 0 8 0 8 0 8 0 8 0 7 0 8 0 9 1 8 0 8 0 8 0 8 0 9 0 8 0 8 0 9 1 8 0 8 0 8 0 8 0 8 0M577 571l8 0 7 0 8 0 8 0 7 1 9 0 8 0 8 0 8 0 8 0 8 0 8 0 8 1 8 0 8 0 9 0 8 0 8 0 8 0 8 0 9 1 8 0 7 0 8 0 8 0 8 0 8 0 8 0 8 0 7 1 8 0 8 0 9 0 8 0 8 0 8 0 8 0 9 1 8 0 8 0 8 0 9 0 8 0 8 0 8 0M577 582l8 0 7 1 8 0 8 0 8 0 8 0 8 0 8 0 8 0 8 0 8 1 8 0 8 0 8 0 8 0 9 0 8 0 8 0 8 1 9 0 8 0 8 0 7 0 8 0 8 0 8 0 8 1 8 0 7 0 8 0 8 0 8 0 8 0 9 0 8 1 8 0 8 0 9 0 8 0 8 0 8 0 8 0 8 0 9 1 8 0M577 594l8 0 8 0 7 0 8 0 8 0 8 0 8 0 8 1 8 0 8 0 8 0 8 0 8 0 8 0 9 0 8 1 8 0 8 0 8 0 9 0 8 0 8 0 8 0 7 1 8 0 8 0 8 0 8 0 7 0 8 0 8 0 8 0 8 1 8 0 8 0 9 0 8 0 8 0 9 0 8 0 8 1 8 0 8 0 8 0 8 0M577 605l8 0 8 0 7 0 8 0 8 0 8 1 8 0 8 0 8 0 8 0 8 0 8 0 8 0 8 1 9 0 8 0 8 0 8 0 8 0 9 0 8 0 8 1 8 0 7 0 8 0 8 0 8 0 8 0 7 0 8 1 8 0 8 0 8 0 8 0 8 0 9 0 8 0 8 0 8 1 9 0 8 0 8 0 8 0 8 0 8 0M577 616l8 0 8 0 7 1 8 0 8 0 8 0 8 0 8 0 8 0 8 0 8 1 8 0 8 0 9 0 8 0 8 0 8 0 8 0 9 1 8 0 8 0 8 0 8 0 7 0 8 0 8 0 8 0 8 1 7 0 8 0 8 0 8 0 8 0 8 0 8 0 8 1 9 0 8 0 8 0 8 0 8 0 9 0 8 0 8 1 8 0M577 628l8 0 8 0 7 0 8 0 8 0 8 0 8 0 8 0 8 1 8 0 8 0 8 0 9 0 8 0 8 0 8 0 8 1 8 0 9 0 8 0 8 0 8 0 8 0 7 0 8 1 8 0 8 0 7 0 8 0 8 0 8 0 8 0 8 0 8 1 8 0 8 0 8 0 9 0 8 0 8 0 8 0 8 1 8 0 8 0 9 0M577 639l8 0 8 0 8 0 7 0 8 0 8 1 8 0 8 0 8 0 8 0 8 0 8 0 9 0 8 0 8 1 8 0 8 0 8 0 9 0 8 0 8 0 8 0 8 1 7 0 8 0 8 0 8 0 7 0 8 0 8 0 8 1 8 0 8 0 8 0 8 0 8 0 8 0 9 0 8 0 8 1 8 0 8 0 8 0 8 0 8 0M578 650l7 0 8 0 8 0 7 1 8 0 8 0 8 0 8 0 8 0 8 0 8 0 9 1 8 0 8 0 8 0 8 0 8 0 8 0 9 0 8 1 8 0 8 0 8 0 7 0 8 0 8 0 8 0 7 0 8 1 8 0 8 0 8 0 8 0 8 0 8 0 8 0 8 1 8 0 9 0 8 0 8 0 8 0 8 0 8 0 8 1M578 661l7 1 8 0 8 0 7 0 8 0 8 0 8 0 8 0 8 0 8 1 9 0 8 0 8 0 8 0 8 0 8 0 8 0 9 1 8 0 8 0 8 0 8 0 8 0 7 0 8 0 8 1 8 0 7 0 8 0 8 0 8 0 8 0 8 0 8 0 8 1 8 0 8 0 8 0 8 0 8 0 9 0 8 0 8 1 8 0 8 0M578 673l7 0 8 0 8 0 7 0 8 0 8 0 8 1 8 0 8 0 9 0 8 0 8 0 8 0 8 0 8 1 8 0 8 0 9 0 8 0 8 0 8 0 8 0 8 0 7 1 8 0 8 0 8 0 7 0 8 0 8 0 8 0 8 1 7 0 8 0 8 0 9 0 8 0 8 0 8 0 8 1 8 0 8 0 8 0 8 0 8 0M578 684l7 0 8 0 8 0 8 0 7 1 8 0 8 0 8 0 9 0 8 0 8 0 8 0 8 1 8 0 8 0 8 0 8 0 9 0 8 0 8 0 8 1 8 0 8 0 7 0 8 0 8 0 8 0 7 0 8 0 8 1 7 0 8 0 8 0 8 0 8 0 8 0 9 0 8 1 8 0 8 0 8 0 8 0 8 0 8 0 8 0M578 695l8 0 7 1 8 0 8 0 7 0 8 0 8 0 9 0 8 0 8 1 8 0 8 0 8 0 8 0 8 0 8 0 9 0 8 0 8 1 8 0 8 0 8 0 8 0 7 0 8 0 8 0 8 1 7 0 8 0 7 0 8 0 8 0 8 0 8 0 8 0 8 1 8 0 9 0 8 0 8 0 8 0 8 0 8 0 8 1 8 0M578 707l8 0 7 0 8 0 8 0 7 0 8 0 9 0 8 1 8 0 8 0 8 0 8 0 8 0 8 0 8 0 8 1 9 0 8 0 8 0 8 0 8 0 8 0 8 0 7 1 8 0 8 0 8 0 7 0 8 0 7 0 8 0 8 0 8 1 8 0 8 0 8 0 8 0 8 0 8 0 9 0 8 1 8 0 7 0 8 0 8 0M578 718l8 0 7 0 8 0 8 0 7 1 9 0 8 0 8 0 8 0 8 0 8 0 8 0 8 0 8 1 8 0 8 0 9 0 8 0 8 0 8 0 8 0 8 1 8 0 7 0 8 0 8 0 7 0 8 0 8 0 7 0 8 1 8 0 8 0 8 0 8 0 8 0 8 0 8 0 8 1 8 0 8 0 8 0 8 0 8 0 8 0M578 729l8 0 7 0 8 1 8 0 8 0 8 0 8 0 8 0 8 0 8 0 8 1 8 0 8 0 8 0 8 0 8 0 9 0 8 0 8 1 8 0 8 0 8 0 8 0 7 0 8 0 8 0 7 0 8 1 8 0 7 0 8 0 8 0 8 0 8 0 8 0 8 1 8 0 8 0 8 0 8 0 8 0 8 0 8 0 8 0 8 1M575 232l0 11 0 12 0 11 0 11 0 11 0 12 0 11 0 11 0 12 0 11 0 11 0 12 1 11 0 11 0 11 0 12 0 11 0 11 0 12 0 11 0 11 0 12 0 11 0 11 1 12 0 11 0 11 0 11 0 12 0 11 0 11 0 12 0 11 0 11 0 12 0 11 1 11 0 11 0 12 0 11 0 11 0 12 0 11 0 11M582 232l0 11 0 12 0 11 1 11 0 12 0 11 0 11 0 12 0 11 0 11 0 11 0 12 0 11 0 11 0 12 1 11 0 11 0 12 0 11 0 11 0 11 0 12 0 11 0 11 0 12 0 11 0 11 1 12 0 11 0 11 0 11 0 12 0 11 0 11 0 12 0 11 0 11 0 12 0 11 0 11 1 11 0 12 0 11 0 11M590 232l0 12 0 11 0 11 0 11 0 12 0 11 1 11 0 12 0 11 0 11 0 12 0 11 0 11 0 11 0 12 0 11 0 11 0 12 0 11 1 11 0 12 0 11 0 11 0 11 0 12 0 11 0 11 0 12 0 11 0 11 0 12 1 11 0 11 0 11 0 12 0 11 0 11 0 12 0 11 0 11 0 12 0 11 0 11 0 11M598 232l0 12 0 11 0 11 0 12 0 11 0 11 0 11 0 12 0 11 0 11 1 12 0 11 0 11 0 12 0 11 0 11 0 11 0 12 0 11 0 11 0 12 0 11 1 11 0 12 0 11 0 11 0 11 0 12 0 11 0 11 0 12 0 11 0 11 0 12 0 11 1 11 0 11 0 12 0 11 0 11 0 12 0 11 0 11 0 12M605 232l1 12 0 11 0 11 0 12 0 11 0 11 0 12 0 11 0 11 0 11 0 12 0 11 0 11 1 12 0 11 0 11 0 12 0 11 0 11 0 11 0 12 0 11 0 11 0 12 0 11 0 11 1 12 0 11 0 11 0 11 0 12 0 11 0 11 0 12 0 11 0 11 0 12 0 11 0 11 1 11 0 12 0 11 0 11 0 12M613 233l0 11 0 11 0 11 0 12 1 11 0 11 0 12 0 11 0 11 0 12 0 11 0 11 0 11 0 12 0 11 0 11 0 12 1 11 0 11 0 12 0 11 0 11 0 11 0 12 0 11 0 11 0 12 0 11 0 11 0 12 1 11 0 11 0 11 0 12 0 11 0 11 0 12 0 11 0 11 0 12 0 11 0 11 0 12 1 11M621 233l0 11 0 11 1 12 0 11 0 11 0 11 0 12 0 11 0 11 0 12 0 11 0 11 0 12 0 11 0 11 0 11 1 12 0 11 0 11 0 12 0 11 0 11 0 12 0 11 0 11 0 12 0 11 0 11 0 11 1 12 0 11 0 11 0 12 0 11 0 11 0 12 0 11 0 11 0 11 0 12 0 11 0 11 1 12 0 11M629 233l0 11 1 11 0 12 0 11 0 11 0 12 0 11 0 11 0 12 0 11 0 11 0 11 0 12 0 11 1 11 0 12 0 11 0 11 0 12 0 11 0 11 0 11 0 12 0 11 0 11 0 12 0 11 0 11 1 12 0 11 0 11 0 11 0 12 0 11 0 11 0 12 0 11 0 11 0 12 0 11 0 11 1 11 0 12 0 11M638 233l0 11 0 12 0 11 0 11 0 11 0 12 0 11 0 11 0 12 0 11 0 11 0 12 0 11 1 11 0 11 0 12 0 11 0 11 0 12 0 11 0 11 0 12 0 11 0 11 0 11 0 12 0 11 1 11 0 12 0 11 0 11 0 12 0 11 0 11 0 11 0 12 0 11 0 11 0 12 0 11 1 11 0 12 0 11 0 11M646 233l0 11 0 12 0 11 0 11 0 12 0 11 0 11 0 11 0 12 0 11 0 11 1 12 0 11 0 11 0 12 0 11 0 11 0 11 0 12 0 11 0 11 0 12 0 11 0 11 0 12 1 11 0 11 0 11 0 12 0 11 0 11 0 12 0 11 0 11 0 12 0 11 0 11 0 11 0 12 1 11 0 11 0 12 0 11 0 11M654 233l0 11 0 12 0 11 0 11 0 12 0 11 0 11 0 12 0 11 0 11 1 11 0 12 0 11 0 11 0 12 0 11 0 11 0 12 0 11 0 11 0 11 0 12 0 11 0 11 1 12 0 11 0 11 0 12 0 11 0 11 0 11 0 12 0 11 0 11 0 12 0 11 0 11 0 12 1 11 0 11 0 12 0 11 0 11 0 11M662 233l0 12 0 11 0 11 0 11 0 12 0 11 0 11 0 12 1 11 0 11 0 12 0 11 0 11 0 12 0 11 0 11 0 11 0 12 0 11 0 11 0 12 0 11 1 11 0 12 0 11 0 11 0 11 0 12 0 11 0 11 0 12 0 11 0 11 0 12 0 11 0 11 0 11 1 12 0 11 0 11 0 12 0 11 0 11 0 12M670 233l0 12 0 11 0 11 0 12 0 11 0 11 1 12 0 11 0 11 0 11 0 12 0 11 0 11 0 12 0 11 0 11 0 12 0 11 0 11 0 11 0 12 1 11 0 11 0 12 0 11 0 11 0 12 0 11 0 11 0 11 0 12 0 11 0 11 0 12 0 11 0 11 1 12 0 11 0 11 0 11 0 12 0 11 0 11 0 12M678 234l0 11 0 11 0 11 0 12 1 11 0 11 0 12 0 11 0 11 0 12 0 11 0 11 0 11 0 12 0 11 0 11 0 12 0 11 0 11 1 12 0 11 0 11 0 11 0 12 0 11 0 11 0 12 0 11 0 11 0 12 0 11 0 11 0 11 0 12 1 11 0 11 0 12 0 11 0 11 0 12 0 11 0 11 0 11 0 12M686 234l0 11 0 11 1 12 0 11 0 11 0 11 0 12 0 11 0 11 0 12 0 11 0 11 0 12 0 11 0 11 0 11 0 12 1 11 0 11 0 12 0 11 0 11 0 12 0 11 0 11 0 11 0 12 0 11 0 11 0 12 0 11 0 11 0 12 1 11 0 11 0 11 0 12 0 11 0 11 0 12 0 11 0 11 0 12 0 11M694 234l1 11 0 11 0 12 0 11 0 11 0 12 0 11 0 11 0 11 0 12 0 11 0 11 0 12 0 11 0 11 1 12 0 11 0 11 0 11 0 12 0 11 0 11 0 12 0 11 0 11 0 12 0 11 0 11 0 12 0 11 0 11 1 11 0 12 0 11 0 11 0 12 0 11 0 11 0 12 0 11 0 11 0 11 0 12 0 11M703 234l0 11 0 12 0 11 0 11 0 11 0 12 0 11 0 11 0 12 0 11 0 11 0 12 1 11 0 11 0 11 0 12 0 11 0 11 0 12 0 11 0 11 0 12 0 11 0 11 0 11 0 12 0 11 0 11 1 12 0 11 0 11 0 12 0 11 0 11 0 11 0 12 0 11 0 11 0 12 0 11 0 11 0 12 0 11 0 11M711 234l0 11 0 12 0 11 0 11 0 12 0 11 0 11 0 11 1 12 0 11 0 11 0 12 0 11 0 11 0 12 0 11 0 11 0 11 0 12 0 11 0 11 0 12 0 11 0 11 1 12 0 11 0 11 0 11 0 12 0 11 0 11 0 12 0 11 0 11 0 12 0 11 0 11 0 11 0 12 0 11 1 11 0 12 0 11 0 11M719 234l0 11 0 12 0 11 0 11 1 12 0 11 0 11 0 12 0 11 0 11 0 11 0 12 0 11 0 11 0 12 0 11 0 11 0 12 0 11 0 11 1 11 0 12 0 11 0 11 0 12 0 11 0 11 0 12 0 11 0 11 0 11 0 12 0 11 0 11 0 12 0 11 0 11 1 12 0 11 0 11 0 11 0 12 0 11 0 11M728 234l0 12 0 11 0 11 0 11 0 12 0 11 0 11 0 12 0 11 0 11 0 12 0 11 0 11 0 11 0 12 0 11 1 11 0 12 0 11 0 11 0 12 0 11 0 11 0 11 0 12 0 11 0 11 0 12 0 11 0 11 0 12 0 11 0 11 1 12 0 11 0 11 0 11 0 12 0 11 0 11 0 12 0 11 0 11 0 12M736 234l0 12 0 11 0 11 0 12 0 11 0 11 0 12 0 11 0 11 0 11 0 12 0 11 1 11 0 12 0 11 0 11 0 12 0 11 0 11 0 11 0 12 0 11 0 11 0 12 0 11 0 11 0 12 0 11 0 11 0 11 1 12 0 11 0 11 0 12 0 11 0 11 0 12 0 11 0 11 0 11 0 12 0 11 0 11 0 12M744 235l0 11 0 11 0 11 0 12 0 11 0 11 0 12 0 11 1 11 0 12 0 11 0 11 0 11 0 12 0 11 0 11 0 12 0 11 0 11 0 12 0 11 0 11 0 11 0 12 0 11 0 11 0 12 0 11 1 11 0 12 0 11 0 11 0 11 0 12 0 11 0 11 0 12 0 11 0 11 0 12 0 11 0 11 0 11 0 12M752 235l1 11 0 11 0 12 0 11 0 11 0 11 0 12 0 11 0 11 0 12 0 11 0 11 0 12 0 11 0 11 0 11 0 12 0 11 0 11 0 12 0 11 0 11 0 12 0 11 0 11 0 11 0 12 0 11 0 11 1 12 0 11 0 11 0 12 0 11 0 11 0 11 0 12 0 11 0 11 0 12 0 11 0 11 0 12 0 11M761 235l0 11 0 11 0 12 0 11 0 11 0 12 0 11 0 11 0 11 0 12 0 11 0 11 0 12 0 11 0 11 0 12 0 11 0 11 0 11 0 12 0 11 0 11 0 12 0 11 0 11 0 12 0 11 0 11 0 11 0 12 0 11 1 11 0 12 0 11 0 11 0 12 0 11 0 11 0 11 0 12 0 11 0 11 0 12 0 11M769 235l0 11 0 11 0 12 0 11 0 11 0 12 0 11 0 11 0 12 0 11 0 11 0 11 0 12 0 11 0 11 0 12 0 11 0 11 0 12 0 11 0 11 0 12 0 11 0 11 0 11 0 12 0 11 0 11 0 12 0 11 0 11 0 12 0 11 0 11 0 11 0 12 0 11 0 11 0 12 0 11 0 11 0 12 0 11 0 11M778 235l0 11 0 12 0 11 0 11 0 12 0 11 0 11 0 11 0 12-1 11 0 11 0 12 0 11 0 11 0 12 0 11 0 11 0 11 0 12 0 11 0 11 0 12 0 11 0 11 0 12 0 11 0 11 0 11 0 12 0 11 0 11 0 12 0 11 0 11 0 12 0 11 0 11 0 11 0 12 0 11 0 11 0 12 0 11 0 11M786 235l0 11 0 12 0 11 0 11 0 12 0 11 0 11 0 12 0 11 0 11 0 11 0 12 0 11-1 11 0 12 0 11 0 11 0 12 0 11 0 11 0 11 0 12 0 11 0 11 0 12 0 11 0 11 0 12 0 11 0 11 0 11 0 12 0 11 0 11 0 12 0 11 0 11 0 12 0 11 0 11 0 11 0 12 0 11 0 11M794 235l0 12 0 11 0 11 0 11 0 12 0 11 0 11 0 12 0 11 0 11 0 12 0 11 0 11 0 11-1 12 0 11 0 11 0 12 0 11 0 11 0 12 0 11 0 11 0 11 0 12 0 11 0 11 0 12 0 11 0 11 0 12 0 11 0 11 0 11 0 12 0 11 0 11 0 12 0 11 0 11 0 12 0 11-1 11 0 11M802 235l0 12 0 11 0 11 0 12 0 11 0 11 0 11 0 12 0 11 0 11 0 12 0 11 0 11 0 12-1 11 0 11 0 11 0 12 0 11 0 11 0 12 0 11 0 11 0 12 0 11 0 11 0 11 0 12 0 11 0 11 0 12 0 11 0 11 0 12-1 11 0 11 0 11 0 12 0 11 0 11 0 12 0 11 0 11 0 12M810 236l0 11 0 11 0 11 0 12 0 11 0 11 0 12 0 11 0 11 0 12 0 11 0 11 0 11 0 12-1 11 0 11 0 12 0 11 0 11 0 11 0 12 0 11 0 11 0 12 0 11 0 11 0 12 0 11 0 11 0 11-1 12 0 11 0 11 0 12 0 11 0 11 0 12 0 11 0 11 0 11 0 12 0 11 0 11 0 12M819 236l0 11-1 11 0 12 0 11 0 11 0 11 0 12 0 11 0 11 0 12 0 11 0 11 0 12 0 11-1 11 0 11 0 12 0 11 0 11 0 12 0 11 0 11 0 12 0 11 0 11 0 11 0 12-1 11 0 11 0 12 0 11 0 11 0 12 0 11 0 11 0 11 0 12 0 11 0 11 0 12-1 11 0 11 0 11 0 12M827 236l0 11 0 11 0 12 0 11 0 11 0 12 0 11-1 11 0 11 0 12 0 11 0 11 0 12 0 11 0 11 0 12 0 11 0 11-1 11 0 12 0 11 0 11 0 12 0 11 0 11 0 12 0 11 0 11-1 11 0 12 0 11 0 11 0 12 0 11 0 11 0 12 0 11 0 11 0 11-1 12 0 11 0 11 0 12 0 11M836 236l0 11-1 11 0 12 0 11 0 11 0 12 0 11 0 11 0 12 0 11 0 11-1 11 0 12 0 11 0 11 0 12 0 11 0 11 0 12 0 11-1 11 0 11 0 12 0 11 0 11 0 12 0 11 0 11 0 12-1 11 0 11 0 11 0 12 0 11 0 11 0 12 0 11 0 11 0 12-1 11 0 11 0 11 0 12 0 11M844 236l0 11 0 12 0 11 0 11 0 12 0 11-1 11 0 11 0 12 0 11 0 11 0 12 0 11 0 11-1 11 0 12 0 11 0 11 0 12 0 11 0 11 0 12-1 11 0 11 0 11 0 12 0 11 0 11 0 12 0 11-1 11 0 12 0 11 0 11 0 11 0 12 0 11 0 11-1 12 0 11 0 11 0 12 0 11 0 11M853 236l0 11-1 12 0 11 0 11 0 12 0 11 0 11 0 12 0 11-1 11 0 11 0 12 0 11 0 11 0 12 0 11-1 11 0 12 0 11 0 11 0 11 0 12 0 11-1 11 0 12 0 11 0 11 0 11 0 12 0 11 0 11-1 12 0 11 0 11 0 12 0 11 0 11 0 11-1 12 0 11 0 11 0 12 0 11 0 11M861 236l0 12 0 11 0 11 0 11 0 12-1 11 0 11 0 12 0 11 0 11 0 12-1 11 0 11 0 11 0 12 0 11 0 11 0 12-1 11 0 11 0 12 0 11 0 11 0 11-1 12 0 11 0 11 0 12 0 11 0 11 0 12-1 11 0 11 0 11 0 12 0 11 0 11 0 12-1 11 0 11 0 11 0 12 0 11 0 11M870 236l0 12 0 11 0 11-1 12 0 11 0 11 0 11 0 12 0 11-1 11 0 12 0 11 0 11 0 12 0 11-1 11 0 11 0 12 0 11 0 11 0 12-1 11 0 11 0 12 0 11 0 11 0 11-1 12 0 11 0 11 0 12 0 11 0 11-1 12 0 11 0 11 0 11 0 12 0 11-1 11 0 12 0 11 0 11 0 12M879 237l0 11-1 11 0 11 0 12 0 11 0 11 0 12-1 11 0 11 0 12 0 11 0 11-1 11 0 12 0 11 0 11 0 12 0 11-1 11 0 11 0 12 0 11 0 11-1 12 0 11 0 11 0 12 0 11 0 11-1 11 0 12 0 11 0 11 0 12-1 11 0 11 0 12 0 11 0 11 0 11-1 12 0 11 0 11 0 12M888 237l-1 11 0 11 0 12 0 11 0 11-1 11 0 12 0 11 0 11 0 12-1 11 0 11 0 12 0 11 0 11-1 11 0 12 0 11 0 11 0 12-1 11 0 11 0 12 0 11 0 11-1 11 0 12 0 11 0 11 0 12 0 11-1 11 0 11 0 12 0 11 0 11-1 12 0 11 0 11 0 12 0 11-1 11 0 11 0 12M896 237l0 11 0 11 0 12 0 11-1 11 0 12 0 11 0 11-1 11 0 12 0 11 0 11 0 12-1 11 0 11 0 12 0 11 0 11-1 11 0 12 0 11 0 11 0 12-1 11 0 11 0 12 0 11-1 11 0 11 0 12 0 11 0 11-1 12 0 11 0 11 0 11 0 12-1 11 0 11 0 12 0 11-1 11 0 12 0 11M905 237l0 11 0 12-1 11 0 11 0 11 0 12 0 11-1 11 0 12 0 11 0 11-1 11 0 12 0 11 0 11 0 12-1 11 0 11 0 12 0 11-1 11 0 11 0 12 0 11-1 11 0 12 0 11 0 11 0 12-1 11 0 11 0 11 0 12-1 11 0 11 0 12 0 11-1 11 0 12 0 11 0 11 0 11-1 12 0 11M914 237l0 11-1 12 0 11 0 11 0 12-1 11 0 11 0 11 0 12-1 11 0 11 0 12 0 11-1 11 0 12 0 11 0 11-1 11 0 12 0 11 0 11-1 12 0 11 0 11 0 11-1 12 0 11 0 11 0 12-1 11 0 11 0 12 0 11-1 11 0 11 0 12 0 11 0 11-1 12 0 11 0 11 0 12-1 11 0 11M922 237l0 11 0 12 0 11-1 11 0 12 0 11 0 11-1 12 0 11 0 11 0 11-1 12 0 11 0 11-1 12 0 11 0 11 0 12-1 11 0 11 0 11 0 12-1 11 0 11 0 12 0 11-1 11 0 11 0 12 0 11-1 11 0 12 0 11 0 11-1 12 0 11 0 11 0 11-1 12 0 11 0 11 0 12-1 11 0 11M931 237l0 12-1 11 0 11 0 12 0 11-1 11 0 11 0 12-1 11 0 11 0 12 0 11-1 11 0 11 0 12 0 11-1 11 0 12 0 11-1 11 0 12 0 11 0 11-1 11 0 12 0 11 0 11-1 12 0 11 0 11-1 11 0 12 0 11 0 11-1 12 0 11 0 11 0 12-1 11 0 11 0 11-1 12 0 11 0 11M940 237l-1 12 0 11 0 11-1 12 0 11 0 11 0 12-1 11 0 11 0 11-1 12 0 11 0 11 0 12-1 11 0 11 0 11-1 12 0 11 0 11-1 12 0 11 0 11 0 12-1 11 0 11 0 11-1 12 0 11 0 11 0 12-1 11 0 11 0 12-1 11 0 11 0 11 0 12-1 11 0 11 0 12-1 11 0 11 0 11M948 238l0 11 0 11-1 11 0 12 0 11-1 11 0 12 0 11-1 11 0 12 0 11-1 11 0 11 0 12 0 11-1 11 0 12 0 11-1 11 0 11 0 12-1 11 0 11 0 12 0 11-1 11 0 12 0 11-1 11 0 11 0 12-1 11 0 11 0 12 0 11-1 11 0 12 0 11-1 11 0 11 0 12-1 11 0 11 0 12M582 232l-7 11M590 232l-8 11-7 12M598 232l-8 12-8 11-7 11M605 232l-7 12-8 11-8 11-7 11M613 233l-7 11-8 11-8 11-7 11-8 11M621 233l-8 11-7 11-8 11-8 11-7 12-8 11M629 233l-8 11-8 11-7 11-8 12-8 11-7 11-8 11M638 233l-9 11-8 11-8 11-7 12-8 11-8 11-7 11-8 11M646 233l-8 11-8 11-8 12-9 11-7 11-8 11-7 11-8 12-8 11M654 233l-8 11-8 12-8 11-8 11-8 11-8 11-8 11-7 12-8 11-8 11M662 233l-8 11-8 12-8 11-8 11-8 11-8 11-8 12-8 11-7 11-8 11-8 11M670 233l-8 12-8 11-8 11-8 11-8 11-8 11-8 12-8 11-8 11-7 11-8 11-8 12M678 234l-8 11-8 11-8 11-8 11-8 11-8 12-8 11-8 11-8 11-8 11-7 12-8 11-7 11M686 234l-8 11-8 11-8 11-8 11-8 12-8 11-8 11-8 11-8 11-8 11-7 12-8 11-8 11-7 11M694 234l-8 11-8 11-8 11-8 11-8 12-8 11-8 11-8 11-8 11-8 12-8 11-7 11-8 11-8 11-7 11M703 234l-8 11-9 11-8 11-8 12-8 11-8 11-8 11-8 11-8 12-8 11-8 11-8 11-7 11-8 11-8 12-7 11M711 234l-8 11-8 11-8 12-9 11-8 11-8 11-8 11-8 11-8 12-8 11-8 11-8 11-8 11-7 12-8 11-7 11-8 11M719 234l-8 11-8 12-8 11-8 11-8 11-9 11-8 11-8 12-8 11-8 11-8 11-8 11-8 11-7 12-8 11-8 11-7 11-8 11M728 234l-9 11-8 12-8 11-8 11-8 11-8 11-8 12-9 11-8 11-8 11-8 11-8 11-8 12-8 11-7 11-8 11-8 11-7 12-8 11M736 234l-8 12-9 11-8 11-8 11-8 11-8 11-8 12-8 11-8 11-9 11-8 11-8 12-8 11-8 11-8 11-7 11-8 11-8 12-7 11-8 11M744 235l-8 11-8 11-9 11-8 11-8 11-8 12-8 11-8 11-8 11-8 11-8 11-8 12-9 11-8 11-8 11-8 11-7 12-8 11-8 11-7 11-8 11M752 235l-8 11-8 11-8 11-9 11-8 12-8 11-8 11-8 11-8 11-8 11-8 12-8 11-8 11-8 11-8 11-9 11-8 12-7 11-8 11-7 11-8 11-8 12M761 235l-8 11-9 11-8 11-8 11-8 12-9 11-8 11-8 11-8 11-8 12-8 11-8 11-8 11-8 11-8 11-8 12-8 11-8 11-8 11-8 11-7 12-8 11-8 11M769 235l-8 11-8 11-9 11-8 12-8 11-8 11-9 11-8 11-8 11-8 12-8 11-8 11-8 11-8 11-8 12-8 11-8 11-8 11-8 11-8 11-8 12-7 11-8 11-8 11M778 235l-9 11-8 11-8 12-9 11-8 11-8 11-8 11-9 11-8 12-8 11-8 11-8 11-8 11-8 12-8 11-8 11-8 11-8 11-8 11-8 12-8 11-8 11-7 11-8 11-7 12M786 235l-8 11-9 11-8 12-8 11-9 11-8 11-8 11-8 12-8 11-9 11-8 11-8 11-8 11-8 12-8 11-8 11-8 11-8 11-8 12-8 11-8 11-8 11-7 11-8 11-8 12-7 11M794 235l-8 11-8 12-9 11-8 11-8 11-9 11-8 12-8 11-8 11-8 11-9 11-8 11-8 12-8 11-8 11-8 11-8 11-8 11-8 12-8 11-8 11-8 11-8 11-7 12-8 11-8 11-7 11M802 235l-8 12-8 11-8 11-9 11-8 11-8 11-9 12-8 11-8 11-8 11-8 11-9 12-8 11-8 11-8 11-8 11-8 11-8 12-8 11-8 11-8 11-8 11-8 11-8 12-7 11-8 11-8 11-7 11M810 236l-8 11-8 11-8 11-8 11-9 11-8 12-8 11-9 11-8 11-8 11-8 11-8 12-8 11-9 11-8 11-8 11-8 12-8 11-8 11-8 11-8 11-8 11-8 12-8 11-8 11-7 11-8 11-7 12-8 11M819 236l-9 11-8 11-8 11-8 11-8 12-9 11-8 11-8 11-8 11-9 11-8 12-8 11-8 11-8 11-9 11-8 11-8 12-8 11-8 11-8 11-8 11-8 12-8 11-8 11-8 11-8 11-7 11-8 12-7 11-8 11M827 236l-8 11-9 11-8 11-8 11-8 12-8 11-9 11-8 11-8 11-8 12-9 11-8 11-8 11-8 11-8 11-8 12-9 11-8 11-8 11-8 11-8 11-8 12-8 11-8 11-8 11-8 11-7 12-8 11-8 11-7 11-8 11M836 236l-9 11-9 11-8 11-8 12-8 11-8 11-8 11-9 11-8 11-8 12-8 11-9 11-8 11-8 11-8 12-8 11-8 11-8 11-9 11-8 11-8 12-8 11-8 11-8 11-8 11-8 12-8 11-7 11-8 11-8 11-7 11-8 12M844 236l-8 11-9 11-9 12-8 11-8 11-8 11-8 11-8 11-9 12-8 11-8 11-8 11-8 11-9 11-8 12-8 11-8 11-8 11-8 11-8 12-9 11-8 11-8 11-8 11-8 11-8 12-8 11-8 11-7 11-8 11-8 12-7 11-8 11M853 236l-9 11-9 11-8 12-9 11-8 11-8 11-8 11-8 12-8 11-9 11-8 11-8 11-8 11-8 12-9 11-8 11-8 11-8 11-8 11-8 12-8 11-8 11-8 11-9 11-8 12-8 11-8 11-8 11-8 11-7 11-8 12-7 11-8 11-8 11M861 236l-8 11-9 12-9 11-8 11-9 11-8 11-8 11-8 12-8 11-9 11-8 11-8 11-8 12-8 11-8 11-9 11-8 11-8 11-8 12-8 11-8 11-8 11-8 11-8 12-8 11-8 11-9 11-8 11-8 11-8 12-7 11-8 11-7 11-8 11-8 12M870 236l-9 12-9 11-8 11-9 11-8 11-9 11-8 12-8 11-8 11-8 11-9 11-8 11-8 12-8 11-8 11-8 11-8 11-9 12-8 11-8 11-8 11-8 11-8 11-8 12-8 11-8 11-8 11-8 11-8 12-8 11-8 11-8 11-8 11-7 11-8 12-8 11M879 237l-9 11-9 11-9 11-8 11-9 11-8 12-9 11-8 11-8 11-8 11-8 11-9 12-8 11-8 11-8 11-8 11-8 12-8 11-9 11-8 11-8 11-8 11-8 12-8 11-8 11-8 11-8 11-8 11-8 12-8 11-8 11-8 11-8 11-8 12-7 11-8 11-7 11M888 237l-9 11-9 11-9 11-9 11-8 12-9 11-8 11-9 11-8 11-8 11-8 12-8 11-9 11-8 11-8 11-8 11-8 12-8 11-8 11-9 11-8 11-8 12-8 11-8 11-8 11-8 11-8 11-8 12-8 11-8 11-8 11-8 11-8 11-8 12-8 11-7 11-8 11-7 11M896 237l-9 11-9 11-8 11-9 11-9 12-8 11-9 11-9 11-8 11-8 12-8 11-8 11-8 11-9 11-8 11-8 12-8 11-8 11-8 11-8 11-8 11-9 12-8 11-8 11-8 11-8 11-8 12-8 11-8 11-8 11-8 11-8 11-8 12-8 11-8 11-7 11-8 11-8 12-7 11M905 237l-9 11-9 11-9 11-9 12-8 11-9 11-9 11-8 11-9 11-8 12-8 11-8 11-8 11-9 11-8 12-8 11-8 11-8 11-8 11-8 11-8 12-8 11-9 11-8 11-8 11-8 11-8 12-8 11-8 11-8 11-8 11-8 12-8 11-8 11-8 11-8 11-7 11-8 12-8 11-7 11M914 237l-9 11-9 11-9 12-9 11-9 11-9 11-8 11-9 11-8 12-9 11-8 11-8 11-8 11-8 11-9 12-8 11-8 11-8 11-8 11-8 12-8 11-8 11-8 11-9 11-8 11-8 12-8 11-8 11-8 11-8 11-8 11-8 12-8 11-8 11-8 11-8 11-8 12-7 11-8 11-8 11-7 11M922 237l-8 11-9 12-9 11-9 11-9 11-9 11-9 11-8 12-9 11-8 11-9 11-8 11-8 11-8 12-9 11-8 11-8 11-8 11-8 11-8 12-8 11-8 11-8 11-8 11-8 12-9 11-8 11-8 11-8 11-8 11-8 12-8 11-8 11-8 11-8 11-8 12-8 11-8 11-7 11-8 11-7 11-8 12M931 237l-9 11-9 12-9 11-8 11-9 11-9 11-9 11-9 12-8 11-9 11-8 11-9 11-8 12-8 11-9 11-8 11-8 11-8 11-8 12-8 11-8 11-8 11-8 11-8 11-8 12-8 11-9 11-8 11-8 11-8 12-8 11-8 11-8 11-8 11-8 11-8 12-8 11-8 11-8 11-7 11-8 12-7 11-8 11M940 237l-9 12-9 11-9 11-9 11-9 11-9 11-8 12-9 11-9 11-9 11-8 11-9 11-8 12-8 11-9 11-8 11-8 11-8 12-8 11-8 11-8 11-8 11-8 11-8 12-8 11-8 11-8 11-9 11-8 12-8 11-8 11-8 11-8 11-8 11-8 12-8 11-8 11-8 11-8 11-7 11-8 12-8 11-7 11-8 11M948 238l-9 11-9 11-8 11-9 11-9 11-9 12-9 11-9 11-8 11-9 11-9 11-8 12-9 11-8 11-9 11-8 11-8 11-8 12-8 11-8 11-8 11-8 11-8 12-8 11-8 11-8 11-8 11-8 11-8 12-9 11-8 11-8 11-8 11-8 12-8 11-8 11-8 11-8 11-8 11-8 12-7 11-8 11-8 11-7 11M948 249l-9 11-9 11-9 11-8 12-9 11-9 11-9 11-9 11-9 11-8 12-9 11-8 11-9 11-8 11-9 11-8 12-8 11-8 11-8 11-8 11-8 12-8 11-8 11-8 11-8 11-8 11-8 12-8 11-8 11-9 11-8 11-8 11-8 12-8 11-8 11-8 11-8 11-8 12-8 11-8 11-7 11-8 11-8 11M948 260l-9 11-9 12-9 11-9 11-8 11-9 11-9 11-9 12-9 11-9 11-8 11-8 11-9 11-8 12-9 11-8 11-8 11-8 11-8 11-8 12-8 11-8 11-8 11-8 11-8 12-8 11-8 11-8 11-8 11-8 11-9 12-8 11-8 11-8 11-8 11-8 11-8 12-8 11-8 11-8 11-7 11-8 12M947 271l-9 12-8 11-9 11-9 11-9 11-9 11-8 12-9 11-9 11-9 11-8 11-9 11-8 12-8 11-9 11-8 11-8 11-8 12-8 11-8 11-8 11-8 11-8 11-8 12-8 11-8 11-8 11-8 11-8 12-8 11-8 11-8 11-9 11-8 11-8 12-8 11-8 11-8 11-8 11-8 12-7 11M947 283l-9 11-9 11-8 11-9 11-9 12-9 11-9 11-8 11-9 11-9 11-8 12-9 11-8 11-8 11-9 11-8 11-8 12-8 11-8 11-8 11-8 11-8 12-8 11-8 11-8 11-8 11-8 11-8 12-8 11-8 11-8 11-8 11-8 12-8 11-8 11-8 11-8 11-8 11-8 12-8 11M947 294l-9 11-9 11-9 12-8 11-9 11-9 11-9 11-9 11-8 12-9 11-8 11-9 11-8 11-9 11-8 12-8 11-8 11-8 11-8 11-8 12-8 11-8 11-8 11-7 11-9 11-8 12-8 11-8 11-8 11-8 11-8 11-8 12-8 11-8 11-8 11-8 11-8 12-8 11-8 11M946 305l-8 12-9 11-9 11-9 11-8 11-9 11-9 12-9 11-8 11-9 11-9 11-8 11-8 12-9 11-8 11-8 11-8 11-8 11-8 12-8 11-8 11-8 11-8 11-7 12-8 11-9 11-8 11-8 11-8 11-8 12-8 11-8 11-8 11-8 11-8 12-8 11-8 11-8 11M946 317l-9 11-9 11-8 11-9 11-9 11-8 12-9 11-9 11-9 11-8 11-9 12-8 11-8 11-9 11-8 11-8 11-8 12-8 11-8 11-8 11-8 11-8 11-7 12-8 11-8 11-9 11-8 11-8 12-8 11-8 11-8 11-8 11-8 11-8 12-8 11-8 11-8 11M946 328l-9 11-9 11-8 11-9 12-9 11-9 11-8 11-9 11-9 11-8 12-9 11-8 11-9 11-8 11-8 12-8 11-8 11-8 11-8 11-8 11-8 12-8 11-7 11-8 11-8 11-8 12-9 11-8 11-8 11-8 11-8 11-8 12-8 11-8 11-8 11-8 11M945 339l-8 11-9 12-9 11-8 11-9 11-9 11-9 11-8 12-9 11-9 11-8 11-8 11-9 11-8 12-8 11-8 11-8 11-8 11-8 12-8 11-8 11-8 11-7 11-8 11-8 12-8 11-9 11-8 11-8 11-8 12-8 11-8 11-8 11-8 11-8 11M945 351l-9 11-8 11-9 11-9 11-8 11-9 12-9 11-8 11-9 11-9 11-8 11-8 12-9 11-8 11-8 11-8 11-8 11-8 12-8 11-8 11-8 11-7 11-8 12-8 11-8 11-8 11-9 11-8 11-8 12-8 11-8 11-8 11-8 11-8 12M945 362l-9 11-9 11-8 11-9 12-8 11-9 11-9 11-9 11-8 11-9 12-8 11-9 11-8 11-8 11-8 11-8 12-8 11-8 11-8 11-8 11-8 12-7 11-8 11-8 11-8 11-8 11-8 12-9 11-8 11-8 11-8 11-8 11-8 12M944 373l-8 11-9 11-9 12-8 11-9 11-8 11-9 11-9 11-8 12-9 11-8 11-9 11-8 11-8 12-8 11-8 11-8 11-8 11-8 11-8 12-8 11-7 11-8 11-8 11-8 12-8 11-8 11-9 11-8 11-8 11-8 12-8 11M944 384l-8 12-9 11-9 11-8 11-9 11-9 11-8 12-9 11-9 11-8 11-9 11-8 11-8 12-8 11-9 11-7 11-8 11-8 12-8 11-8 11-8 11-7 11-8 11-8 12-8 11-8 11-8 11-8 11-9 12-8 11-8 11M944 396l-9 11-8 11-9 11-9 11-8 12-9 11-9 11-8 11-9 11-8 11-9 12-8 11-8 11-8 11-9 11-7 11-8 12-8 11-8 11-8 11-8 11-7 12-8 11-8 11-8 11-8 11-8 11-8 12-9 11-8 11M944 407l-9 11-9 11-8 12-9 11-8 11-9 11-9 11-8 11-9 12-9 11-8 11-8 11-8 11-9 11-8 12-8 11-7 11-8 11-8 11-8 12-8 11-7 11-8 11-8 11-8 11-8 12-8 11-8 11-9 11M943 418l-8 11-9 12-9 11-8 11-9 11-8 11-9 12-9 11-8 11-9 11-8 11-8 11-8 12-9 11-8 11-8 11-7 11-8 11-8 12-8 11-8 11-7 11-8 11-8 12-8 11-8 11-8 11-8 11M943 430l-9 11-8 11-9 11-8 11-9 11-8 12-9 11-9 11-8 11-9 11-8 11-8 12-9 11-8 11-8 11-8 11-7 12-8 11-8 11-8 11-8 11-7 11-8 12-8 11-8 11-8 11-8 11M943 441l-9 11-9 11-8 11-9 12-8 11-9 11-8 11-9 11-8 11-9 12-8 11-8 11-9 11-8 11-8 12-8 11-8 11-7 11-8 11-8 11-8 12-7 11-8 11-8 11-8 11-8 12M942 452l-8 11-9 12-8 11-9 11-8 11-9 11-9 11-8 12-9 11-8 11-8 11-9 11-8 11-8 12-8 11-8 11-8 11-7 11-8 12-8 11-8 11-7 11-8 11-8 11-8 12M942 463l-9 12-8 11-9 11-8 11-9 11-8 12-9 11-8 11-9 11-8 11-8 11-9 12-8 11-8 11-8 11-8 11-8 11-7 12-8 11-8 11-8 11-7 11-8 12-8 11M942 475l-9 11-8 11-9 11-8 11-9 12-8 11-9 11-8 11-9 11-8 12-9 11-8 11-8 11-8 11-8 11-8 12-8 11-7 11-8 11-8 11-8 12-7 11-8 11M941 486l-8 11-9 11-8 12-9 11-8 11-9 11-8 11-9 11-8 12-9 11-8 11-8 11-8 11-8 12-8 11-8 11-8 11-7 11-8 11-8 12-8 11-7 11M941 497l-8 12-9 11-8 11-9 11-8 11-9 11-8 12-9 11-8 11-9 11-8 11-8 11-8 12-8 11-8 11-8 11-8 11-7 12-8 11-8 11-8 11M941 509l-9 11-8 11-9 11-8 11-8 12-9 11-8 11-9 11-8 11-9 11-8 12-8 11-8 11-8 11-8 11-8 11-8 12-7 11-8 11-8 11M941 520l-9 11-8 11-9 11-8 12-9 11-8 11-9 11-8 11-9 12-8 11-8 11-8 11-8 11-8 11-8 12-8 11-8 11-8 11-7 11M940 531l-8 11-9 12-8 11-9 11-8 11-8 11-9 11-8 12-9 11-8 11-8 11-8 11-8 12-9 11-8 11-7 11-8 11-8 11M940 543l-9 11-8 11-8 11-9 11-8 11-9 12-8 11-9 11-8 11-8 11-8 11-9 12-8 11-8 11-8 11-7 11-8 12M940 554l-9 11-8 11-9 11-8 12-8 11-9 11-8 11-9 11-8 11-8 12-9 11-8 11-8 11-8 11-8 11-7 12M939 565l-8 11-9 11-8 12-8 11-9 11-8 11-8 11-9 12-8 11-9 11-8 11-8 11-8 11-8 12-8 11M939 576l-8 12-9 11-8 11-9 11-8 11-8 11-9 12-8 11-8 11-9 11-8 11-8 12-8 11-8 11M939 588l-9 11-8 11-8 11-9 11-8 12-8 11-9 11-8 11-9 11-8 11-8 12-8 11-8 11M938 599l-8 11-8 11-9 12-8 11-8 11-9 11-8 11-8 11-9 12-8 11-8 11-8 11M938 610l-8 12-9 11-8 11-8 11-9 11-8 11-8 12-9 11-8 11-8 11-8 11M938 622l-9 11-8 11-8 11-8 11-9 12-8 11-8 11-9 11-8 11-8 11M938 633l-9 11-8 11-8 11-9 12-8 11-8 11-9 11-8 11-8 12M937 644l-8 11-8 12-9 11-8 11-8 11-9 11-8 11-8 12M937 656l-8 11-9 11-8 11-8 11-8 11-9 12-8 11M937 667l-9 11-8 11-8 11-8 12-9 11-8 11M936 678l-8 11-8 11-8 12-9 11-8 11M936 689l-8 12-9 11-8 11-8 11M936 701l-9 11-8 11-8 11M935 712l-8 11-8 11M935 723l-8 11M575 277l8 12M575 300l8 11M575 334l8 11M576 413l4 5 4-5M576 424l4 4 4-4M576 458l4 6 4-6M576 481l8 11M577 515l4 6 3-6M577 526l7 11M577 571l8 11M577 594l5 4 3-4M577 639l5 6 3-6M578 661l5 6 2-5M578 707l8 11M583 311l3 6 5-6M583 379l8 11M584 447l4 5 3-5M584 458l3 6 5-6M584 515l4 5 4-5M584 526l8 11M584 537l8 12M586 707l7 11M586 718l7 11M590 232l8 12M590 244l4 6 4-6M591 357l4 4 4-4M591 402l8 11M591 447l5 5 3-5M592 515l3 6 5-6M593 594l7 11M593 605l3 5 4-5M593 616l7 12M593 628l4 6 3-6M593 684l4 5 4-5M593 707l3 5 5-5M593 718l8 12M598 232l8 12M598 278l5 6 3-6M599 357l4 6 3-6M599 447l8 11M599 458l8 12M600 492l7 12M600 515l7 11M600 537l8 12M600 560l8 11M600 617l4 5 4-5M601 639l7 12M601 673l8 11M606 255l7 11M607 391l3 6 4-6M607 413l2 6 5-6M607 447l3 5 5-5M607 458l3 5 5-4M607 470l8 11M607 481l8 11M607 504l4 5 4-5M607 515l5 6 3-6M608 538l7 11M608 560l3 5 4-5M608 628l4 7 4-7M609 684l3 6 4-5M609 718l5 6 2-5M613 266l4 6 5-5M614 289l8 11M614 334l8 12M614 357l8 11M614 379l5 6 3-5M614 402l8 11M615 481l4 6 4-6M615 492l4 7 4-6M615 504l8 11M615 572l5 6 4-6M616 583l8 11M616 628l3 6 5-6M616 651l8 11M616 685l5 6 3-6M616 696l4 6 4-6M622 278l8 11M622 300l4 5 4-4M622 334l8 12M622 357l8 11M622 402l5 5 4-5M623 470l5 5 3-5M623 515l8 12M624 572l4 7 4-7M624 606l8 11M624 617l4 6 4-6M624 640l4 4 4-4M629 244l9 12M630 255l8 12M630 278l8 11M630 312l5 6 3-6M630 335l3 6 5-6M630 368l8 12M631 425l4 5 4-5M631 481l8 12M631 515l4 5 4-5M632 561l8 11M632 594l8 12M632 640l8 11M632 685l9 11M638 256l5 7 3-7M638 323l4 6 4-6M638 380l9 11M639 402l8 12M639 459l8 11M639 470l3 6 5-6M639 527l5 5 4-5M639 538l9 11M640 617l3 6 5-6M640 662l4 6 4-6M640 685l4 6 5-6M646 278l2 7 6-7M646 290l8 11M646 301l6 6 2-6M646 312l8 12M647 391l8 12M647 403l8 11M647 436l8 12M648 583l8 12M648 595l8 11M648 606l5 6 3-6M648 629l8 11M648 674l9 11M649 685l3 6 5-6M649 708l3 5 5-5M654 233l4 6 4-6M654 290l8 11M654 346l9 12M655 369l8 11M655 482l9 11M655 493l5 5 4-5M656 550l4 6 4-6M657 674l8 11M657 685l8 12M662 256l4 6 4-6M662 290l5 5 3-5M663 369l5 5 3-5M663 392l8 11M663 471l5 5 3-5M664 505l3 4 5-4M664 572l4 6 4-6M664 606l8 12M664 651l9 12M665 674l4 6 4-6M665 697l3 6 5-6M665 708l8 11M670 267l5 7 3-7M670 290l9 11M671 313l3 4 5-4M671 380l8 12M671 414l4 4 4-4M671 471l4 7 5-7M672 482l8 11M672 516l4 6 4-6M672 550l8 11M672 584l8 11M672 606l5 4 3-4M672 640l4 6 5-6M673 652l4 5 4-5M678 245l5 6 3-6M679 324l3 6 5-6M679 369l4 7 4-7M680 561l8 12M680 606l6 5 2-4M680 618l9 11M681 686l4 6 4-6M686 234l9 11M687 301l8 12M687 324l5 7 3-7M687 335l8 12M687 347l4 6 4-6M687 381l8 11M687 414l4 7 5-6M688 448l4 7 4-7M688 482l8 12M688 527l4 6 4-5M688 539l8 11M688 561l4 7 4-6M688 595l9 12M689 640l8 12M695 245l8 12M695 268l8 11M695 335l4 6 4-5M695 347l8 11M695 358l8 12M696 448l4 7 4-6M696 471l5 5 3-5M696 482l8 12M696 516l5 6 3-6M696 528l8 11M696 539l8 11M696 550l9 12M696 562l9 11M697 607l5 6 3-6M697 686l4 6 4-6M703 257l3 6 5-6M703 279l8 12M703 313l8 11M703 370l9 11M704 392l8 12M704 494l8 11M704 505l5 7 3-7M704 539l6 6 3-6M705 607l3 6 5-6M705 675l4 5 4-5M705 697l9 12M705 720l9 11M711 234l4 5 4-5M711 268l3 6 5-6M711 291l9 11M711 313l3 5 6-5M712 381l8 11M713 517l8 11M713 539l8 12M713 550l8 12M714 720l4 6 4-6M719 257l4 4 5-4M720 347l4 5 4-5M720 415l5 6 3-6M720 426l5 6 4-6M720 449l5 7 4-7M721 562l8 11M721 584l8 12M721 641l9 11M722 697l8 12M728 336l4 5 4-5M728 404l9 11M729 528l3 5 5-5M730 619l8 11M730 652l8 12M730 686l8 12M736 257l8 11M736 314l4 5 4-5M737 381l8 12M737 449l4 6 4-6M737 460l4 7 4-6M737 472l8 11M738 607l4 6 4-6M738 675l8 12M738 698l6 5 2-5M744 268l9 12M744 280l5 6 4-6M744 314l9 11M744 325l9 11M745 404l5 5 3-5M745 427l3 4 5-4M745 438l8 11M746 607l4 7 4-6M746 698l8 11M752 235l9 11M753 246l8 11M753 269l5 4 3-4M753 348l4 5 4-5M754 608l8 11M754 619l3 7 5-7M754 630l8 12M754 675l8 12M754 698l8 11M761 235l5 5 3-5M761 325l5 8 3-8M761 336l8 12M761 370l8 12M761 382l8 11M761 416l8 11M761 438l8 12M761 495l3 5 5-5M761 506l3 7 5-7M761 517l8 12M762 642l3 6 4-6M762 675l7 12M769 246l9 12M769 337l8 11M769 393l8 12M769 416l5 4 3-4M769 472l8 12M769 540l5 6 3-6M769 597l4 6 4-6M769 630l8 12M769 653l5 6 3-6M769 664l6 7 2-7M778 235l4 5 4-5M778 269l8 11M778 325l8 12M777 393l8 12M777 405l5 6 3-6M777 427l5 5 3-5M777 529l3 5 5-5M777 563l8 11M777 574l5 6 3-6M777 585l5 6 3-6M777 664l8 12M786 258l3 5 5-5M786 303l4 6 4-6M786 337l3 5 5-5M786 382l3 5 5-5M785 416l8 11M785 484l8 11M785 518l8 11M785 529l8 11M785 540l6 6 2-6M785 597l6 5 2-5M785 631l8 11M785 642l8 11M785 653l8 12M785 665l8 11M785 676l5 6 3-6M785 687l8 12M785 710l2 5 6-5M794 280l4 6 4-5M794 292l8 11M793 439l4 5 4-5M793 473l8 11M793 653l3 7 4-7M793 665l4 6 3-6M793 699l2 4 5-4M802 303l8 12M802 348l8 12M802 360l5 4 3-4M802 394l7 11M801 405l8 11M801 427l5 7 3-6M801 518l4 6 4-6M801 574l3 6 5-6M801 597l7 11M800 710l3 6 5-6M810 371l4 5 4-5M810 394l1 5 7-5M809 405l5 5 3-5M809 439l5 7 3-7M809 461l4 6 4-5M809 484l4 6 4-6M809 563l3 5 4-5M808 597l8 12M808 608l3 6 5-5M808 631l5 6 3-6M808 710l7 11M819 236l8 11M818 258l9 12M818 292l9 12M818 315l8 11M818 349l8 11M818 371l8 12M818 394l8 11M817 518l2 6 6-6M816 642l4 4 4-3M816 654l8 11M816 676l7 12M827 270l3 5 5-5M826 371l8 12M826 439l8 12M825 473l8 11M825 530l8 11M824 597l8 12M824 643l5 7 3-7M824 654l8 11M824 665l8 12M835 270l4 6 5-6M835 292l3 6 6-5M835 326l3 5 5-5M834 371l9 12M833 507l8 11M833 530l5 6 3-6M832 631l8 12M832 643l3 5 5-5M831 688l8 11M831 722l8 11M844 259l6 7 2-7M844 281l8 12M843 315l4 7 5-7M843 338l8 11M843 360l8 12M842 428l8 12M842 462l8 11M841 496l5 4 4-4M841 507l8 12M840 620l8 12M840 654l8 11M840 665l7 12M853 247l4 5 4-4M851 349l9 12M851 383l4 4 4-4M850 462l5 5 3-5M850 485l8 11M849 564l8 11M848 620l8 12M847 677l8 11M847 688l8 11M847 722l8 11M860 304l9 11M859 394l9 12M859 406l4 5 5-5M859 417l4 7 4-7M858 474l3 6 6-6M858 485l6 5 2-5M857 519l5 6 4-6M857 541l4 6 5-6M856 632l8 11M855 677l8 11M870 259l4 6 4-6M870 270l5 8 3-8M868 349l3 7 6-6M868 372l8 11M866 485l4 6 5-6M866 519l8 11M865 553l4 5 5-5M865 564l8 11M865 598l8 11M864 621l8 11M864 632l4 6 4-6M864 666l4 6 4-6M878 282l9 11M878 304l8 12M876 440l8 11M875 451l4 6 5-6M875 474l8 11M875 496l8 12M874 519l6 5 3-5M874 530l5 7 3-7M874 542l4 5 4-5M874 553l8 11M873 587l8 11M873 598l8 11M873 609l4 5 4-5M872 632l9 11M872 655l8 11M887 282l5 5 4-5M886 350l4 5 4-5M885 361l9 11M885 372l5 8 4-8M885 406l5 6 3-6M884 440l4 5 5-5M884 451l5 6 3-6M884 463l3 7 5-7M883 519l8 12M882 530l5 7 4-6M882 553l8 11M882 564l6 7 2-7M881 598l8 12M881 609l4 6 4-5M879 711l8 12M896 271l3 6 5-6M895 305l4 4 5-4M894 338l3 5 6-4M894 384l3 5 5-5M893 429l5 6 3-6M893 440l8 12M891 531l8 11M890 564l8 12M890 576l5 6 3-6M889 621l4 6 4-6M889 632l8 12M901 452l4 5 4-5M900 497l8 11M899 519l8 12M899 542l4 6 4-6M896 678l8 11M896 689l4 6 4-6M896 711l5 7 3-6M913 271l8 11M913 294l3 5 5-5M911 361l8 12M911 373l8 11M910 395l5 6 4-6M910 429l3 5 5-5M909 463l8 11M908 519l8 12M907 553l4 6 4-6M906 599l4 7 4-7M905 632l4 7 4-6M904 700l4 6 4-6M903 723l8 11M922 248l6 7 3-6M919 395l8 12M918 407l4 4 5-4M918 441l4 4 4-4M917 463l3 7 5-7M915 542l2 6 7-6M913 655l3 6 5-6M913 666l7 12M911 723l4 6 4-6M930 260l4 6 5-6M930 271l8 12M930 283l5 5 3-5M929 305l9 12M927 384l9 12M927 395l4 6 5-5M925 463l5 8 4-8M923 576l4 6 4-6M921 644l8 11M919 712l8 11M939 260l4 4 5-4M939 271l8 12M938 294l8 11M934 463l5 6 3-6M933 486l4 5 4-5M933 497l4 6 4-6M932 531l4 6 4-6M929 633l4 6 5-6M929 667l5 6 3-6M927 723l8 12" stroke="#000" stroke-width="1" fill="none" shape-rendering="crispEdges" transform="translate(0.5 0.5)"/>
<path d="M948 231l5 0 5 0 5 0 5 0 5 0 5 0 5 0 4 0 5 0 5 0 5 0 5 0 5 1 5 0 4 0 5 0 5 0 5 0 5 0 5 0M948 237l5 0 5 0 5 0 5 0 5 0 4 1 5 0 5 0 5 0 5 0 5 0 5 0 5 0 4 0 5 0 5 0 5 0 5 0 5 0 5 1M948 244l5 0 5 0 5 0 4 0 5 0 5 0 5 0 5 0 5 0 5 0 5 0 4 0 5 1 5 0 5 0 5 0 5 0 5 0 4 0 5 0M948 250l5 0 5 0 4 0 5 0 5 0 5 1 5 0 5 0 5 0 4 0 5 0 5 0 5 0 5 0 5 0 5 0 4 0 5 0 5 0 5 1M948 257l4 0 5 0 5 0 5 0 5 0 5 0 5 0 5 0 4 0 5 0 5 0 5 0 5 1 5 0 4 0 5 0 5 0 5 0 5 0 5 0M947 263l5 0 5 0 5 0 5 0 5 0 5 1 4 0 5 0 5 0 5 0 5 0 5 0 5 0 4 0 5 0 5 0 5 0 5 0 5 0 4 1M947 270l5 0 5 0 5 0 5 0 5 0 4 0 5 0 5 0 5 0 5 0 5 0 4 0 5 1 5 0 5 0 5 0 5 0 4 0 5 0 5 0M947 276l5 0 5 0 5 0 5 0 4 0 5 1 5 0 5 0 5 0 5 0 4 0 5 0 5 0 5 0 5 0 5 0 4 0 5 0 5 0 5 1M947 283l5 0 5 0 4 0 5 0 5 0 5 0 5 0 5 0 5 0 4 0 5 0 5 0 5 1 5 0 4 0 5 0 5 0 5 0 5 0 5 0M947 289l5 0 4 0 5 0 5 0 5 0 5 0 5 1 4 0 5 0 5 0 5 0 5 0 5 0 4 0 5 0 5 0 5 0 5 0 5 0 4 1M947 296l4 0 5 0 5 0 5 0 5 0 5 0 4 0 5 0 5 0 5 0 5 0 5 0 4 1 5 0 5 0 5 0 5 0 4 0 5 0 5 0M946 302l5 0 5 0 5 0 5 0 5 0 4 0 5 1 5 0 5 0 5 0 4 0 5 0 5 0 5 0 5 0 5 0 4 0 5 0 5 0 5 1M946 309l5 0 5 0 5 0 5 0 4 0 5 0 5 0 5 0 5 0 4 0 5 0 5 0 5 0 5 1 4 0 5 0 5 0 5 0 5 0 4 0M946 315l5 0 5 0 5 0 4 0 5 0 5 0 5 1 5 0 4 0 5 0 5 0 5 0 5 0 4 0 5 0 5 0 5 0 5 0 4 0 5 0M946 322l5 0 5 0 4 0 5 0 5 0 5 0 5 0 4 0 5 0 5 0 5 0 5 0 4 0 5 1 5 0 5 0 5 0 4 0 5 0 5 0M946 328l5 0 4 0 5 0 5 0 5 0 5 0 4 1 5 0 5 0 5 0 5 0 4 0 5 0 5 0 5 0 5 0 4 0 5 0 5 0 5 0M946 335l4 0 5 0 5 0 5 0 5 0 4 0 5 0 5 0 5 0 5 0 4 0 5 0 5 0 5 1 4 0 5 0 5 0 5 0 5 0 4 0M945 341l5 0 5 0 5 0 5 0 4 0 5 0 5 1 5 0 5 0 4 0 5 0 5 0 5 0 4 0 5 0 5 0 5 0 5 0 4 0 5 0M945 348l5 0 5 0 5 0 4 0 5 0 5 0 5 0 5 0 4 0 5 0 5 0 5 0 4 0 5 1 5 0 5 0 5 0 4 0 5 0 5 0M945 354l5 0 5 0 4 0 5 0 5 0 5 0 5 1 4 0 5 0 5 0 5 0 4 0 5 0 5 0 5 0 5 0 4 0 5 0 5 0 5 0M945 361l5 0 4 0 5 0 5 0 5 0 5 0 4 0 5 0 5 0 5 0 4 0 5 0 5 0 5 1 4 0 5 0 5 0 5 0 5 0 4 0M945 367l4 0 5 0 5 0 5 0 5 0 4 0 5 1 5 0 5 0 4 0 5 0 5 0 5 0 4 0 5 0 5 0 5 0 5 0 4 0 5 0M944 374l5 0 5 0 5 0 5 0 4 0 5 0 5 0 5 0 4 0 5 0 5 0 5 0 4 0 5 1 5 0 5 0 4 0 5 0 5 0 5 0M944 380l5 0 5 0 5 0 4 0 5 0 5 0 5 1 4 0 5 0 5 0 5 0 4 0 5 0 5 0 5 0 4 0 5 0 5 0 5 0 4 0M944 387l5 0 5 0 4 0 5 0 5 0 5 0 4 0 5 0 5 0 5 0 5 0 4 0 5 0 5 1 4 0 5 0 5 0 5 0 4 0 5 0M944 393l5 0 4 0 5 0 5 0 5 0 5 0 4 1 5 0 5 0 5 0 4 0 5 0 5 0 5 0 4 0 5 0 5 0 4 0 5 0 5 0M944 400l5 0 4 0 5 0 5 0 5 0 4 0 5 0 5 0 5 0 4 0 5 0 5 0 5 0 4 1 5 0 5 0 4 0 5 0 5 0 5 0M944 406l4 0 5 0 5 0 5 0 4 0 5 0 5 1 5 0 4 0 5 0 5 0 5 0 4 0 5 0 5 0 4 0 5 0 5 0 5 0 4 0M943 413l5 0 5 0 5 0 4 0 5 0 5 0 5 0 4 0 5 0 5 0 5 0 4 0 5 0 5 1 4 0 5 0 5 0 5 0 4 0 5 0M943 419l5 0 5 0 4 0 5 0 5 0 5 0 4 1 5 0 5 0 5 0 4 0 5 0 5 0 5 0 4 0 5 0 5 0 4 0 5 0 5 0M943 426l5 0 5 0 4 0 5 0 5 0 4 0 5 0 5 0 5 0 4 0 5 0 5 0 5 0 4 0 5 1 5 0 4 0 5 0 5 0 5 0M943 432l5 0 4 0 5 0 5 0 5 0 4 0 5 1 5 0 4 0 5 0 5 0 5 0 4 0 5 0 5 0 4 0 5 0 5 0 5 0 4 0M943 439l4 0 5 0 5 0 5 0 4 0 5 0 5 0 5 0 4 0 5 0 5 0 4 0 5 0 5 0 4 1 5 0 5 0 5 0 4 0 5 0M943 445l4 0 5 0 5 0 4 0 5 0 5 0 5 0 4 1 5 0 5 0 4 0 5 0 5 0 5 0 4 0 5 0 5 0 4 0 5 0 5 0M942 451l5 1 5 0 5 0 4 0 5 0 5 0 4 0 5 0 5 0 5 0 4 0 5 0 5 0 4 0 5 1 5 0 4 0 5 0 5 0 4 0M942 458l5 0 5 0 4 0 5 0 5 0 4 0 5 0 5 1 5 0 4 0 5 0 5 0 4 0 5 0 5 0 4 0 5 0 5 0 4 0 5 0M942 464l5 1 4 0 5 0 5 0 5 0 4 0 5 0 5 0 4 0 5 0 5 0 4 0 5 0 5 0 5 1 4 0 5 0 5 0 4 0 5 0M942 471l5 0 4 0 5 0 5 0 4 0 5 0 5 0 4 1 5 0 5 0 5 0 4 0 5 0 5 0 4 0 5 0 5 0 4 0 5 0 5 0M942 477l4 1 5 0 5 0 4 0 5 0 5 0 5 0 4 0 5 0 5 0 4 0 5 0 5 0 4 0 5 1 5 0 4 0 5 0 5 0 4 0M942 484l4 0 5 0 5 0 4 0 5 0 5 0 4 0 5 1 5 0 4 0 5 0 5 0 4 0 5 0 5 0 4 0 5 0 5 0 4 0 5 0M941 490l5 1 5 0 4 0 5 0 5 0 4 0 5 0 5 0 4 0 5 0 5 0 5 0 4 0 5 0 5 1 4 0 5 0 4 0 5 0 5 0M941 497l5 0 5 0 4 0 5 0 5 0 4 0 5 0 5 1 4 0 5 0 5 0 4 0 5 0 5 0 4 0 5 0 5 0 4 0 5 0 5 0M941 503l5 1 4 0 5 0 5 0 4 0 5 0 5 0 4 0 5 0 5 0 4 0 5 0 5 0 4 0 5 1 5 0 4 0 5 0 5 0 4 0M941 510l4 0 5 0 5 0 5 0 4 0 5 0 5 0 4 1 5 0 4 0 5 0 5 0 4 0 5 0 5 0 4 0 5 0 5 0 4 0 5 0M941 516l4 1 5 0 5 0 4 0 5 0 5 0 4 0 5 0 5 0 4 0 5 0 5 0 4 0 5 0 5 1 4 0 5 0 4 0 5 0 5 0M940 523l5 0 5 0 4 0 5 0 5 0 4 0 5 0 5 1 4 0 5 0 5 0 4 0 5 0 5 0 4 0 5 0 5 0 4 0 5 0 4 0M940 529l5 1 5 0 4 0 5 0 5 0 4 0 5 0 5 0 4 0 5 0 4 0 5 0 5 0 4 0 5 1 5 0 4 0 5 0 5 0 4 0M940 536l5 0 4 0 5 0 5 0 4 0 5 0 5 0 4 1 5 0 5 0 4 0 5 0 4 0 5 0 5 0 4 0 5 0 5 0 4 0 5 0M940 542l5 1 4 0 5 0 5 0 4 0 5 0 4 0 5 0 5 0 4 0 5 0 5 0 4 0 5 0 5 1 4 0 5 0 4 0 5 0 5 0M940 549l4 0 5 0 5 0 4 0 5 0 5 0 4 0 5 1 5 0 4 0 5 0 4 0 5 0 5 0 4 0 5 0 4 0 5 0 5 0 4 0M940 555l4 1 5 0 5 0 4 0 5 0 4 0 5 0 5 0 4 0 5 0 5 0 4 0 5 0 4 0 5 0 5 1 4 0 5 0 4 0 5 0M939 562l5 0 5 0 4 0 5 0 5 0 4 0 5 0 4 1 5 0 5 0 4 0 5 0 5 0 4 0 5 0 4 0 5 0 5 0 4 0 5 0M939 568l5 1 5 0 4 0 5 0 4 0 5 0 5 0 4 0 5 0 4 0 5 0 5 0 4 0 5 0 5 0 4 1 5 0 4 0 5 0 5 0M939 575l5 0 4 0 5 0 5 0 4 0 5 0 4 0 5 1 5 0 4 0 5 0 4 0 5 0 5 0 4 0 5 0 4 0 5 0 5 0 4 0M939 581l5 1 4 0 5 0 4 0 5 0 5 0 4 0 5 0 4 0 5 0 5 0 4 0 5 0 4 0 5 0 5 1 4 0 5 0 4 0 5 0M939 588l4 0 5 0 5 0 4 0 5 0 4 0 5 0 5 0 4 1 5 0 4 0 5 0 5 0 4 0 5 0 4 0 5 0 5 0 4 0 5 0M939 594l4 1 5 0 4 0 5 0 5 0 4 0 5 0 4 0 5 0 5 0 4 0 5 0 4 0 5 0 5 0 4 1 5 0 4 0 5 0 4 0M938 601l5 0 5 0 4 0 5 0 4 0 5 0 5 0 4 0 5 1 4 0 5 0 5 0 4 0 5 0 4 0 5 0 4 0 5 0 5 0 4 0M938 607l5 1 4 0 5 0 5 0 4 0 5 0 4 0 5 0 5 0 4 0 5 0 4 0 5 0 4 0 5 0 5 1 4 0 5 0 4 0 5 0M938 614l5 0 4 0 5 0 4 0 5 0 5 0 4 0 5 0 4 1 5 0 4 0 5 0 5 0 4 0 5 0 4 0 5 0 4 0 5 0 5 0M938 620l4 0 5 1 5 0 4 0 5 0 4 0 5 0 5 0 4 0 5 0 4 0 5 0 4 0 5 0 5 0 4 1 5 0 4 0 5 0 4 0M938 627l4 0 5 0 4 0 5 0 5 0 4 0 5 0 4 0 5 1 4 0 5 0 5 0 4 0 5 0 4 0 5 0 4 0 5 0 4 0 5 0M937 633l5 0 5 1 4 0 5 0 4 0 5 0 5 0 4 0 5 0 4 0 5 0 4 0 5 0 4 0 5 0 5 1 4 0 5 0 4 0 5 0M937 640l5 0 4 0 5 0 5 0 4 0 5 0 4 0 5 0 4 1 5 0 5 0 4 0 5 0 4 0 5 0 4 0 5 0 4 0 5 0 4 0M937 646l5 0 4 1 5 0 4 0 5 0 5 0 4 0 5 0 4 0 5 0 4 0 5 0 4 0 5 0 5 0 4 1 5 0 4 0 5 0 4 0M937 653l5 0 4 0 5 0 4 0 5 0 4 0 5 0 4 0 5 1 5 0 4 0 5 0 4 0 5 0 4 0 5 0 4 0 5 0 4 0 5 0M937 659l4 0 5 1 4 0 5 0 5 0 4 0 5 0 4 0 5 0 4 0 5 0 4 0 5 0 4 0 5 0 5 1 4 0 5 0 4 0 5 0M937 666l4 0 5 0 4 0 5 0 4 0 5 0 4 0 5 0 5 1 4 0 5 0 4 0 5 0 4 0 5 0 4 0 5 0 4 0 5 0 4 0M936 672l5 0 5 1 4 0 5 0 4 0 5 0 4 0 5 0 4 0 5 0 4 0 5 0 4 0 5 0 5 0 4 0 5 1 4 0 5 0 4 0M936 679l5 0 4 0 5 0 4 0 5 0 5 0 4 0 5 0 4 1 5 0 4 0 5 0 4 0 5 0 4 0 5 0 4 0 5 0 4 0 5 0M936 685l5 0 4 1 5 0 4 0 5 0 4 0 5 0 4 0 5 0 4 0 5 0 4 0 5 0 5 0 4 0 5 0 4 1 5 0 4 0 5 0M936 692l4 0 5 0 5 0 4 0 5 0 4 0 5 0 4 0 5 1 4 0 5 0 4 0 5 0 4 0 5 0 4 0 5 0 4 0 5 0 4 0M936 698l4 0 5 1 4 0 5 0 4 0 5 0 4 0 5 0 4 0 5 0 4 0 5 0 5 0 4 0 5 0 4 0 5 1 4 0 5 0 4 0M936 705l4 0 5 0 4 0 5 0 4 0 5 0 4 0 5 0 4 1 5 0 4 0 5 0 4 0 5 0 4 0 5 0 4 0 5 0 4 0 5 0M935 711l5 0 4 1 5 0 4 0 5 0 5 0 4 0 5 0 4 0 5 0 4 0 5 0 4 0 5 0 4 0 5 0 4 1 4 0 5 0 4 0M935 718l5 0 4 0 5 0 4 0 5 0 4 0 5 0 4 0 5 0 4 1 5 0 4 0 5 0 4 0 5 0 4 0 5 0 4 0 5 0 4 0M935 724l5 0 4 1 5 0 4 0 5 0 4 0 5 0 4 0 5 0 4 0 5 0 4 0 5 0 4 0 5 0 4 0 4 1 5 0 4 0 5 0M948 231l0 6 0 7 0 6 0 7-1 6 0 7 0 6 0 7 0 6 0 7-1 6 0 7 0 6 0 7 0 6 0 7-1 6 0 7 0 6 0 7 0 6-1 7 0 6 0 7 0 6 0 7 0 6-1 7 0 6 0 7 0 6 0 7 0 6-1 6 0 7 0 6 0 7 0 6 0 7-1 6 0 7 0 6 0 7 0 6-1 7 0 6 0 7 0 6 0 7 0 6-1 7 0 6 0 7 0 6 0 7 0 6-1 7 0 6 0 7 0 6 0 7-1 6 0 7 0 6 0 7 0 6 0 7-1 6 0 7 0 6 0 7 0 6 0 7-1 6 0 7 0 6M953 231l0 6 0 7 0 6-1 7 0 6 0 7 0 6 0 7 0 6-1 7 0 6 0 7 0 6 0 7 0 6-1 7 0 6 0 7 0 6 0 7-1 6 0 7 0 6 0 7 0 6 0 7-1 6 0 7 0 6 0 7 0 6-1 7 0 6 0 7 0 6 0 7 0 6-1 7 0 6 0 7 0 6 0 7-1 6 0 7 0 6 0 7 0 6 0 7-1 6 0 7 0 6 0 7 0 6 0 7-1 6 0 7 0 6 0 7 0 6-1 6 0 7 0 6 0 7 0 6 0 7-1 6 0 7 0 6 0 7 0 6-1 7 0 6 0 7 0 6 0 7 0 6M958 231l0 6 0 7 0 6-1 7 0 6 0 7 0 6 0 7-1 6 0 7 0 6 0 7 0 6 0 7-1 6 0 7 0 6 0 7 0 6-1 7 0 6 0 7 0 6 0 7-1 6 0 7 0 6 0 7 0 6 0 7-1 6 0 7 0 6 0 7 0 6-1 7 0 6 0 7 0 6 0 7 0 6-1 7 0 6 0 7 0 6 0 7-1 6 0 7 0 6 0 7 0 6 0 7-1 6 0 7 0 6 0 7 0 6-1 7 0 6 0 7 0 6 0 7-1 6 0 7 0 6 0 7 0 6 0 7-1 6 0 7 0 6 0 7 0 6-1 7 0 6 0 7M963 231l0 6 0 7-1 6 0 7 0 6 0 7 0 6-1 7 0 6 0 7 0 6 0 7 0 6-1 7 0 6 0 7 0 6 0 7-1 6 0 7 0 6 0 7 0 6-1 7 0 6 0 7 0 6 0 7-1 6 0 7 0 6 0 7 0 6 0 7-1 6 0 7 0 6 0 7 0 6-1 7 0 6 0 7 0 6 0 7-1 6 0 7 0 6 0 7 0 6 0 7-1 6 0 7 0 6 0 7 0 6-1 7 0 6 0 7 0 6 0 7-1 6 0 7 0 6 0 7 0 6-1 7 0 6 0 7 0 6 0 7 0 6-1 7 0 6 0 7 0 6 0 7M968 231l0 6-1 7 0 6 0 7 0 6 0 7 0 6-1 7 0 6 0 7 0 6 0 7-1 6 0 7 0 6 0 7 0 6-1 7 0 6 0 7 0 6 0 7-1 6 0 7 0 6 0 7 0 6-1 7 0 6 0 7 0 6 0 7-1 6 0 7 0 6 0 7 0 6-1 7 0 6 0 7 0 6 0 7 0 6-1 7 0 6 0 7 0 6 0 7-1 6 0 7 0 6 0 7 0 6-1 7 0 6 0 7 0 6 0 7-1 6 0 7 0 6 0 7 0 6-1 7 0 6 0 7 0 6 0 7-1 6 0 7 0 6 0 7 0 6-1 7 0 6 0 7M973 231l0 6-1 7 0 6 0 7 0 6 0 7-1 6 0 7 0 6 0 7 0 6-1 7 0 6 0 7 0 6 0 7-1 6 0 7 0 6 0 7 0 6-1 7 0 6 0 7 0 6 0 7-1 6 0 7 0 6 0 7 0 6-1 7 0 6 0 7 0 6 0 7-1 6 0 7 0 6 0 7 0 6-1 7 0 6 0 7 0 6 0 7-1 6 0 7 0 6 0 7 0 6-1 7 0 6 0 7 0 6 0 7-1 6 0 7 0 6 0 7 0 6-1 7 0 6 0 7 0 6 0 7-1 6 0 7 0 6 0 7 0 6-1 7 0 6 0 7 0 6 0 7M978 231l-1 7 0 6 0 7 0 6 0 7-1 6 0 7 0 6 0 6 0 7-1 6 0 7 0 6 0 7 0 6-1 7 0 6 0 7 0 6 0 7-1 6 0 7 0 6 0 7 0 6-1 7 0 6 0 7 0 6-1 7 0 6 0 7 0 6 0 7-1 6 0 7 0 6 0 7 0 6-1 7 0 6 0 7 0 6 0 7-1 6 0 7 0 6 0 7 0 6-1 7 0 6 0 7 0 6 0 7-1 6 0 7 0 6 0 7 0 6-1 7 0 6 0 7 0 6 0 7-1 6 0 7 0 6 0 7 0 6-1 7 0 6 0 7 0 6 0 7-1 6 0 7M983 231l-1 7 0 6 0 7 0 6-1 7 0 6 0 7 0 6 0 7-1 6 0 7 0 6 0 7 0 6-1 7 0 6 0 7 0 6 0 7-1 6 0 7 0 6 0 7-1 6 0 7 0 6 0 7 0 6-1 7 0 6 0 7 0 6 0 6-1 7 0 6 0 7 0 6 0 7-1 6 0 7 0 6 0 7 0 6-1 7 0 6 0 7 0 6-1 7 0 6 0 7 0 6 0 7-1 6 0 7 0 6 0 7 0 6-1 7 0 6 0 7 0 6 0 7-1 6 0 7 0 6 0 7-1 6 0 7 0 6 0 7 0 6-1 7 0 6 0 7 0 6 0 7M987 231l0 7 0 6 0 7 0 6-1 7 0 6 0 7 0 6-1 7 0 6 0 7 0 6 0 7-1 6 0 7 0 6 0 7 0 6-1 7 0 6 0 7 0 6-1 7 0 6 0 7 0 6 0 7-1 6 0 7 0 6 0 7 0 6-1 7 0 6 0 7 0 6-1 7 0 6 0 7 0 6 0 7-1 6 0 7 0 6 0 7 0 6-1 7 0 6 0 7 0 6-1 7 0 6 0 7 0 6 0 6-1 7 0 6 0 7 0 6 0 7-1 6 0 7 0 6 0 7-1 6 0 7 0 6 0 7 0 6-1 7 0 6 0 7 0 6 0 7-1 6 0 7M992 231l0 7 0 6 0 7-1 6 0 7 0 6 0 7 0 6-1 7 0 6 0 7 0 6-1 7 0 6 0 7 0 6 0 7-1 6 0 7 0 6 0 7-1 6 0 7 0 6 0 7 0 6-1 7 0 6 0 7 0 6-1 7 0 6 0 7 0 6 0 7-1 6 0 7 0 6 0 7-1 6 0 7 0 6 0 7 0 6-1 7 0 6 0 7 0 6 0 7-1 6 0 7 0 6 0 7-1 6 0 7 0 6 0 7 0 6-1 7 0 6 0 7 0 6-1 7 0 6 0 7 0 6 0 7-1 6 0 7 0 6 0 7-1 6 0 7 0 6 0 6 0 7M997 231l0 7 0 6-1 7 0 6 0 7 0 6 0 7-1 6 0 7 0 6 0 7-1 6 0 7 0 6 0 7 0 6-1 7 0 6 0 7 0 6-1 7 0 6 0 7 0 6 0 7-1 6 0 7 0 6 0 7-1 6 0 7 0 6 0 7 0 6-1 7 0 6 0 7 0 6-1 7 0 6 0 7 0 6-1 7 0 6 0 7 0 6 0 7-1 6 0 7 0 6 0 7-1 6 0 7 0 6 0 7 0 6-1 7 0 6 0 7 0 6-1 7 0 6 0 7 0 6 0 7-1 6 0 7 0 6 0 7-1 6 0 7 0 6 0 7 0 6-1 7 0 6M1002 231l0 7 0 6-1 7 0 6 0 7 0 6-1 7 0 6 0 7 0 6-1 7 0 6 0 7 0 6 0 7-1 6 0 7 0 6 0 7-1 6 0 7 0 6 0 7 0 6-1 7 0 6 0 7 0 6-1 7 0 6 0 7 0 6-1 7 0 6 0 7 0 6 0 7-1 6 0 7 0 6 0 7-1 6 0 7 0 6 0 7-1 6 0 7 0 6 0 7 0 6-1 7 0 6 0 7 0 6-1 7 0 6 0 7 0 6-1 7 0 6 0 7 0 6 0 7-1 6 0 7 0 6 0 7-1 6 0 7 0 6 0 7-1 6 0 7 0 6 0 7 0 6M1007 231l0 7-1 6 0 7 0 6 0 7-1 6 0 7 0 6 0 7 0 6-1 7 0 6 0 7 0 6-1 7 0 6 0 7 0 6-1 7 0 6 0 7 0 6-1 7 0 6 0 7 0 6 0 7-1 6 0 7 0 6 0 7-1 6 0 7 0 6 0 7-1 6 0 7 0 6 0 7 0 6-1 7 0 6 0 7 0 6-1 7 0 6 0 7 0 6-1 7 0 6 0 7 0 6-1 7 0 6 0 7 0 6 0 7-1 6 0 7 0 6 0 7-1 6 0 7 0 6 0 7-1 6 0 7 0 6 0 7-1 6 0 7 0 6 0 7 0 6-1 7 0 6M1012 232l0 6-1 7 0 6 0 7 0 6-1 7 0 6 0 7 0 6-1 7 0 6 0 6 0 7-1 6 0 7 0 6 0 7-1 6 0 7 0 6 0 7-1 6 0 7 0 6 0 7 0 6-1 7 0 6 0 7 0 6-1 7 0 6 0 7 0 6-1 7 0 6 0 7 0 6-1 7 0 6 0 7 0 6-1 7 0 6 0 7 0 6-1 7 0 6 0 7 0 6 0 7-1 6 0 7 0 6 0 7-1 6 0 7 0 6 0 7-1 6 0 7 0 6 0 7-1 6 0 7 0 6 0 7-1 6 0 7 0 6 0 7 0 6-1 7 0 6 0 7 0 6M1017 232l-1 6 0 7 0 6 0 7-1 6 0 7 0 6 0 7-1 6 0 7 0 6 0 7-1 6 0 7 0 6 0 7-1 6 0 7 0 6 0 7-1 6 0 7 0 6 0 7 0 6-1 7 0 6 0 7 0 6-1 6 0 7 0 6 0 7-1 6 0 7 0 6 0 7-1 6 0 7 0 6 0 7-1 6 0 7 0 6 0 7-1 6 0 7 0 6 0 7-1 6 0 7 0 6 0 7-1 6 0 7 0 6 0 7-1 6 0 7 0 6 0 7-1 6 0 7 0 6 0 7-1 6 0 7 0 6 0 7 0 6-1 7 0 6 0 7 0 6-1 7 0 6M1021 232l0 6 0 7 0 6-1 7 0 6 0 7 0 6-1 7 0 6 0 7 0 6-1 7 0 6 0 7 0 6-1 7 0 6 0 7 0 6-1 7 0 6 0 7 0 6-1 7 0 6 0 7 0 6-1 7 0 6 0 7 0 6-1 7 0 6 0 7 0 6 0 7-1 6 0 7 0 6 0 7-1 6 0 7 0 6 0 7-1 6 0 7 0 6 0 7-1 6 0 6 0 7 0 6-1 7 0 6 0 7 0 6-1 7 0 6 0 7 0 6-1 7 0 6 0 7 0 6-1 7 0 6 0 7 0 6-1 7 0 6 0 7 0 6-1 7 0 6 0 7 0 6M1026 232l0 6 0 7 0 6-1 7 0 6 0 7 0 6-1 7 0 6 0 7 0 6-1 7 0 6 0 7 0 6-1 7 0 6 0 7 0 6-1 7 0 6 0 7-1 6 0 7 0 6 0 7-1 6 0 7 0 6 0 7-1 6 0 7 0 6 0 7-1 6 0 7 0 6 0 7-1 6 0 7 0 6 0 7-1 6 0 7 0 6 0 7-1 6 0 7 0 6 0 7-1 6 0 7 0 6 0 7-1 6 0 7 0 6 0 7-1 6 0 7 0 6 0 7-1 6 0 7 0 6 0 7-1 6 0 6 0 7 0 6-1 7 0 6 0 7 0 6-1 7 0 6M1031 232l0 6 0 7-1 6 0 7 0 6 0 7-1 6 0 7 0 6 0 7-1 6 0 7 0 6 0 7-1 6 0 7 0 6 0 7-1 6 0 7 0 6-1 7 0 6 0 7 0 6-1 7 0 6 0 7 0 6-1 7 0 6 0 7 0 6-1 7 0 6 0 7 0 6-1 7 0 6 0 7 0 6-1 7 0 6 0 7 0 6-1 7 0 6 0 7-1 6 0 7 0 6 0 7-1 6 0 7 0 6 0 7-1 6 0 7 0 6 0 7-1 6 0 7 0 6 0 7-1 6 0 7 0 6 0 7-1 6 0 7 0 6 0 7-1 6 0 7 0 6-1 7M1036 232l0 6 0 7-1 6 0 7 0 6-1 7 0 6 0 7 0 6-1 7 0 6 0 7 0 6-1 7 0 6 0 7 0 6-1 7 0 6 0 7 0 6-1 7 0 6 0 7-1 6 0 7 0 6 0 7-1 6 0 7 0 6 0 7-1 6 0 7 0 6 0 7-1 6 0 7 0 6-1 7 0 6 0 7 0 6-1 7 0 6 0 7 0 6-1 7 0 6 0 7 0 6-1 7 0 6 0 7 0 6-1 7 0 6 0 7-1 6 0 7 0 6 0 7-1 6 0 7 0 6 0 7-1 6 0 7 0 6 0 7-1 6 0 7 0 6-1 7 0 6 0 7M1041 232l0 6-1 7 0 6 0 7 0 6-1 7 0 6 0 7 0 6-1 7 0 6 0 7-1 6 0 7 0 6 0 7-1 6 0 7 0 6 0 7-1 6 0 7 0 6-1 7 0 6 0 7 0 6-1 7 0 6 0 7 0 6-1 7 0 6 0 7-1 6 0 7 0 6 0 7-1 6 0 7 0 6 0 7-1 6 0 7 0 6 0 7-1 6 0 7 0 6-1 7 0 6 0 7 0 6-1 7 0 6 0 7 0 6-1 7 0 6 0 7-1 6 0 7 0 6 0 7-1 6 0 7 0 6 0 7-1 6 0 7 0 6 0 7-1 6 0 7 0 6-1 7M1046 232l0 7-1 6 0 7 0 6-1 7 0 6 0 7 0 6-1 7 0 6 0 7-1 6 0 6 0 7 0 6-1 7 0 6 0 7 0 6-1 7 0 6 0 7-1 6 0 7 0 6 0 7-1 6 0 7 0 6 0 7-1 6 0 7 0 6-1 7 0 6 0 7 0 6-1 7 0 6 0 7 0 6-1 7 0 6 0 7-1 6 0 7 0 6 0 7-1 6 0 7 0 6 0 7-1 6 0 7 0 6-1 7 0 6 0 7 0 6-1 7 0 6 0 7-1 6 0 7 0 6 0 7-1 6 0 7 0 6 0 7-1 6 0 7 0 6-1 7 0 6 0 7M953 231l-5 6M958 231l-5 6-5 7M963 231l-5 6-5 7-5 6M968 231l-5 6-5 7-5 6-5 7M973 231l-5 6-5 7-5 6-6 7-5 6M978 231l-5 6-6 7-5 6-5 7-5 6-5 7M983 231l-6 7-5 6-5 6-5 7-5 6-5 7-5 6M987 231l-5 7-5 6-5 6-5 7-5 6-5 7-5 6-5 7M992 231l-5 7-5 6-5 7-5 6-5 6-5 7-5 6-5 7-5 6M997 231l-5 7-5 6-5 7-5 6-5 6-5 7-5 6-5 7-5 6-5 7M1002 231l-5 7-5 6-5 7-5 6-5 7-5 6-5 6-6 7-5 6-5 7-5 6M1007 231l-5 7-5 6-5 7-5 6-6 7-5 6-5 6-5 7-5 6-5 7-5 6-5 7M1012 232l-5 6-5 6-6 7-5 6-5 7-5 6-5 7-5 6-5 6-5 7-5 6-5 7-5 6M1017 232l-5 6-6 6-5 7-5 6-5 7-5 6-5 7-5 6-5 6-5 7-5 6-5 7-5 6-5 7M1021 232l-5 6-5 7-5 6-5 6-5 7-5 6-5 7-5 6-5 6-5 7-5 6-5 7-5 6-5 7-5 6M1026 232l-5 6-5 7-5 6-5 6-5 7-5 6-5 7-5 6-5 7-5 6-5 6-5 7-5 6-5 7-5 6-5 7M1031 232l-5 6-5 7-5 6-5 7-5 6-5 6-5 7-5 6-6 7-5 6-5 6-5 7-5 6-5 7-5 6-5 7-5 6M1036 232l-5 6-5 7-5 6-5 7-5 6-6 6-5 7-5 6-5 7-5 6-5 7-5 6-5 6-5 7-5 6-5 7-5 6-5 7M1041 232l-5 6-5 7-5 6-6 7-5 6-5 7-5 6-5 6-5 7-5 6-5 7-5 6-5 6-5 7-5 6-5 7-5 6-5 7-5 6M1046 232l-5 6-5 7-6 6-5 7-5 6-5 7-5 6-5 6-5 7-5 6-5 7-5 6-5 7-5 6-5 6-5 7-5 6-5 7-5 6-5 7M1046 239l-6 6-5 6-5 7-5 6-5 7-5 6-5 7-5 6-5 6-5 7-5 6-5 7-5 6-5 6-5 7-5 6-5 7-5 6-5 7-5 6M1045 245l-5 6-5 7-5 6-5 7-5 6-5 7-5 6-5 6-6 7-5 6-5 7-5 6-5 7-5 6-5 6-5 7-5 6-5 7-5 6-5 7M1045 252l-5 6-5 6-5 7-5 6-6 7-5 6-5 7-5 6-5 6-5 7-5 6-5 7-5 6-5 6-5 7-5 6-5 7-5 6-5 7-5 6M1045 258l-5 6-6 7-5 6-5 7-5 6-5 7-5 6-5 6-5 7-5 6-5 7-5 6-5 7-5 6-5 6-5 7-5 6-5 7-5 6-5 7M1044 265l-5 6-5 6-5 7-5 6-5 7-5 6-5 6-5 7-5 6-5 7-5 6-5 7-5 6-5 6-5 7-5 6-5 7-5 6-5 7-5 6M1044 271l-5 6-5 7-5 6-5 7-5 6-5 7-5 6-5 6-5 7-5 6-5 7-5 6-5 7-5 6-5 6-5 7-5 6-5 7-5 6-5 7M1044 278l-5 6-5 6-5 7-5 6-6 7-5 6-5 6-5 7-5 6-5 7-5 6-5 7-5 6-5 6-5 7-5 6-5 7-5 6-4 7-5 6M1044 284l-5 6-6 7-5 6-5 7-5 6-5 7-5 6-5 6-5 7-5 6-5 7-5 6-5 7-5 6-5 6-5 7-5 6-5 7-5 6-5 7M1043 291l-5 6-5 6-5 7-5 6-5 7-5 6-5 6-5 7-5 6-5 7-5 6-5 7-5 6-5 6-5 7-5 6-5 7-5 6-5 7-5 6M1043 297l-5 6-5 7-5 6-5 7-5 6-5 7-5 6-5 6-5 7-5 6-5 7-5 6-5 7-5 6-5 6-5 7-5 6-5 7-5 6-5 7M1043 304l-5 6-5 6-5 7-5 6-6 7-5 6-5 6-5 7-5 6-5 7-5 6-5 7-5 6-4 6-5 7-5 6-5 7-5 6-5 7-5 6M1042 310l-5 6-5 7-5 6-5 7-5 6-5 7-5 6-5 6-5 7-5 6-5 7-5 6-5 7-5 6-5 6-5 7-5 6-4 7-5 6-5 7M1042 316l-5 7-5 6-5 7-5 6-5 7-5 6-5 6-5 7-5 6-5 7-5 6-5 7-5 6-5 6-5 7-5 6-5 7-5 6-5 7-4 6M1042 323l-5 6-5 7-5 6-5 7-5 6-5 7-5 6-5 6-5 7-5 6-5 7-5 6-5 7-5 6-5 6-5 7-5 6-5 7-5 6-5 6M1042 329l-5 7-5 6-5 7-5 6-6 7-5 6-5 6-5 7-4 6-5 7-5 6-5 7-5 6-5 6-5 7-5 6-5 7-5 6-5 7-5 6M1041 336l-5 6-5 7-5 6-5 7-5 6-5 7-5 6-5 6-5 7-5 6-5 7-5 6-5 7-5 6-4 6-5 7-5 6-5 7-5 6-5 6M1041 342l-5 7-5 6-5 7-5 6-5 7-5 6-5 6-5 7-5 6-5 7-5 6-5 7-5 6-5 6-5 7-5 6-4 7-5 6-5 7-5 6M1041 349l-5 6-5 7-5 6-5 7-5 6-5 7-5 6-5 6-5 7-5 6-5 7-5 6-5 7-5 6-5 6-5 7-5 6-5 7-4 6-5 6M1041 355l-5 7-5 6-6 7-5 6-5 7-4 6-5 6-5 7-5 6-5 7-5 6-5 7-5 6-5 6-5 7-5 6-5 7-5 6-5 7-4 6M1040 362l-5 6-5 7-5 6-5 7-5 6-5 7-5 6-5 6-5 7-5 6-5 7-4 6-5 6-5 7-5 6-5 7-5 6-5 7-5 6-5 6M1040 368l-5 7-5 6-5 7-5 6-5 7-5 6-5 6-5 7-5 6-5 7-5 6-5 7-5 6-5 6-4 7-5 6-5 7-5 6-5 7-5 6M1040 375l-5 6-5 7-5 6-5 7-5 6-5 7-5 6-5 6-5 7-5 6-5 7-5 6-5 6-5 7-5 6-5 7-4 6-5 7-5 6-5 6M1039 381l-5 7-5 6-5 7-5 6-5 7-4 6-5 6-5 7-5 6-5 7-5 6-5 7-5 6-5 6-5 7-5 6-5 7-4 6-5 7-5 6M1039 388l-5 6-5 7-5 6-5 7-5 6-5 6-5 7-5 6-5 7-4 6-5 7-5 6-5 6-5 7-5 6-5 7-5 6-5 7-5 6-4 6M1039 394l-5 7-5 6-5 7-5 6-5 7-5 6-5 6-5 7-5 6-5 7-5 6-5 7-4 6-5 6-5 7-5 6-5 7-5 6-5 7-5 6M1039 401l-5 6-5 7-5 6-5 7-5 6-5 6-5 7-5 6-5 7-5 6-5 7-5 6-5 6-5 7-4 6-5 7-5 6-5 7-5 6-5 6M1038 407l-5 7-5 6-5 7-5 6-5 7-4 6-5 6-5 7-5 6-5 7-5 6-5 7-5 6-5 6-5 7-4 6-5 7-5 6-5 7-5 6M1038 414l-5 6-5 7-5 6-5 7-5 6-5 6-5 7-5 6-4 7-5 6-5 7-5 6-5 6-5 7-5 6-5 7-5 6-4 7-5 6-5 6M1038 420l-5 7-5 6-5 7-5 6-5 7-5 6-5 6-5 7-5 6-5 7-5 6-4 7-5 6-5 6-5 7-5 6-5 7-5 6-4 7-5 6M1038 427l-5 6-5 7-5 6-5 7-5 6-5 6-5 7-5 6-5 7-5 6-5 7-5 6-4 6-5 7-5 6-5 7-5 6-5 7-5 6-4 6M1037 433l-5 7-5 6-5 7-5 6-4 7-5 6-5 6-5 7-5 6-5 7-5 6-5 7-5 6-5 6-4 7-5 6-5 7-5 6-5 7-5 6M1037 440l-5 6-5 7-5 6-5 7-5 6-5 6-5 7-4 6-5 7-5 6-5 7-5 6-5 6-5 7-5 6-4 7-5 6-5 7-5 6-5 6M1037 446l-5 7-5 6-5 7-5 6-5 7-5 6-5 6-5 7-5 6-5 7-4 6-5 7-5 6-5 6-5 7-5 6-4 7-5 6-5 7-5 6M1036 453l-5 6-4 7-5 6-5 7-5 6-5 6-5 7-5 6-5 7-5 6-5 7-4 6-5 6-5 7-5 6-5 7-5 6-4 7-5 6-5 6M1036 459l-5 7-5 6-5 7-5 6-4 7-5 6-5 6-5 7-5 6-5 7-5 6-5 7-5 6-4 6-5 7-5 6-5 7-5 6-4 7-5 6M1036 466l-5 6-5 7-5 6-5 7-5 6-5 6-5 7-4 6-5 7-5 6-5 7-5 6-5 6-5 7-4 6-5 7-5 6-5 7-5 6-4 6M1036 472l-5 7-5 6-5 7-5 6-5 7-5 6-5 6-5 7-5 6-4 7-5 6-5 7-5 6-5 6-5 7-4 6-5 7-5 6-5 7-5 6M1035 479l-5 6-5 7-4 6-5 7-5 6-5 6-5 7-5 6-5 7-5 6-4 7-5 6-5 6-5 7-5 6-5 7-4 6-5 7-5 6-5 6M1035 485l-5 7-5 6-5 7-5 6-4 7-5 6-5 6-5 7-5 6-5 7-5 6-5 7-4 6-5 6-5 7-5 6-5 7-4 6-5 7-5 6M1035 492l-5 6-5 7-5 6-5 7-5 6-5 6-5 7-4 6-5 7-5 6-5 7-5 6-5 6-4 7-5 6-5 7-5 6-5 7-4 6-5 6M1035 498l-5 7-5 6-5 7-5 6-5 7-5 6-5 6-5 7-4 6-5 7-5 6-5 7-5 6-5 6-4 7-5 6-5 7-5 6-5 6-4 7M1034 505l-5 6-5 7-4 6-5 7-5 6-5 6-5 7-5 6-5 7-5 6-4 7-5 6-5 6-5 7-5 6-4 7-5 6-5 7-5 6-5 6M1034 511l-5 7-5 6-5 7-5 6-4 7-5 6-5 6-5 7-5 6-5 7-5 6-4 6-5 7-5 6-5 7-5 6-4 7-5 6-5 6-5 7M1034 518l-5 6-5 7-5 6-5 7-5 6-5 6-4 7-5 6-5 7-5 6-5 7-5 6-4 6-5 7-5 6-5 7-5 6-4 7-5 6-5 6M1033 524l-4 7-5 6-5 7-5 6-5 6-5 7-5 6-5 7-4 6-5 7-5 6-5 6-5 7-4 6-5 7-5 6-5 7-5 6-4 6-5 7M1033 531l-5 6-5 7-5 6-4 7-5 6-5 6-5 7-5 6-5 7-4 6-5 7-5 6-5 6-5 7-4 6-5 7-5 6-5 7-4 6-5 6M1033 537l-5 7-5 6-5 7-5 6-4 6-5 7-5 6-5 7-5 6-5 7-4 6-5 6-5 7-5 6-5 7-4 6-5 7-5 6-5 6-4 7M1033 544l-5 6-5 7-5 6-5 7-5 6-5 6-4 7-5 6-5 7-5 6-5 7-4 6-5 6-5 7-5 6-5 7-4 6-5 7-5 6-5 6M1032 550l-5 7-4 6-5 7-5 6-5 6-5 7-5 6-4 7-5 6-5 7-5 6-5 6-4 7-5 6-5 7-5 6-5 7-4 6-5 6-5 7M1032 557l-5 6-5 7-5 6-4 7-5 6-5 6-5 7-5 6-5 7-4 6-5 7-5 6-5 6-4 7-5 6-5 7-5 6-4 7-5 6-5 6M1032 563l-5 7-5 6-5 7-5 6-4 6-5 7-5 6-5 7-5 6-5 7-4 6-5 6-5 7-5 6-4 7-5 6-5 7-5 6-4 6-5 7M1032 570l-5 6-5 7-5 6-5 7-5 6-5 6-4 7-5 6-5 7-5 6-5 7-4 6-5 6-5 7-5 6-4 7-5 6-5 7-5 6-4 6M1031 576l-5 7-4 6-5 7-5 6-5 6-5 7-5 6-4 7-5 6-5 7-5 6-5 6-4 7-5 6-5 7-5 6-4 7-5 6-5 6-4 7M1031 583l-5 6-5 7-5 6-4 7-5 6-5 6-5 7-5 6-4 7-5 6-5 7-5 6-5 6-4 7-5 6-5 7-4 6-5 7-5 6-5 6M1031 589l-5 7-5 6-5 7-5 6-4 6-5 7-5 6-5 7-5 6-4 7-5 6-5 6-5 7-4 6-5 7-5 6-5 7-4 6-5 6-5 7M1030 596l-4 6-5 7-5 6-5 7-5 6-5 6-4 7-5 6-5 7-5 6-4 7-5 6-5 6-5 7-4 6-5 7-5 6-5 7-4 6-5 6M1030 602l-5 7-5 6-4 7-5 6-5 6-5 7-5 6-4 7-5 6-5 7-5 6-4 6-5 7-5 6-5 7-4 6-5 7-5 6-4 6M1030 609l-5 6-5 7-5 6-4 7-5 6-5 6-5 7-5 6-4 7-5 6-5 7-5 6-4 6-5 7-5 6-5 7-4 6-5 7M1030 615l-5 7-5 6-5 7-5 6-4 6-5 7-5 6-5 7-5 6-4 7-5 6-5 6-5 7-4 6-5 7-5 6-4 7M1029 622l-5 6-4 7-5 6-5 7-5 6-5 6-4 7-5 6-5 7-5 6-4 7-5 6-5 6-4 7-5 6-5 7M1029 628l-5 7-5 6-4 7-5 6-5 6-5 7-5 6-4 7-5 6-5 7-5 6-4 6-5 7-5 6-4 7M1029 635l-5 6-5 7-5 6-4 7-5 6-5 6-5 7-5 6-4 7-5 6-5 7-4 6-5 6-5 7M1028 641l-4 7-5 6-5 7-5 6-4 6-5 7-5 6-5 7-5 6-4 7-5 6-5 6-4 7M1028 648l-5 6-4 7-5 6-5 6-5 7-4 6-5 7-5 6-5 7-4 6-5 6-5 7M1028 654l-5 7-5 6-4 7-5 6-5 6-5 7-4 6-5 7-5 6-5 7-4 6M1028 661l-5 6-5 7-5 6-4 6-5 7-5 6-5 7-4 6-5 7-5 6M1027 667l-4 7-5 6-5 7-5 6-4 6-5 7-5 6-5 7-4 6M1027 674l-5 6-4 7-5 6-5 6-5 7-4 6-5 7-5 6M1027 680l-5 7-5 6-4 7-5 6-5 6-5 7-4 6M1027 687l-5 6-5 7-5 6-4 6-5 7-5 6M1026 693l-4 7-5 6-5 7-5 6-4 6M1026 700l-5 6-5 7-4 6-5 6M1026 706l-5 7-5 6-5 7M1025 713l-4 6-5 7M1025 719l-5 7M947 289l4 7M946 302l2 4 3-4M946 309l5 6M946 335l4 6M945 361l2 2 3-2M943 445l2 3 2-3M942 451l5 7M942 471l3 4 2-4M942 477l4 7M941 490l5 7M938 607l2 3 3-2M937 633l2 3 3-3M937 646l2 4 3-4M937 666l1 2 3-2M936 685l4 7M936 692l2 5 2-5M936 705l0 3 4-3M935 718l2 1 3-1M952 289l4 7M951 302l1 4 4-4M950 354l2 4 3-4M949 393l4 7M948 406l5 7M948 426l2 5 3-5M946 504l1 2 3-2M945 530l4 6M945 543l2 3 2-3M944 549l5 7M944 569l2 4 3-4M943 588l5 7M942 627l3 2 2-2M942 646l4 7M958 250l4 7M956 322l4 6M955 328l5 7M953 400l3 3 2-3M953 406l4 4 1-4M952 432l5 7M951 484l4 7M950 510l2 4 3-4M950 523l4 7M949 562l1 5 3-5M947 608l5 6M947 614l5 7M946 660l4 6M945 686l2 3 3-3M962 257l5 6M959 374l4 6M956 478l2 2 2-2M955 504l3 4 2-4M955 510l4 7M953 562l5 7M953 569l5 6M953 582l4 6M952 621l4 6M950 679l3 3 1-3M949 705l4 7M949 712l2 2 2-2M966 296l5 6M964 361l2 3 3-3M964 367l4 7M961 452l2 2 3-2M960 484l5 7M958 562l2 5 3-5M956 614l5 7M953 712l3 2 2-2M972 250l2 3 3-2M971 283l2 3 3-3M971 289l5 7M969 341l2 3 3-3M969 354l5 7M968 380l4 1 1-1M968 387l3 3 2-3M968 400l4 6M966 465l2 4 2-4M965 471l5 7M965 484l2 2 3-2M964 504l5 6M962 569l2 3 3-3M962 575l3 4 2-4M962 582l2 3 3-3M962 595l4 6M961 608l5 6M960 640l5 7M959 666l2 4 3-4M958 712l3 3 2-3M978 231l1 3 4-3M977 264l4 6M976 270l5 7M976 296l2 3 2-3M975 315l3 4 2-3M974 341l5 7M974 348l3 2 2-2M973 374l2 4 3-4M973 393l3 4 1-3M970 484l4 7M969 491l3 4 2-4M969 510l4 7M969 517l1 4 3-4M968 530l5 6M967 556l5 6M966 595l5 6M966 614l4 7M965 627l5 7M980 296l5 7M980 316l2 3 3-3M979 342l5 6M979 348l2 3 3-3M978 381l3 3 1-3M977 407l4 6M976 439l3 4 2-4M974 491l3 4 2-4M974 504l4 7M973 523l5 7M972 556l3 4 2-4M972 562l1 3 3-2M971 575l2 3 3-2M968 692l3 3 1-3M967 699l5 6M985 296l4 2 1-2M984 322l3 4 2-4M983 374l4 7M981 413l3 3 2-3M980 446l5 6M979 478l5 7M977 537l2 2 3-2M977 543l3 4 2-4M976 563l5 6M975 601l2 4 3-3M975 608l2 4 3-4M973 653l5 7M991 283l4 7M989 316l1 3 4-3M989 342l2 2 2-2M987 374l2 3 3-3M987 394l1 4 4-4M986 407l5 6M981 556l5 7M981 576l4 6M980 582l3 4 2-4M980 608l3 4 1-4M978 654l3 2 2-2M976 718l4 7M996 270l1 5 4-5M995 290l3 3 2-3M994 322l5 7M991 400l3 3 2-3M991 413l4 7M990 426l1 3 4-3M988 504l4 7M985 569l2 2 3-2M985 582l1 3 4-3M984 621l4 7M983 634l5 7M983 641l4 6M998 355l1 3 3-3M995 433l4 6M994 472l4 6M992 517l2 4 3-4M990 576l2 4 2-4M989 595l5 7M988 615l2 3 3-3M988 621l1 4 4-4M988 641l1 4 3-4M987 647l3 5 2-5M987 654l3 3 2-3M986 680l2 2 3-2M986 693l1 3 3-3M1006 251l4 2 1-2M1006 257l4 4 1-3M1003 342l1 4 4-4M1001 394l5 6M999 452l2 3 3-3M997 517l4 7M995 550l3 2 2-2M995 569l4 7M994 576l3 3 2-3M994 589l2 3 3-3M993 621l4 7M992 634l2 5 3-5M991 660l5 7M990 693l1 4 4-4M1012 238l4 7M1010 271l5 6M1009 297l2 3 3-3M1009 309l3 3 2-2M1007 355l3 4 2-4M1006 381l3 3 2-3M1004 452l3 5 1-5M1003 459l3 4 2-4M1003 465l2 3 3-3M999 576l2 2 3-2M998 602l3 3 2-3M996 660l4 7M995 680l2 3 3-3M995 699l3 2 1-2M994 712l4 7M1015 271l5 6M1014 290l5 7M1012 349l5 6M1010 407l3 4 2-4M1010 414l2 3 2-3M1009 439l3 4 1-3M1008 459l2 4 3-4M1006 511l3 4 2-4M1005 530l5 7M1005 537l3 2 2-2M1004 569l3 6 2-6M1003 595l1 4 4-4M1002 608l3 4 2-4M1002 615l2 5 3-5M1000 660l3 4 2-4M1018 323l1 4 4-4M1017 355l4 7M1016 368l5 7M1015 401l4 6M1015 407l3 3 1-3M1014 433l3 3 1-3M1013 440l4 3 1-3M1013 466l1 3 3-3M1012 492l4 6M1011 498l4 5 1-5M1010 537l4 7M1009 556l4 7M1008 582l2 4 3-3M1007 621l4 7M1006 628l3 3 2-3M1006 634l4 7M1006 641l3 4 1-4M1006 647l1 4 3-3M1005 673l4 7M1003 706l5 6M1003 719l2 3 2-3M1026 232l2 2 3-2M1024 284l2 1 3-1M1024 297l4 6M1022 342l5 7M1022 349l3 3 2-3M1019 407l2 3 3-3M1017 472l3 5 2-5M1015 511l2 2 3-2M1014 557l2 4 2-4M1013 583l4 6M1010 654l4 7M1008 699l1 5 4-4M1031 245l2 2 3-2M1028 303l5 7M1028 310l5 6M1027 329l5 7M1027 336l3 3 2-3M1026 362l5 6M1026 368l2 4 3-4M1025 388l4 3 1-3M1024 414l4 6M1023 433l5 7M1023 446l3 5 1-5M1022 459l3 4 2-4M1021 492l2 3 2-3M1020 511l3 4 2-4M1017 576l3 2 2-2M1016 602l5 7M1016 622l4 6M1015 641l4 7M1013 693l4 7M1035 264l4 7M1032 329l2 4 3-4M1028 427l5 6M1028 433l3 4 2-4M1027 446l3 5 2-5M1027 453l2 2 3-2M1024 531l4 6M1023 550l2 4 3-4M1022 576l4 7M1021 602l4 7M1021 609l4 6M1019 661l4 6M1016 719l4 7M1040 245l5 7M1039 271l3 3 2-3M1039 290l2 4 2-3M1038 310l2 4 2-4M1037 316l5 7M1035 375l2 3 3-3M1034 394l3 3 2-3M1034 407l2 4 2-4M1030 505l4 6M1028 537l5 7M1027 570l4 6M1027 576l4 7M1026 589l4 7M1025 622l2 2 2-2M1024 635l4 6M1023 661l3 2 2-2M1023 674l2 3 2-3M1022 693l4 7M1021 706l4 7" stroke="#000" stroke-width="1" fill="none" shape-rendering="crispEdges" transform="translate(0.5 0.5)"/>
<path d="M1046 232l7 0 7 0 7 0 7 0 7 1M1046 239l7 0 7 0 7 0 7 0 7 0M1045 245l7 0 7 0 7 0 7 0 7 1M1045 252l7 0 7 0 7 0 7 0 7 0M1045 258l7 0 7 0 7 0 7 0 7 1M1044 265l7 0 7 0 7 0 7 0 7 0M1044 271l7 0 7 0 7 0 7 0 7 1M1044 278l7 0 7 0 7 0 7 0 7 0M1044 284l7 0 7 0 7 0 6 0 7 1M1043 291l7 0 7 0 7 0 7 0 7 0M1043 297l7 0 7 0 7 0 7 0 7 1M1043 304l7 0 7 0 7 0 7 0 6 0M1042 310l7 0 7 0 7 0 7 0 7 1M1042 316l7 1 7 0 7 0 7 0 7 0M1042 323l7 0 7 0 7 0 7 0 6 1M1042 329l7 1 7 0 6 0 7 0 7 0M1041 336l7 0 7 0 7 0 7 0 7 0M1041 342l7 1 7 0 7 0 7 0 6 0M1041 349l7 0 7 0 7 0 6 0 7 0M1041 355l6 1 7 0 7 0 7 0 7 0M1040 362l7 0 7 0 7 0 7 0 7 0M1040 368l7 1 7 0 7 0 7 0 6 0M1040 375l7 0 6 0 7 0 7 0 7 0M1039 381l7 1 7 0 7 0 7 0 7 0M1039 388l7 0 7 0 7 0 7 0 6 0M1039 394l7 1 7 0 6 0 7 0 7 0M1039 401l6 0 7 0 7 0 7 0 7 0M1038 407l7 1 7 0 7 0 7 0 6 0M1038 414l7 0 7 0 7 0 6 0 7 0M1038 420l7 1 6 0 7 0 7 0 7 0M1038 427l6 0 7 0 7 0 7 0 6 0M1037 433l7 1 7 0 7 0 6 0 7 0M1037 440l7 0 7 0 6 0 7 0 7 0M1037 446l7 1 6 0 7 0 7 0 6 0M1036 453l7 0 7 0 7 0 7 0 6 0M1036 459l7 1 7 0 6 0 7 0 7 0M1036 466l7 0 6 0 7 0 7 0 6 0M1036 472l6 0 7 1 7 0 7 0 6 0M1035 479l7 0 7 0 7 0 6 0 7 0M1035 485l7 0 7 1 6 0 7 0 6 0M1035 492l7 0 6 0 7 0 7 0 6 0M1035 498l6 0 7 1 7 0 6 0 7 0M1034 505l7 0 7 0 6 0 7 0 6 0M1034 511l7 0 6 1 7 0 7 0 6 0M1034 518l6 0 7 0 7 0 7 0 6 0M1033 524l7 0 7 1 7 0 6 0 6 0M1033 531l7 0 7 0 6 0 7 0 6 0M1033 537l7 0 6 1 7 0 7 0 6 0M1033 544l6 0 7 0 7 0 6 0 7 0M1032 550l7 0 7 1 6 0 7 0 6 0M1032 557l7 0 6 0 7 0 7 0 6 0M1032 563l6 0 7 1 7 0 6 0 7 0M1032 570l6 0 7 0 6 0 7 0 6 0M1031 576l7 0 7 1 6 0 7 0 6 0M1031 583l7 0 6 0 7 0 6 0 7 0M1031 589l6 0 7 1 7 0 6 0 6 0M1030 596l7 0 7 0 6 0 7 0 6 0M1030 602l7 0 6 1 7 0 7 0 6 0M1030 609l6 0 7 0 7 0 6 0 6 0M1030 615l6 0 7 1 6 0 7 0 6 0M1029 622l7 0 6 0 7 0 7 0 6 0M1029 628l7 0 6 0 7 1 6 0 6 0M1029 635l6 0 7 0 6 0 7 0 6 0M1028 641l7 0 7 0 6 1 7 0 6 0M1028 648l7 0 6 0 7 0 6 0 6 0M1028 654l6 0 7 0 7 1 6 0 6 0M1028 661l6 0 7 0 6 0 7 0 6 0M1027 667l7 0 6 0 7 1 7 0 5 0M1027 674l7 0 6 0 7 0 6 0 6 0M1027 680l6 0 7 0 6 1 7 0 6 0M1027 687l6 0 7 0 6 0 7 0 5 0M1026 693l7 0 6 0 7 1 6 0 6 0M1026 700l7 0 6 0 7 0 6 0 6 0M1026 706l6 0 7 0 6 1 7 0 6 0M1025 713l7 0 6 0 7 0 6 0 6 0M1025 719l7 0 6 0 7 1 6 0 6 0M1025 726l6 0 7 0 6 0 7 0 6 0M1046 232l0 7-1 6 0 7 0 6-1 7 0 6 0 7 0 6-1 7 0 6 0 7-1 6 0 6 0 7 0 6-1 7 0 6 0 7 0 6-1 7 0 6 0 7-1 6 0 7 0 6 0 7-1 6 0 7 0 6 0 7-1 6 0 7 0 6-1 7 0 6 0 7 0 6-1 7 0 6 0 7 0 6-1 7 0 6 0 7-1 6 0 7 0 6 0 7-1 6 0 7 0 6 0 7-1 6 0 7 0 6-1 7 0 6 0 7 0 6-1 7 0 6 0 7-1 6 0 7 0 6 0 7-1 6 0 7 0 6 0 7-1 6 0 7 0 6-1 7 0 6 0 7M1053 232l0 7-1 6 0 7 0 6-1 7 0 6 0 7 0 6-1 7 0 6 0 7-1 6 0 7 0 6 0 7-1 6 0 7 0 6-1 7 0 6 0 7 0 6-1 7 0 6 0 7-1 6 0 7 0 6 0 7-1 6 0 7 0 6 0 7-1 6 0 7 0 6-1 6 0 7 0 6 0 7-1 6 0 7 0 6-1 7 0 6 0 7 0 6-1 7 0 6 0 7-1 6 0 7 0 6 0 7-1 6 0 7 0 6-1 7 0 6 0 7 0 6-1 7 0 6 0 7-1 6 0 7 0 6 0 7-1 6 0 7 0 6 0 7-1 6 0 7 0 6-1 7M1060 232l0 7-1 6 0 7 0 6-1 7 0 6 0 7 0 6-1 7 0 6 0 7-1 6 0 7 0 6 0 7-1 6 0 7 0 6-1 7 0 6 0 7-1 6 0 7 0 6 0 7-1 6 0 7 0 6-1 7 0 6 0 7 0 6-1 7 0 6 0 7-1 6 0 7 0 6 0 7-1 6 0 7 0 6-1 7 0 6 0 7 0 6-1 7 0 6 0 7-1 6 0 7 0 6 0 7-1 6 0 7 0 6-1 7 0 6 0 7-1 6 0 6 0 7 0 6-1 7 0 6 0 7-1 6 0 7 0 6 0 7-1 6 0 7 0 6-1 7 0 6 0 7M1067 232l0 7-1 6 0 7 0 6-1 7 0 6 0 7 0 6-1 7 0 6 0 7-1 6 0 7 0 6-1 7 0 6 0 7 0 6-1 7 0 6 0 7-1 6 0 7 0 6-1 7 0 6 0 7 0 6-1 7 0 6 0 7-1 6 0 7 0 6-1 7 0 6 0 7 0 6-1 7 0 6 0 7-1 6 0 7 0 6 0 7-1 6 0 7 0 6-1 7 0 6 0 7-1 6 0 7 0 6 0 7-1 6 0 7 0 6-1 7 0 6 0 7-1 6 0 7 0 6 0 7-1 6 0 7 0 6-1 7 0 6 0 7 0 6-1 7 0 6 0 7-1 6M1074 232l0 7-1 6 0 7 0 6-1 7 0 6 0 7-1 6 0 7 0 6 0 7-1 6 0 7 0 6-1 7 0 6 0 7-1 6 0 7 0 6 0 7-1 6 0 7 0 6-1 7 0 6 0 7-1 6 0 7 0 6-1 7 0 6 0 7 0 6-1 7 0 6 0 7-1 6 0 7 0 6-1 7 0 6 0 7 0 6-1 7 0 6 0 7-1 6 0 7 0 6-1 7 0 6 0 7-1 6 0 7 0 6 0 7-1 6 0 7 0 6-1 7 0 6 0 7-1 6 0 7 0 6 0 7-1 6 0 7 0 6-1 7 0 6 0 7-1 6 0 7 0 6M1081 233l0 6-1 7 0 6 0 7-1 6 0 7 0 6-1 7 0 6 0 7-1 6 0 7 0 6-1 7 0 6 0 6-1 7 0 6 0 7 0 6-1 7 0 6 0 7-1 6 0 7 0 6-1 7 0 6 0 7-1 6 0 7 0 6-1 7 0 6 0 7-1 6 0 7 0 6-1 7 0 6 0 7-1 6 0 7 0 6-1 7 0 6 0 7 0 6-1 7 0 6 0 7-1 6 0 7 0 6-1 7 0 6 0 7-1 6 0 7 0 6-1 7 0 6 0 7-1 6 0 7 0 6-1 7 0 6 0 7-1 6 0 7 0 6 0 7-1 6 0 7 0 6M1053 232l-7 7M1060 232l-7 7-8 6M1067 232l-7 7-8 6-7 7M1074 232l-7 7-8 6-7 7-7 6M1081 233l-7 6-8 6-7 7-7 6-8 7M1081 239l-8 6-7 7-7 6-8 7-7 6M1080 246l-7 6-7 6-8 7-7 6-7 7M1080 252l-7 6-8 7-7 6-7 7-7 6M1080 259l-8 6-7 6-7 7-7 6-8 7M1079 265l-7 6-7 7-7 6-8 7-7 6M1079 272l-7 6-7 6-8 7-7 6-7 7M1079 278l-8 6-7 7-7 6-7 7-8 6M1078 285l-7 6-7 6-7 7-8 6-7 6M1078 291l-7 6-7 7-8 6-7 7-7 6M1078 298l-7 6-8 6-7 7-7 6-7 6M1077 304l-7 6-7 7-7 6-7 7-8 6M1077 311l-7 6-7 6-7 7-8 6-7 6M1077 317l-7 6-8 7-7 6-7 7-7 6M1076 324l-7 6-7 6-7 7-7 6-7 6M1076 330l-7 6-7 7-7 6-8 7-7 6M1076 336l-7 7-7 6-8 7-7 6-7 6M1075 343l-7 6-7 7-7 6-7 7-7 6M1075 349l-7 7-7 6-7 7-7 6-8 6M1075 356l-7 6-7 7-8 6-7 7-7 6M1075 362l-7 7-8 6-7 7-7 6-7 6M1074 369l-7 6-7 7-7 6-7 7-7 6M1074 375l-7 7-7 6-7 7-8 6-7 6M1074 382l-7 6-8 7-7 6-7 7-7 6M1073 388l-7 7-7 6-7 7-7 6-7 6M1073 395l-7 6-7 7-7 6-7 7-7 6M1073 401l-7 7-7 6-8 7-7 6-7 6M1072 408l-7 6-7 7-7 6-7 7-7 6M1072 414l-7 7-7 6-7 7-7 6-7 6M1072 421l-7 6-7 7-7 6-7 7-8 6M1071 427l-7 7-7 6-7 7-7 6-7 6M1071 434l-7 6-7 7-7 6-7 7-7 6M1071 440l-7 7-7 6-7 7-7 6-7 6M1070 447l-6 6-8 7-7 6-7 6-7 7M1070 453l-7 7-7 6-7 7-7 6-7 6M1070 460l-7 6-7 7-7 6-7 6-7 7M1069 466l-6 7-7 6-7 7-7 6-7 6M1069 473l-7 6-7 7-7 6-7 6-7 7M1069 479l-7 7-7 6-7 7-7 6-7 6M1068 486l-6 6-7 7-7 6-7 6-7 7M1068 492l-7 7-7 6-7 7-7 6-7 6M1068 499l-7 6-7 7-7 6-7 6-7 7M1067 505l-6 7-7 6-7 7-7 6-7 6M1067 512l-6 6-7 7-7 6-7 6-7 7M1067 518l-7 7-7 6-7 7-7 6-7 6M1066 525l-6 6-7 7-7 6-7 6-7 7M1066 531l-6 7-7 6-7 7-7 6-7 6M1066 538l-7 6-7 7-7 6-7 6-6 7M1066 544l-7 7-7 6-7 7-7 6-7 6M1065 551l-6 6-7 7-7 6-7 6-7 7M1065 557l-7 7-7 6-6 7-7 6-7 6M1065 564l-7 6-7 7-7 6-7 6-7 7M1064 570l-6 7-7 6-7 7-7 6-7 6M1064 577l-7 6-6 7-7 6-7 6-7 7M1064 583l-7 7-7 6-7 7-7 6-6 6M1063 590l-6 6-7 7-7 6-7 6-7 7M1063 596l-6 7-7 6-7 7-7 6-7 6M1063 603l-7 6-7 7-7 6-6 6-7 7M1062 609l-6 7-7 6-7 6-7 7-7 6M1062 616l-6 6-7 7-7 6-7 6-7 7M1062 622l-7 7-7 6-6 6-7 7-7 6M1061 629l-6 6-7 7-7 6-7 6-6 7M1061 635l-6 7-7 6-7 6-7 7-7 6M1061 642l-7 6-6 7-7 6-7 6-7 7M1060 648l-6 7-7 6-7 6-6 7-7 6M1060 655l-6 6-7 7-7 6-7 6-6 7M1060 661l-6 7-7 6-7 6-7 7-7 6M1059 668l-6 6-7 7-6 6-7 6-7 7M1059 674l-6 7-7 6-7 6-6 7-7 6M1059 681l-6 6-7 7-7 6-7 6-7 7M1058 687l-6 7-6 6-7 6-7 7-7 6M1058 694l-6 6-7 7-7 6-6 6-7 7M1058 700l-6 7-7 6-7 6-7 7M1058 707l-7 6-6 7-7 6M1057 713l-6 7-7 6M1057 720l-6 6M1045 252l7 6M1044 265l3 2 4-2M1044 278l7 6M1042 329l6 7M1041 342l7 7M1039 388l7 7M1039 394l4 3 3-2M1039 401l2 3 4-3M1037 440l3 3 4-3M1036 459l7 7M1036 472l3 4 3-4M1034 505l7 6M1034 511l6 7M1034 518l2 3 4-3M1033 544l3 3 3-3M1032 557l6 6M1031 576l3 3 4-3M1030 596l7 6M1029 635l6 6M1028 641l7 7M1053 232l3 3 4-3M1052 245l7 7M1052 258l3 3 4-3M1051 271l7 7M1051 284l6 7M1049 310l5 5 2-5M1047 375l6 7M1046 395l3 2 4-2M1044 427l7 7M1044 434l2 3 5-3M1042 492l6 7M1040 524l4 4 3-3M1039 544l7 7M1039 550l6 7M1039 557l6 7M1038 570l4 4 3-4M1038 576l6 7M1036 615l4 4 3-3M1035 635l7 6M1035 648l4 2 2-2M1034 667l3 3 3-3M1033 693l3 4 3-4M1060 239l6 6M1059 252l4 3 3-3M1059 258l6 7M1058 271l7 7M1058 278l4 3 3-3M1057 297l7 7M1056 317l2 2 5-2M1056 323l3 3 4-3M1056 330l6 6M1055 343l7 6M1054 362l7 7M1053 388l3 4 4-4M1052 408l3 2 4-2M1052 414l4 4 3-4M1051 421l7 6M1049 486l3 4 3-4M1047 512l4 3 3-3M1045 557l2 3 5-3M1044 583l7 7M1044 596l6 7M1042 622l5 3 2-3M1042 628l6 7M1042 635l6 7M1041 661l3 4 3-4M1040 667l7 7M1040 674l6 7M1040 680l4 5 2-4M1039 700l3 3 4-3M1039 706l3 4 3-3M1067 239l6 6M1066 245l2 3 5-3M1066 258l2 3 5-3M1065 265l7 6M1065 278l6 6M1062 349l3 3 3-3M1060 375l4 2 3-2M1059 395l5 3 2-3M1057 447l3 2 4-2M1056 460l3 3 4-3M1055 486l4 2 3-2M1055 492l6 7M1054 512l3 2 4-2M1054 525l6 6M1046 687l6 7M1073 245l7 7M1073 252l7 7M1070 310l5 3 2-2M1070 317l2 2 5-2M1070 323l6 7M1067 375l7 7M1066 395l5 4 2-4M1066 401l2 3 5-3M1065 421l6 6M1064 440l3 3 4-3M1064 447l6 6M1063 473l6 6M1060 538l6 6M1059 551l6 6M1058 564l6 6M1058 570l6 7M1057 583l6 7M1057 590l6 6M1057 596l6 7M1057 603l5 6M1056 616l3 3 3-3M1055 629l3 3 3-3M1055 635l2 4 4-4M1055 642l3 2 3-2M1054 655l3 2 3-2M1051 713l3 4 3-4" stroke="#000" stroke-width="1" fill="none" shape-rendering="crispEdges" transform="translate(0.5 0.5)"/>
<path d="M614 418l2 274M655 398l1 272M695 378l2 271M736 360l2 269M778 342l-1 269M818 326l-2 268M860 309l-3 268M904 294l-5 266M947 279l-7 266M953 277l-7 266M961 275l-8 265M966 273l-8 266M975 271l-8 265M983 268l-9 265M990 266l-9 265M999 263l-9 265M1008 261l-10 264M1016 259l-10 264M1024 256l-10 264M1031 254l-11 264M1038 252l-11 264M1045 251l-11 263" stroke="#000" stroke-width="1.6" fill="none"/>
</g>
<g fill="none" stroke="#000" stroke-width="1.5"><path d="M345 274 L356 266.7 L367 259.6 L378 252.5 L389 245.5 L400 238.6 L411 231.9 L422 225.2 L433 218.6 L444 212.1 L455 205.7 L466 199.3 L477 193.1 L488 187 L499 181 L510 175 L521 169.2 L532 163.4 L543 157.8 L554 152.2 L565 146.8 L576 141.4 L587 136.1 L598 131 L609 125.9 L620 120.9 L631 116 L642 111.2 L653 106.5 L664 101.9 L675 97.4 L686 93 L697 88.6 L708 84.4 L719 80.3 L730 76.2 L741 72.3 L752 68.4 L763 64.7 L774 61 L774 61 L781.9 65.6 L789.7 70.3 L797.6 74.9 L805.4 79.5 L813.3 84.1 L821.2 88.8 L829 93.4 L836.9 98 L844.7 102.7 L852.6 107.3 L860.4 111.9 L868.3 116.5 L876.2 121.2 L884 125.8 L891.9 130.4 L899.7 135.1 L907.6 139.7 L915.5 144.3 L923.3 148.9 L931.2 153.6 L939 158.2 L946.9 162.8 L954.8 167.4 L962.6 172.1 L970.5 176.7 L978.3 181.3 L986.2 186 L994.1 190.6 L1001.9 195.2 L1009.8 199.8 L1017.6 204.5 L1025.5 209.1 L1033.3 213.7 L1041.2 218.4 L1049.1 223 L1056.9 227.6 L1064.8 232.2 L1072.6 236.9 L1080.5 241.5 L1080.5 241.5 L1067.6 244.7 L1054.6 248 L1041.7 251.5 L1028.7 255 L1015.8 258.6 L1002.8 262.3 L989.9 266.1 L976.9 270 L964 274 L951 278.1 L938.1 282.2 L925.2 286.5 L912.2 290.9 L899.3 295.4 L886.3 299.9 L873.4 304.6 L860.5 309.3 L847.5 314.2 L834.6 319.1 L821.7 324.2 L808.7 329.3 L795.8 334.5 L782.9 339.8 L769.9 345.3 L757 350.8 L744.1 356.4 L731.1 362.1 L718.2 367.9 L705.3 373.8 L692.3 379.8 L679.4 385.9 L666.5 392.1 L653.6 398.3 L640.6 404.7 L627.7 411.2 L614.8 417.7 L601.8 424.4 L588.9 431.2 L576 438 L576 438 L570.1 433.8 L564.2 429.6 L558.2 425.4 L552.3 421.2 L546.4 417 L540.5 412.8 L534.5 408.6 L528.6 404.4 L522.7 400.2 L516.8 395.9 L510.8 391.7 L504.9 387.5 L499 383.3 L493.1 379.1 L487.2 374.9 L481.2 370.7 L475.3 366.5 L469.4 362.3 L463.5 358.1 L457.5 353.9 L451.6 349.7 L445.7 345.5 L439.8 341.3 L433.8 337.1 L427.9 332.9 L422 328.7 L416.1 324.5 L410.2 320.3 L404.2 316.1 L398.3 311.8 L392.4 307.6 L386.5 303.4 L380.5 299.2 L374.6 295 L368.7 290.8 L362.8 286.6 L356.8 282.4 L350.9 278.2 L345 274Z"/><path d="M345 274 L350.9 278.2 L356.8 282.4 L362.8 286.6 L368.7 290.8 L374.6 295 L380.5 299.2 L386.5 303.4 L392.4 307.6 L398.3 311.8 L404.2 316.1 L410.2 320.3 L416.1 324.5 L422 328.7 L427.9 332.9 L433.8 337.1 L439.8 341.3 L445.7 345.5 L451.6 349.7 L457.5 353.9 L463.5 358.1 L469.4 362.3 L475.3 366.5 L481.2 370.7 L487.2 374.9 L493.1 379.1 L499 383.3 L504.9 387.5 L510.8 391.7 L516.8 395.9 L522.7 400.2 L528.6 404.4 L534.5 408.6 L540.5 412.8 L546.4 417 L552.3 421.2 L558.2 425.4 L564.2 429.6 L570.1 433.8 L576 438 L576 438 L576.1 445.1 L576.1 452.1 L576.2 459.2 L576.2 466.3 L576.3 473.3 L576.3 480.4 L576.4 487.4 L576.4 494.5 L576.5 501.6 L576.5 508.6 L576.6 515.7 L576.6 522.8 L576.7 529.8 L576.7 536.9 L576.8 544 L576.8 551 L576.9 558.1 L576.9 565.2 L577 572.2 L577 579.3 L577.1 586.3 L577.1 593.4 L577.2 600.5 L577.2 607.5 L577.3 614.6 L577.3 621.7 L577.4 628.7 L577.4 635.8 L577.5 642.9 L577.5 649.9 L577.6 657 L577.6 664.1 L577.7 671.1 L577.7 678.2 L577.8 685.2 L577.8 692.3 L577.9 699.4 L577.9 706.4 L578 713.5 L578 713.5 L572.3 709 L566.6 704.4 L561 699.9 L555.3 695.4 L549.6 690.9 L543.9 686.3 L538.2 681.8 L532.6 677.3 L526.9 672.8 L521.2 668.2 L515.5 663.7 L509.8 659.2 L504.2 654.7 L498.5 650.1 L492.8 645.6 L487.1 641.1 L481.4 636.6 L475.8 632 L470.1 627.5 L464.4 623 L458.7 618.5 L453.1 613.9 L447.4 609.4 L441.7 604.9 L436 600.4 L430.3 595.8 L424.7 591.3 L419 586.8 L413.3 582.3 L407.6 577.7 L401.9 573.2 L396.3 568.7 L390.6 564.2 L384.9 559.6 L379.2 555.1 L373.5 550.6 L367.9 546.1 L362.2 541.5 L356.5 537 L356.5 537 L356.2 530.3 L355.9 523.5 L355.6 516.8 L355.3 510 L355 503.3 L354.7 496.5 L354.4 489.8 L354.1 483.1 L353.8 476.3 L353.6 469.6 L353.3 462.8 L353 456.1 L352.7 449.3 L352.4 442.6 L352.1 435.8 L351.8 429.1 L351.5 422.4 L351.2 415.6 L350.9 408.9 L350.6 402.1 L350.3 395.4 L350 388.6 L349.7 381.9 L349.4 375.2 L349.1 368.4 L348.8 361.7 L348.5 354.9 L348.2 348.2 L347.9 341.4 L347.7 334.7 L347.4 327.9 L347.1 321.2 L346.8 314.5 L346.5 307.7 L346.2 301 L345.9 294.2 L345.6 287.5 L345.3 280.7 L345 274Z"/><path d="M576 438 L588.9 431.2 L601.8 424.4 L614.8 417.7 L627.7 411.2 L640.6 404.7 L653.6 398.3 L666.5 392.1 L679.4 385.9 L692.3 379.8 L705.3 373.8 L718.2 367.9 L731.1 362.1 L744.1 356.4 L757 350.8 L769.9 345.3 L782.9 339.8 L795.8 334.5 L808.7 329.3 L821.7 324.2 L834.6 319.1 L847.5 314.2 L860.5 309.3 L873.4 304.6 L886.3 299.9 L899.3 295.4 L912.2 290.9 L925.2 286.5 L938.1 282.2 L951 278.1 L964 274 L976.9 270 L989.9 266.1 L1002.8 262.3 L1015.8 258.6 L1028.7 255 L1041.7 251.5 L1054.6 248 L1067.6 244.7 L1080.5 241.5 L1080.5 241.5 L1080.2 248.2 L1079.8 255 L1079.5 261.7 L1079.2 268.5 L1078.8 275.2 L1078.5 282 L1078.2 288.7 L1077.8 295.4 L1077.5 302.2 L1077.2 308.9 L1076.8 315.7 L1076.5 322.4 L1076.2 329.2 L1075.8 335.9 L1075.5 342.7 L1075.2 349.4 L1074.8 356.1 L1074.5 362.9 L1074.2 369.6 L1073.8 376.4 L1073.5 383.1 L1073.2 389.9 L1072.8 396.6 L1072.5 403.3 L1072.2 410.1 L1071.8 416.8 L1071.5 423.6 L1071.2 430.3 L1070.8 437.1 L1070.5 443.8 L1070.2 450.6 L1069.8 457.3 L1069.5 464 L1069.2 470.8 L1068.8 477.5 L1068.5 484.3 L1068.2 491 L1067.8 497.8 L1067.5 504.5 L1067.5 504.5 L1054.9 508 L1042.4 511.7 L1029.8 515.4 L1017.2 519.2 L1004.7 523.1 L992.1 527.2 L979.6 531.3 L967 535.5 L954.4 539.8 L941.9 544.2 L929.3 548.7 L916.8 553.3 L904.2 557.9 L891.7 562.7 L879.1 567.6 L866.6 572.6 L854 577.7 L841.5 582.8 L828.9 588.1 L816.3 593.4 L803.8 598.9 L791.2 604.4 L778.7 610.1 L766.2 615.8 L753.6 621.7 L741.1 627.6 L728.5 633.6 L716 639.8 L703.4 646 L690.9 652.3 L678.3 658.7 L665.8 665.2 L653.2 671.8 L640.7 678.5 L628.2 685.3 L615.6 692.2 L603.1 699.2 L590.5 706.3 L578 713.5 L578 713.5 L577.9 706.4 L577.9 699.4 L577.8 692.3 L577.8 685.2 L577.7 678.2 L577.7 671.1 L577.6 664.1 L577.6 657 L577.5 649.9 L577.5 642.9 L577.4 635.8 L577.4 628.7 L577.3 621.7 L577.3 614.6 L577.2 607.5 L577.2 600.5 L577.1 593.4 L577.1 586.3 L577 579.3 L577 572.2 L576.9 565.2 L576.9 558.1 L576.8 551 L576.8 544 L576.7 536.9 L576.7 529.8 L576.6 522.8 L576.6 515.7 L576.5 508.6 L576.5 501.6 L576.4 494.5 L576.4 487.4 L576.3 480.4 L576.3 473.3 L576.2 466.3 L576.2 459.2 L576.1 452.1 L576.1 445.1 L576 438Z"/></g>
</svg>
<div id="task">
<div style="position:absolute;left:723px;top:0;width:155px;height:8px;background:#03508f"></div>
<div style="position:absolute;left:878px;top:0;width:488px;height:8px;background:#0a2c52"></div>
<div style="position:absolute;left:1037px;top:0;width:22px;height:8px;background:#1a3b60"></div>
<div style="position:absolute;left:1361px;top:0;width:1px;height:8px;background:#6a7f98"></div>
<svg width="70" height="8" style="position:absolute;left:1290px;top:0" viewBox="0 0 70 8"><g stroke="#fff" stroke-width="1.2" fill="none">
<path d="M8 5.8h10.5M12.5 5.8v3"/><path d="M23 6.5l-1 2M22.5 7.5h7.5"/><path d="M38 6.5l-1.5 1.5M38 6.2v3"/><path d="M48 6.2h5.5M48 6.2v3"/><path d="M57.5 6.5l-1.5 1.5M57.5 6.2v3"/></g></svg>
</div>
</body></html>
